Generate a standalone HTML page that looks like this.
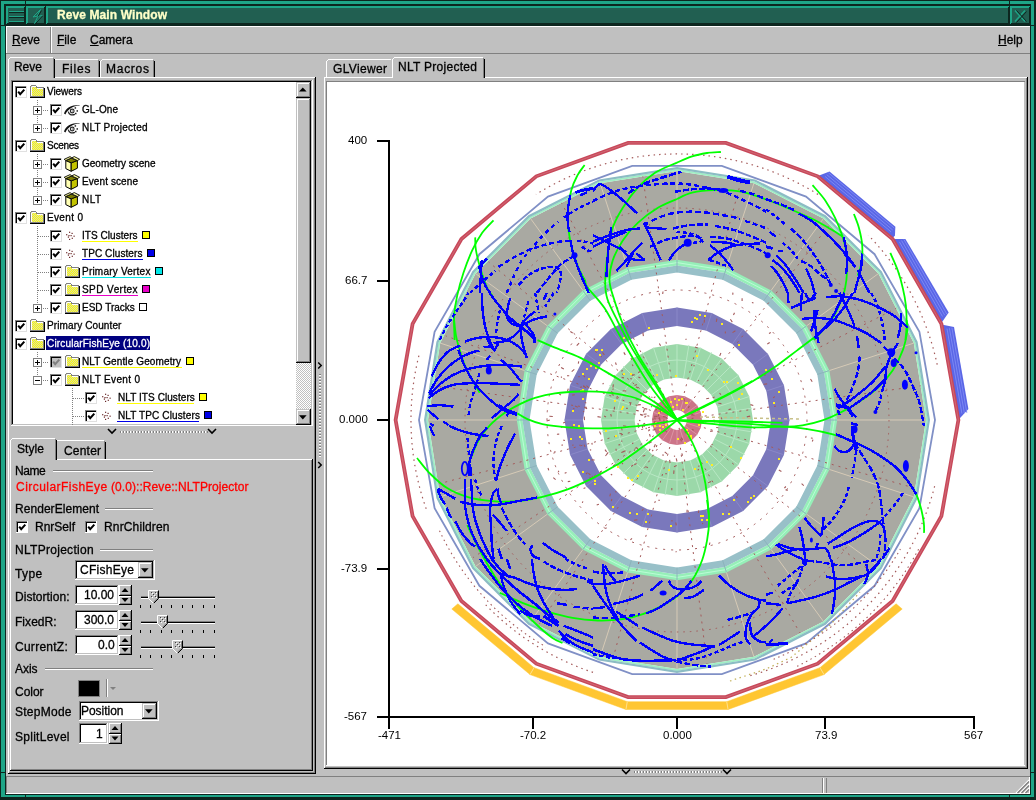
<!DOCTYPE html>
<html><head><meta charset="utf-8"><title>Reve Main Window</title>
<style>
html,body{margin:0;padding:0;background:#c0c0c0;}
#w{position:relative;width:1036px;height:800px;overflow:hidden;font-family:"Liberation Sans",sans-serif;}
#w div,#w span,#w svg{position:absolute;display:block;}
#w span{white-space:pre;will-change:transform;-webkit-text-stroke:0.3px currentColor;}
#w u{text-decoration:underline;text-underline-offset:1px;}
</style></head><body><div id="w">
<div style="left:0px;top:0px;width:1036px;height:800px;background:#0d261f;"></div>
<div style="left:1px;top:1px;width:1034px;height:798px;background:#1ea587;"></div>
<div style="left:4px;top:4px;width:1028px;height:792px;background:#0d261f;"></div>
<div style="left:1px;top:26px;width:4px;height:770px;background:#1ea587;"></div>
<div style="left:1031px;top:26px;width:4px;height:770px;background:#1ea587;"></div>
<div style="left:1px;top:795px;width:1034px;height:2px;background:#1ea587;"></div>
<div style="left:1035px;top:0px;width:1px;height:800px;background:#0d261f;"></div>
<div style="left:0px;top:797px;width:1036px;height:3px;background:#0d261f;"></div>
<div style="left:1034px;top:1px;width:2px;height:798px;background:#0d261f;"></div>
<div style="left:1px;top:1px;width:1033px;height:2px;background:#1ea587;"></div>
<div style="left:1px;top:1px;width:3px;height:24px;background:#1ea587;"></div>
<div style="left:1031px;top:1px;width:3px;height:24px;background:#1ea587;"></div>
<div style="left:0px;top:25px;width:6px;height:1px;background:#0d261f;"></div>
<div style="left:1030px;top:25px;width:6px;height:1px;background:#0d261f;"></div>
<div style="left:25px;top:0px;width:1px;height:6px;background:#0d261f;"></div>
<div style="left:1009px;top:0px;width:1px;height:6px;background:#0d261f;"></div>
<div style="left:0px;top:772px;width:6px;height:1px;background:#0d261f;"></div>
<div style="left:1030px;top:772px;width:6px;height:1px;background:#0d261f;"></div>
<div style="left:25px;top:794px;width:1px;height:6px;background:#0d261f;"></div>
<div style="left:1009px;top:794px;width:1px;height:6px;background:#0d261f;"></div>
<div style="left:6px;top:6px;width:1024px;height:20px;background:#0d261f;"></div>
<div style="left:6px;top:6px;width:19px;height:18px;background:#1ea587;"></div>
<div style="left:8px;top:8px;width:17px;height:16px;background:#215f51;"></div>
<div style="left:24px;top:7px;width:1px;height:17px;background:#0d261f;"></div>
<div style="left:7px;top:23px;width:18px;height:1px;background:#0d261f;"></div>
<div style="left:26px;top:6px;width:19px;height:18px;background:#1ea587;"></div>
<div style="left:28px;top:8px;width:17px;height:16px;background:#215f51;"></div>
<div style="left:44px;top:7px;width:1px;height:17px;background:#0d261f;"></div>
<div style="left:27px;top:23px;width:18px;height:1px;background:#0d261f;"></div>
<div style="left:46px;top:6px;width:963px;height:18px;background:#1ea587;"></div>
<div style="left:48px;top:8px;width:961px;height:16px;background:#215f51;"></div>
<div style="left:1008px;top:7px;width:1px;height:17px;background:#0d261f;"></div>
<div style="left:47px;top:23px;width:962px;height:1px;background:#0d261f;"></div>
<div style="left:1010px;top:6px;width:20px;height:18px;background:#1ea587;"></div>
<div style="left:1012px;top:8px;width:18px;height:16px;background:#215f51;"></div>
<div style="left:1029px;top:7px;width:1px;height:17px;background:#0d261f;"></div>
<div style="left:1011px;top:23px;width:19px;height:1px;background:#0d261f;"></div>
<div style="left:9px;top:11px;width:15px;height:1px;background:#1ea587;"></div>
<div style="left:9px;top:12px;width:15px;height:1px;background:#0d261f;"></div>
<div style="left:9px;top:16px;width:15px;height:1px;background:#1ea587;"></div>
<div style="left:9px;top:17px;width:15px;height:1px;background:#0d261f;"></div>
<div style="left:9px;top:21px;width:15px;height:1px;background:#1ea587;"></div>
<div style="left:9px;top:22px;width:15px;height:1px;background:#0d261f;"></div>
<svg style="left:26px;top:6px" width="20" height="19" viewBox="0 0 20 19" ><path d="M14.5,3.5 L7,11 L12,10 L8.5,17.5 L16,9.5 L11,10.5 Z" fill="none" stroke="#1ea587" stroke-width="1"/><path d="M15.5,4.5 L12,10.5 M16.5,10 L9.5,17.5" stroke="#0d261f" stroke-width="1" fill="none"/></svg>
<svg style="left:1010px;top:6px" width="20" height="19" viewBox="0 0 20 19" ><path d="M5,4.5 L15,15.5 M15,4.5 L5,15.5" stroke="#1ea587" stroke-width="1.6" fill="none"/><path d="M6.5,4.5 L16.5,15.5 M16.5,5.5 L6.5,16.5" stroke="#0d261f" stroke-width="1" fill="none"/></svg>
<span style="left:57.00px;top:8.84px;font-size:12px;line-height:12px;color:#ffffc8;font-weight:bold;letter-spacing:0.095px;">Reve Main Window</span>
<div style="left:6px;top:26px;width:1024px;height:768px;background:#c0c0c0;"></div>
<div style="left:6px;top:26px;width:1024px;height:1px;background:#ffffff;"></div>
<div style="left:6px;top:26px;width:1px;height:27px;background:#ffffff;"></div>
<div style="left:6px;top:53px;width:1024px;height:1px;background:#808080;"></div>
<div style="left:50px;top:27px;width:1px;height:26px;background:#808080;"></div>
<div style="left:51px;top:27px;width:1px;height:26px;background:#ffffff;"></div>
<span style="left:12.00px;top:33.84px;font-size:12px;line-height:12px;color:#000;"><u>R</u>eve</span>
<span style="left:57.00px;top:33.84px;font-size:12px;line-height:12px;color:#000;"><u>F</u>ile</span>
<span style="left:90.00px;top:33.84px;font-size:12px;line-height:12px;color:#000;"><u>C</u>amera</span>
<span style="left:998.00px;top:33.84px;font-size:12px;line-height:12px;color:#000;"><u>H</u>elp</span>
<div style="left:6px;top:776px;width:1024px;height:1px;background:#808080;"></div>
<div style="left:6px;top:777px;width:1024px;height:1px;background:#c0c0c0;"></div>
<div style="left:6px;top:793px;width:1024px;height:1px;background:#ffffff;"></div>
<div style="left:6px;top:777px;width:1px;height:16px;background:#808080;"></div>
<div style="left:822px;top:778px;width:1px;height:15px;background:#808080;"></div>
<div style="left:823px;top:778px;width:1px;height:15px;background:#ffffff;"></div>
<div style="left:826px;top:778px;width:1px;height:15px;background:#808080;"></div>
<div style="left:1029px;top:777px;width:1px;height:17px;background:#ffffff;"></div>
<svg style="left:1014px;top:778px" width="16" height="16" viewBox="0 0 16 16" ><path d="M2,15 L15,2 M6,15 L15,6 M10,15 L15,10" stroke="#fff" stroke-width="1.2"/><path d="M3.5,15 L15,3.5 M7.5,15 L15,7.5 M11.5,15 L15,11.5" stroke="#808080" stroke-width="1.4"/></svg>
<div style="left:8px;top:77px;width:307px;height:1px;background:#ffffff;"></div>
<div style="left:8px;top:77px;width:1px;height:696px;background:#ffffff;"></div>
<div style="left:9px;top:772px;width:306px;height:1px;background:#808080;"></div>
<div style="left:314px;top:78px;width:1px;height:695px;background:#808080;"></div>
<div style="left:8px;top:773px;width:308px;height:1px;background:#000000;"></div>
<div style="left:315px;top:77px;width:1px;height:697px;background:#000000;"></div>
<div style="left:9px;top:77px;width:46px;height:1px;background:#c0c0c0;"></div>
<div style="left:8px;top:59px;width:1px;height:19px;background:#ffffff;"></div>
<div style="left:9px;top:58px;width:1px;height:1px;background:#ffffff;"></div>
<div style="left:10px;top:57px;width:43px;height:1px;background:#ffffff;"></div>
<div style="left:53px;top:58px;width:1px;height:20px;background:#808080;"></div>
<div style="left:54px;top:59px;width:1px;height:19px;background:#000000;"></div>
<div style="left:55px;top:59px;width:43px;height:1px;background:#ffffff;"></div>
<div style="left:98px;top:60px;width:1px;height:17px;background:#808080;"></div>
<div style="left:99px;top:61px;width:1px;height:16px;background:#000000;"></div>
<div style="left:100px;top:61px;width:1px;height:16px;background:#ffffff;"></div>
<div style="left:101px;top:60px;width:1px;height:1px;background:#ffffff;"></div>
<div style="left:102px;top:59px;width:51px;height:1px;background:#ffffff;"></div>
<div style="left:153px;top:60px;width:1px;height:17px;background:#808080;"></div>
<div style="left:154px;top:61px;width:1px;height:16px;background:#000000;"></div>
<span style="left:14.40px;top:60.84px;font-size:12px;line-height:12px;color:#000;letter-spacing:-0.071px;">Reve</span>
<span style="left:61.50px;top:62.84px;font-size:12px;line-height:12px;color:#000;letter-spacing:0.791px;">Files</span>
<span style="left:105.50px;top:62.84px;font-size:12px;line-height:12px;color:#000;letter-spacing:0.732px;">Macros</span>
<div style="left:11px;top:80px;width:302px;height:346px;background:#ffffff;"></div>
<div style="left:11px;top:80px;width:301px;height:1px;background:#808080;"></div>
<div style="left:11px;top:80px;width:1px;height:345px;background:#808080;"></div>
<div style="left:12px;top:81px;width:299px;height:1px;background:#000000;"></div>
<div style="left:12px;top:81px;width:1px;height:343px;background:#000000;"></div>
<div style="left:12px;top:424px;width:300px;height:1px;background:#c0c0c0;"></div>
<div style="left:311px;top:81px;width:1px;height:344px;background:#c0c0c0;"></div>
<div style="left:11px;top:425px;width:302px;height:1px;background:#ffffff;"></div>
<div style="left:312px;top:80px;width:1px;height:346px;background:#ffffff;"></div>
<div style="left:37px;top:100px;width:1px;height:28px;background:repeating-linear-gradient(180deg,#808080 0 1px,transparent 1px 2px)"></div>
<div style="left:37px;top:154px;width:1px;height:46px;background:repeating-linear-gradient(180deg,#808080 0 1px,transparent 1px 2px)"></div>
<div style="left:37px;top:226px;width:1px;height:82px;background:repeating-linear-gradient(180deg,#808080 0 1px,transparent 1px 2px)"></div>
<div style="left:37px;top:352px;width:1px;height:28px;background:repeating-linear-gradient(180deg,#808080 0 1px,transparent 1px 2px)"></div>
<div style="left:72px;top:388px;width:1px;height:37px;background:repeating-linear-gradient(180deg,#808080 0 1px,transparent 1px 2px)"></div>
<div style="left:15px;top:86px;width:12px;height:12px;background:#ffffff;"></div>
<div style="left:15px;top:86px;width:12px;height:1px;background:#808080;"></div>
<div style="left:15px;top:86px;width:1px;height:12px;background:#808080;"></div>
<div style="left:16px;top:87px;width:10px;height:1px;background:#000000;"></div>
<div style="left:16px;top:87px;width:1px;height:10px;background:#000000;"></div>
<div style="left:26px;top:86px;width:1px;height:12px;background:#e0e0e0;"></div>
<div style="left:15px;top:97px;width:12px;height:1px;background:#e0e0e0;"></div>
<svg style="left:15px;top:86px" width="12" height="12" viewBox="0 0 12 12" ><path d="M3.2,5.6 L5.2,8.2 L9.3,3.6" stroke="#000" stroke-width="2" fill="none" stroke-linecap="butt"/></svg>
<svg style="left:30px;top:85px" width="16" height="14" viewBox="0 0 16 14" shape-rendering="crispEdges"><defs><pattern id="fd" width="2" height="2" patternUnits="userSpaceOnUse"><rect width="2" height="2" fill="#ffff00"/><rect width="1" height="1" fill="#d8d8b0"/><rect x="1" y="1" width="1" height="1" fill="#d8d8b0"/></pattern></defs><path d="M0.5,12.5 L0.5,1.5 L1.5,0.5 L5.5,0.5 L6.5,2.5 L13.5,2.5 L13.5,12.5 Z" fill="url(#fd)" stroke="#808080" stroke-width="1"/><path d="M0,12.5 L14.5,12.5 M14.5,13 L14.5,3" stroke="#000" stroke-width="1" fill="none"/><path d="M13.5,12 L13.5,3.5 M1,11.5 L13.5,11.5" stroke="#808080" stroke-width="1" fill="none"/><path d="M1.5,11 L1.5,2 M1.5,1.5 L5.5,1.5 M6.5,3.5 L13,3.5" stroke="#fff" stroke-width="1" fill="none"/></svg>
<span style="left:47.00px;top:86.53px;font-size:10px;line-height:10px;color:#000;letter-spacing:-0.065px;">Viewers</span>
<div style="left:33px;top:106px;width:9px;height:9px;background:#808080;"></div>
<div style="left:34px;top:107px;width:7px;height:7px;background:#ffffff;"></div>
<div style="left:35px;top:110px;width:5px;height:1px;background:#000000;"></div>
<div style="left:37px;top:108px;width:1px;height:5px;background:#000000;"></div>
<div style="left:43px;top:110px;width:6px;height:1px;background:repeating-linear-gradient(90deg,#808080 0 1px,transparent 1px 2px)"></div>
<div style="left:50px;top:104px;width:12px;height:12px;background:#ffffff;"></div>
<div style="left:50px;top:104px;width:12px;height:1px;background:#808080;"></div>
<div style="left:50px;top:104px;width:1px;height:12px;background:#808080;"></div>
<div style="left:51px;top:105px;width:10px;height:1px;background:#000000;"></div>
<div style="left:51px;top:105px;width:1px;height:10px;background:#000000;"></div>
<div style="left:61px;top:104px;width:1px;height:12px;background:#e0e0e0;"></div>
<div style="left:50px;top:115px;width:12px;height:1px;background:#e0e0e0;"></div>
<svg style="left:50px;top:104px" width="12" height="12" viewBox="0 0 12 12" ><path d="M3.2,5.6 L5.2,8.2 L9.3,3.6" stroke="#000" stroke-width="2" fill="none" stroke-linecap="butt"/></svg>
<svg style="left:64px;top:104px" width="18" height="14" viewBox="0 0 18 14" ><path d="M0,9.6 C1.6,4.2 6.5,0.9 15.6,0.9 L15.6,1.5 C9,2 4.5,4.6 1.4,10.4 Z" fill="#111"/><circle cx="8.2" cy="7" r="1.9" fill="none" stroke="#222" stroke-width="1.1"/><rect x="7.7" y="6.5" width="1" height="1" fill="#222"/><path d="M4.3,7.6 C4.8,10.6 7.6,11.6 10.9,10.4" stroke="#222" stroke-width="1.2" fill="none"/><rect x="10.6" y="3.2" width="1.5" height="1.5" fill="#222"/><rect x="12.5" y="6.2" width="1.5" height="1.5" fill="#222"/><rect x="11" y="8.8" width="1.5" height="1.5" fill="#222"/></svg>
<span style="left:82.00px;top:104.53px;font-size:10px;line-height:10px;color:#000;letter-spacing:0.085px;">GL-One</span>
<div style="left:33px;top:124px;width:9px;height:9px;background:#808080;"></div>
<div style="left:34px;top:125px;width:7px;height:7px;background:#ffffff;"></div>
<div style="left:35px;top:128px;width:5px;height:1px;background:#000000;"></div>
<div style="left:37px;top:126px;width:1px;height:5px;background:#000000;"></div>
<div style="left:43px;top:128px;width:6px;height:1px;background:repeating-linear-gradient(90deg,#808080 0 1px,transparent 1px 2px)"></div>
<div style="left:50px;top:122px;width:12px;height:12px;background:#ffffff;"></div>
<div style="left:50px;top:122px;width:12px;height:1px;background:#808080;"></div>
<div style="left:50px;top:122px;width:1px;height:12px;background:#808080;"></div>
<div style="left:51px;top:123px;width:10px;height:1px;background:#000000;"></div>
<div style="left:51px;top:123px;width:1px;height:10px;background:#000000;"></div>
<div style="left:61px;top:122px;width:1px;height:12px;background:#e0e0e0;"></div>
<div style="left:50px;top:133px;width:12px;height:1px;background:#e0e0e0;"></div>
<svg style="left:50px;top:122px" width="12" height="12" viewBox="0 0 12 12" ><path d="M3.2,5.6 L5.2,8.2 L9.3,3.6" stroke="#000" stroke-width="2" fill="none" stroke-linecap="butt"/></svg>
<svg style="left:64px;top:122px" width="18" height="14" viewBox="0 0 18 14" ><path d="M0,9.6 C1.6,4.2 6.5,0.9 15.6,0.9 L15.6,1.5 C9,2 4.5,4.6 1.4,10.4 Z" fill="#111"/><circle cx="8.2" cy="7" r="1.9" fill="none" stroke="#222" stroke-width="1.1"/><rect x="7.7" y="6.5" width="1" height="1" fill="#222"/><path d="M4.3,7.6 C4.8,10.6 7.6,11.6 10.9,10.4" stroke="#222" stroke-width="1.2" fill="none"/><rect x="10.6" y="3.2" width="1.5" height="1.5" fill="#222"/><rect x="12.5" y="6.2" width="1.5" height="1.5" fill="#222"/><rect x="11" y="8.8" width="1.5" height="1.5" fill="#222"/></svg>
<span style="left:82.00px;top:122.53px;font-size:10px;line-height:10px;color:#000;letter-spacing:0.208px;">NLT Projected</span>
<div style="left:15px;top:140px;width:12px;height:12px;background:#ffffff;"></div>
<div style="left:15px;top:140px;width:12px;height:1px;background:#808080;"></div>
<div style="left:15px;top:140px;width:1px;height:12px;background:#808080;"></div>
<div style="left:16px;top:141px;width:10px;height:1px;background:#000000;"></div>
<div style="left:16px;top:141px;width:1px;height:10px;background:#000000;"></div>
<div style="left:26px;top:140px;width:1px;height:12px;background:#e0e0e0;"></div>
<div style="left:15px;top:151px;width:12px;height:1px;background:#e0e0e0;"></div>
<svg style="left:15px;top:140px" width="12" height="12" viewBox="0 0 12 12" ><path d="M3.2,5.6 L5.2,8.2 L9.3,3.6" stroke="#000" stroke-width="2" fill="none" stroke-linecap="butt"/></svg>
<svg style="left:30px;top:139px" width="16" height="14" viewBox="0 0 16 14" shape-rendering="crispEdges"><path d="M0.5,12.5 L0.5,1.5 L1.5,0.5 L5.5,0.5 L6.5,2.5 L13.5,2.5 L13.5,12.5 Z" fill="url(#fd)" stroke="#808080" stroke-width="1"/><path d="M0,12.5 L14.5,12.5 M14.5,13 L14.5,3" stroke="#000" stroke-width="1" fill="none"/><path d="M13.5,12 L13.5,3.5 M1,11.5 L13.5,11.5" stroke="#808080" stroke-width="1" fill="none"/><path d="M1.5,11 L1.5,2 M1.5,1.5 L5.5,1.5 M6.5,3.5 L13,3.5" stroke="#fff" stroke-width="1" fill="none"/></svg>
<span style="left:47.00px;top:140.53px;font-size:10px;line-height:10px;color:#000;letter-spacing:-0.271px;">Scenes</span>
<div style="left:33px;top:160px;width:9px;height:9px;background:#808080;"></div>
<div style="left:34px;top:161px;width:7px;height:7px;background:#ffffff;"></div>
<div style="left:35px;top:164px;width:5px;height:1px;background:#000000;"></div>
<div style="left:37px;top:162px;width:1px;height:5px;background:#000000;"></div>
<div style="left:43px;top:164px;width:6px;height:1px;background:repeating-linear-gradient(90deg,#808080 0 1px,transparent 1px 2px)"></div>
<div style="left:50px;top:158px;width:12px;height:12px;background:#ffffff;"></div>
<div style="left:50px;top:158px;width:12px;height:1px;background:#808080;"></div>
<div style="left:50px;top:158px;width:1px;height:12px;background:#808080;"></div>
<div style="left:51px;top:159px;width:10px;height:1px;background:#000000;"></div>
<div style="left:51px;top:159px;width:1px;height:10px;background:#000000;"></div>
<div style="left:61px;top:158px;width:1px;height:12px;background:#e0e0e0;"></div>
<div style="left:50px;top:169px;width:12px;height:1px;background:#e0e0e0;"></div>
<svg style="left:50px;top:158px" width="12" height="12" viewBox="0 0 12 12" ><path d="M3.2,5.6 L5.2,8.2 L9.3,3.6" stroke="#000" stroke-width="2" fill="none" stroke-linecap="butt"/></svg>
<svg style="left:64px;top:156px" width="17" height="17" viewBox="0 0 17 17" ><path d="M1.8,4.5 L1.8,12.6 L7.2,15.3 L7.2,6.8 Z" fill="#ffffb4" stroke="#000" stroke-width="1"/><path d="M7.2,6.8 L7.2,15.3 L13.4,12.2 L13.4,4.5 Z" fill="#c4c400" stroke="#000" stroke-width="1"/><path d="M1.8,4.5 L7.2,2.2 L13.4,4.5 L7.2,6.8 Z" fill="#7c7c00" stroke="#000" stroke-width="0.8"/><path d="M1.8,4.5 L0.2,3.3 L6.1,0.6 L7.6,1.9 Z M13.4,4.5 L15.6,3.3 L10.3,0.6 L7.6,1.9 Z" fill="#ffffa0" stroke="#000" stroke-width="0.9"/></svg>
<span style="left:82.00px;top:158.53px;font-size:10px;line-height:10px;color:#000;letter-spacing:0.010px;">Geometry scene</span>
<div style="left:33px;top:178px;width:9px;height:9px;background:#808080;"></div>
<div style="left:34px;top:179px;width:7px;height:7px;background:#ffffff;"></div>
<div style="left:35px;top:182px;width:5px;height:1px;background:#000000;"></div>
<div style="left:37px;top:180px;width:1px;height:5px;background:#000000;"></div>
<div style="left:43px;top:182px;width:6px;height:1px;background:repeating-linear-gradient(90deg,#808080 0 1px,transparent 1px 2px)"></div>
<div style="left:50px;top:176px;width:12px;height:12px;background:#ffffff;"></div>
<div style="left:50px;top:176px;width:12px;height:1px;background:#808080;"></div>
<div style="left:50px;top:176px;width:1px;height:12px;background:#808080;"></div>
<div style="left:51px;top:177px;width:10px;height:1px;background:#000000;"></div>
<div style="left:51px;top:177px;width:1px;height:10px;background:#000000;"></div>
<div style="left:61px;top:176px;width:1px;height:12px;background:#e0e0e0;"></div>
<div style="left:50px;top:187px;width:12px;height:1px;background:#e0e0e0;"></div>
<svg style="left:50px;top:176px" width="12" height="12" viewBox="0 0 12 12" ><path d="M3.2,5.6 L5.2,8.2 L9.3,3.6" stroke="#000" stroke-width="2" fill="none" stroke-linecap="butt"/></svg>
<svg style="left:64px;top:174px" width="17" height="17" viewBox="0 0 17 17" ><path d="M1.8,4.5 L1.8,12.6 L7.2,15.3 L7.2,6.8 Z" fill="#ffffb4" stroke="#000" stroke-width="1"/><path d="M7.2,6.8 L7.2,15.3 L13.4,12.2 L13.4,4.5 Z" fill="#c4c400" stroke="#000" stroke-width="1"/><path d="M1.8,4.5 L7.2,2.2 L13.4,4.5 L7.2,6.8 Z" fill="#7c7c00" stroke="#000" stroke-width="0.8"/><path d="M1.8,4.5 L0.2,3.3 L6.1,0.6 L7.6,1.9 Z M13.4,4.5 L15.6,3.3 L10.3,0.6 L7.6,1.9 Z" fill="#ffffa0" stroke="#000" stroke-width="0.9"/></svg>
<span style="left:82.00px;top:176.53px;font-size:10px;line-height:10px;color:#000;letter-spacing:0.096px;">Event scene</span>
<div style="left:33px;top:196px;width:9px;height:9px;background:#808080;"></div>
<div style="left:34px;top:197px;width:7px;height:7px;background:#ffffff;"></div>
<div style="left:35px;top:200px;width:5px;height:1px;background:#000000;"></div>
<div style="left:37px;top:198px;width:1px;height:5px;background:#000000;"></div>
<div style="left:43px;top:200px;width:6px;height:1px;background:repeating-linear-gradient(90deg,#808080 0 1px,transparent 1px 2px)"></div>
<div style="left:50px;top:194px;width:12px;height:12px;background:#ffffff;"></div>
<div style="left:50px;top:194px;width:12px;height:1px;background:#808080;"></div>
<div style="left:50px;top:194px;width:1px;height:12px;background:#808080;"></div>
<div style="left:51px;top:195px;width:10px;height:1px;background:#000000;"></div>
<div style="left:51px;top:195px;width:1px;height:10px;background:#000000;"></div>
<div style="left:61px;top:194px;width:1px;height:12px;background:#e0e0e0;"></div>
<div style="left:50px;top:205px;width:12px;height:1px;background:#e0e0e0;"></div>
<svg style="left:50px;top:194px" width="12" height="12" viewBox="0 0 12 12" ><path d="M3.2,5.6 L5.2,8.2 L9.3,3.6" stroke="#000" stroke-width="2" fill="none" stroke-linecap="butt"/></svg>
<svg style="left:64px;top:192px" width="17" height="17" viewBox="0 0 17 17" ><path d="M1.8,4.5 L1.8,12.6 L7.2,15.3 L7.2,6.8 Z" fill="#ffffb4" stroke="#000" stroke-width="1"/><path d="M7.2,6.8 L7.2,15.3 L13.4,12.2 L13.4,4.5 Z" fill="#c4c400" stroke="#000" stroke-width="1"/><path d="M1.8,4.5 L7.2,2.2 L13.4,4.5 L7.2,6.8 Z" fill="#7c7c00" stroke="#000" stroke-width="0.8"/><path d="M1.8,4.5 L0.2,3.3 L6.1,0.6 L7.6,1.9 Z M13.4,4.5 L15.6,3.3 L10.3,0.6 L7.6,1.9 Z" fill="#ffffa0" stroke="#000" stroke-width="0.9"/></svg>
<span style="left:82.00px;top:194.53px;font-size:10px;line-height:10px;color:#000;letter-spacing:0.424px;">NLT</span>
<div style="left:15px;top:212px;width:12px;height:12px;background:#ffffff;"></div>
<div style="left:15px;top:212px;width:12px;height:1px;background:#808080;"></div>
<div style="left:15px;top:212px;width:1px;height:12px;background:#808080;"></div>
<div style="left:16px;top:213px;width:10px;height:1px;background:#000000;"></div>
<div style="left:16px;top:213px;width:1px;height:10px;background:#000000;"></div>
<div style="left:26px;top:212px;width:1px;height:12px;background:#e0e0e0;"></div>
<div style="left:15px;top:223px;width:12px;height:1px;background:#e0e0e0;"></div>
<svg style="left:15px;top:212px" width="12" height="12" viewBox="0 0 12 12" ><path d="M3.2,5.6 L5.2,8.2 L9.3,3.6" stroke="#000" stroke-width="2" fill="none" stroke-linecap="butt"/></svg>
<svg style="left:30px;top:211px" width="16" height="14" viewBox="0 0 16 14" shape-rendering="crispEdges"><path d="M0.5,12.5 L0.5,1.5 L1.5,0.5 L5.5,0.5 L6.5,2.5 L13.5,2.5 L13.5,12.5 Z" fill="url(#fd)" stroke="#808080" stroke-width="1"/><path d="M0,12.5 L14.5,12.5 M14.5,13 L14.5,3" stroke="#000" stroke-width="1" fill="none"/><path d="M13.5,12 L13.5,3.5 M1,11.5 L13.5,11.5" stroke="#808080" stroke-width="1" fill="none"/><path d="M1.5,11 L1.5,2 M1.5,1.5 L5.5,1.5 M6.5,3.5 L13,3.5" stroke="#fff" stroke-width="1" fill="none"/></svg>
<span style="left:47.00px;top:212.53px;font-size:10px;line-height:10px;color:#000;letter-spacing:0.347px;">Event 0</span>
<div style="left:38px;top:236px;width:11px;height:1px;background:repeating-linear-gradient(90deg,#808080 0 1px,transparent 1px 2px)"></div>
<div style="left:50px;top:230px;width:12px;height:12px;background:#ffffff;"></div>
<div style="left:50px;top:230px;width:12px;height:1px;background:#808080;"></div>
<div style="left:50px;top:230px;width:1px;height:12px;background:#808080;"></div>
<div style="left:51px;top:231px;width:10px;height:1px;background:#000000;"></div>
<div style="left:51px;top:231px;width:1px;height:10px;background:#000000;"></div>
<div style="left:61px;top:230px;width:1px;height:12px;background:#e0e0e0;"></div>
<div style="left:50px;top:241px;width:12px;height:1px;background:#e0e0e0;"></div>
<svg style="left:50px;top:230px" width="12" height="12" viewBox="0 0 12 12" ><path d="M3.2,5.6 L5.2,8.2 L9.3,3.6" stroke="#000" stroke-width="2" fill="none" stroke-linecap="butt"/></svg>
<svg style="left:64px;top:230px" width="13" height="12" viewBox="0 0 13 12" ><rect x="5.0" y="1.7" width="1.2" height="1.2" fill="#6a2828"/><rect x="7.5" y="2.8" width="1.2" height="1.2" fill="#6a2828"/><rect x="2.1" y="4.1" width="1.2" height="1.2" fill="#6a2828"/><rect x="4.4" y="5.0" width="1.2" height="1.2" fill="#6a2828"/><rect x="6.5" y="5.0" width="1.2" height="1.2" fill="#6a2828"/><rect x="9.5" y="5.6" width="1.2" height="1.2" fill="#6a2828"/><rect x="3.8" y="6.5" width="1.2" height="1.2" fill="#6a2828"/><rect x="7.7" y="7.7" width="1.2" height="1.2" fill="#6a2828"/><rect x="5.0" y="8.8" width="1.2" height="1.2" fill="#6a2828"/></svg>
<span style="left:82.00px;top:230.53px;font-size:10px;line-height:10px;color:#000;letter-spacing:0.053px;">ITS Clusters</span>
<div style="left:82px;top:241px;width:56px;height:1px;background:#ffff00;"></div>
<div style="left:142px;top:231px;width:8px;height:8px;background:#000000;"></div>
<div style="left:143px;top:232px;width:6px;height:6px;background:#ffff00;"></div>
<div style="left:38px;top:254px;width:11px;height:1px;background:repeating-linear-gradient(90deg,#808080 0 1px,transparent 1px 2px)"></div>
<div style="left:50px;top:248px;width:12px;height:12px;background:#ffffff;"></div>
<div style="left:50px;top:248px;width:12px;height:1px;background:#808080;"></div>
<div style="left:50px;top:248px;width:1px;height:12px;background:#808080;"></div>
<div style="left:51px;top:249px;width:10px;height:1px;background:#000000;"></div>
<div style="left:51px;top:249px;width:1px;height:10px;background:#000000;"></div>
<div style="left:61px;top:248px;width:1px;height:12px;background:#e0e0e0;"></div>
<div style="left:50px;top:259px;width:12px;height:1px;background:#e0e0e0;"></div>
<svg style="left:50px;top:248px" width="12" height="12" viewBox="0 0 12 12" ><path d="M3.2,5.6 L5.2,8.2 L9.3,3.6" stroke="#000" stroke-width="2" fill="none" stroke-linecap="butt"/></svg>
<svg style="left:64px;top:248px" width="13" height="12" viewBox="0 0 13 12" ><rect x="5.0" y="1.7" width="1.2" height="1.2" fill="#6a2828"/><rect x="7.5" y="2.8" width="1.2" height="1.2" fill="#6a2828"/><rect x="2.1" y="4.1" width="1.2" height="1.2" fill="#6a2828"/><rect x="4.4" y="5.0" width="1.2" height="1.2" fill="#6a2828"/><rect x="6.5" y="5.0" width="1.2" height="1.2" fill="#6a2828"/><rect x="9.5" y="5.6" width="1.2" height="1.2" fill="#6a2828"/><rect x="3.8" y="6.5" width="1.2" height="1.2" fill="#6a2828"/><rect x="7.7" y="7.7" width="1.2" height="1.2" fill="#6a2828"/><rect x="5.0" y="8.8" width="1.2" height="1.2" fill="#6a2828"/></svg>
<span style="left:82.00px;top:248.53px;font-size:10px;line-height:10px;color:#000;letter-spacing:0.085px;">TPC Clusters</span>
<div style="left:82px;top:259px;width:61px;height:1px;background:#0000e8;"></div>
<div style="left:147px;top:249px;width:8px;height:8px;background:#000000;"></div>
<div style="left:148px;top:250px;width:6px;height:6px;background:#0000e8;"></div>
<div style="left:38px;top:272px;width:11px;height:1px;background:repeating-linear-gradient(90deg,#808080 0 1px,transparent 1px 2px)"></div>
<div style="left:50px;top:266px;width:12px;height:12px;background:#ffffff;"></div>
<div style="left:50px;top:266px;width:12px;height:1px;background:#808080;"></div>
<div style="left:50px;top:266px;width:1px;height:12px;background:#808080;"></div>
<div style="left:51px;top:267px;width:10px;height:1px;background:#000000;"></div>
<div style="left:51px;top:267px;width:1px;height:10px;background:#000000;"></div>
<div style="left:61px;top:266px;width:1px;height:12px;background:#e0e0e0;"></div>
<div style="left:50px;top:277px;width:12px;height:1px;background:#e0e0e0;"></div>
<svg style="left:50px;top:266px" width="12" height="12" viewBox="0 0 12 12" ><path d="M3.2,5.6 L5.2,8.2 L9.3,3.6" stroke="#000" stroke-width="2" fill="none" stroke-linecap="butt"/></svg>
<svg style="left:65px;top:265px" width="16" height="14" viewBox="0 0 16 14" shape-rendering="crispEdges"><path d="M0.5,12.5 L0.5,1.5 L1.5,0.5 L5.5,0.5 L6.5,2.5 L13.5,2.5 L13.5,12.5 Z" fill="url(#fd)" stroke="#808080" stroke-width="1"/><path d="M0,12.5 L14.5,12.5 M14.5,13 L14.5,3" stroke="#000" stroke-width="1" fill="none"/><path d="M13.5,12 L13.5,3.5 M1,11.5 L13.5,11.5" stroke="#808080" stroke-width="1" fill="none"/><path d="M1.5,11 L1.5,2 M1.5,1.5 L5.5,1.5 M6.5,3.5 L13,3.5" stroke="#fff" stroke-width="1" fill="none"/></svg>
<span style="left:82.00px;top:266.54px;font-size:10px;line-height:10px;color:#000;letter-spacing:0.217px;">Primary Vertex</span>
<div style="left:82px;top:277px;width:69px;height:1px;background:#00e8e8;"></div>
<div style="left:155px;top:267px;width:8px;height:8px;background:#000000;"></div>
<div style="left:156px;top:268px;width:6px;height:6px;background:#00e8e8;"></div>
<div style="left:38px;top:290px;width:11px;height:1px;background:repeating-linear-gradient(90deg,#808080 0 1px,transparent 1px 2px)"></div>
<div style="left:50px;top:284px;width:12px;height:12px;background:#ffffff;"></div>
<div style="left:50px;top:284px;width:12px;height:1px;background:#808080;"></div>
<div style="left:50px;top:284px;width:1px;height:12px;background:#808080;"></div>
<div style="left:51px;top:285px;width:10px;height:1px;background:#000000;"></div>
<div style="left:51px;top:285px;width:1px;height:10px;background:#000000;"></div>
<div style="left:61px;top:284px;width:1px;height:12px;background:#e0e0e0;"></div>
<div style="left:50px;top:295px;width:12px;height:1px;background:#e0e0e0;"></div>
<svg style="left:50px;top:284px" width="12" height="12" viewBox="0 0 12 12" ><path d="M3.2,5.6 L5.2,8.2 L9.3,3.6" stroke="#000" stroke-width="2" fill="none" stroke-linecap="butt"/></svg>
<svg style="left:65px;top:283px" width="16" height="14" viewBox="0 0 16 14" shape-rendering="crispEdges"><path d="M0.5,12.5 L0.5,1.5 L1.5,0.5 L5.5,0.5 L6.5,2.5 L13.5,2.5 L13.5,12.5 Z" fill="url(#fd)" stroke="#808080" stroke-width="1"/><path d="M0,12.5 L14.5,12.5 M14.5,13 L14.5,3" stroke="#000" stroke-width="1" fill="none"/><path d="M13.5,12 L13.5,3.5 M1,11.5 L13.5,11.5" stroke="#808080" stroke-width="1" fill="none"/><path d="M1.5,11 L1.5,2 M1.5,1.5 L5.5,1.5 M6.5,3.5 L13,3.5" stroke="#fff" stroke-width="1" fill="none"/></svg>
<span style="left:82.00px;top:284.54px;font-size:10px;line-height:10px;color:#000;letter-spacing:0.434px;">SPD Vertex</span>
<div style="left:82px;top:295px;width:56px;height:1px;background:#e800c8;"></div>
<div style="left:142px;top:285px;width:8px;height:8px;background:#000000;"></div>
<div style="left:143px;top:286px;width:6px;height:6px;background:#e800c8;"></div>
<div style="left:33px;top:304px;width:9px;height:9px;background:#808080;"></div>
<div style="left:34px;top:305px;width:7px;height:7px;background:#ffffff;"></div>
<div style="left:35px;top:308px;width:5px;height:1px;background:#000000;"></div>
<div style="left:37px;top:306px;width:1px;height:5px;background:#000000;"></div>
<div style="left:43px;top:308px;width:6px;height:1px;background:repeating-linear-gradient(90deg,#808080 0 1px,transparent 1px 2px)"></div>
<div style="left:50px;top:302px;width:12px;height:12px;background:#ffffff;"></div>
<div style="left:50px;top:302px;width:12px;height:1px;background:#808080;"></div>
<div style="left:50px;top:302px;width:1px;height:12px;background:#808080;"></div>
<div style="left:51px;top:303px;width:10px;height:1px;background:#000000;"></div>
<div style="left:51px;top:303px;width:1px;height:10px;background:#000000;"></div>
<div style="left:61px;top:302px;width:1px;height:12px;background:#e0e0e0;"></div>
<div style="left:50px;top:313px;width:12px;height:1px;background:#e0e0e0;"></div>
<svg style="left:50px;top:302px" width="12" height="12" viewBox="0 0 12 12" ><path d="M3.2,5.6 L5.2,8.2 L9.3,3.6" stroke="#000" stroke-width="2" fill="none" stroke-linecap="butt"/></svg>
<svg style="left:65px;top:301px" width="16" height="14" viewBox="0 0 16 14" shape-rendering="crispEdges"><path d="M0.5,12.5 L0.5,1.5 L1.5,0.5 L5.5,0.5 L6.5,2.5 L13.5,2.5 L13.5,12.5 Z" fill="url(#fd)" stroke="#808080" stroke-width="1"/><path d="M0,12.5 L14.5,12.5 M14.5,13 L14.5,3" stroke="#000" stroke-width="1" fill="none"/><path d="M13.5,12 L13.5,3.5 M1,11.5 L13.5,11.5" stroke="#808080" stroke-width="1" fill="none"/><path d="M1.5,11 L1.5,2 M1.5,1.5 L5.5,1.5 M6.5,3.5 L13,3.5" stroke="#fff" stroke-width="1" fill="none"/></svg>
<span style="left:82.00px;top:302.54px;font-size:10px;line-height:10px;color:#000;letter-spacing:0.001px;">ESD Tracks</span>
<div style="left:139px;top:303px;width:8px;height:8px;background:#000000;"></div>
<div style="left:140px;top:304px;width:6px;height:6px;background:#ffffff;"></div>
<div style="left:15px;top:320px;width:12px;height:12px;background:#ffffff;"></div>
<div style="left:15px;top:320px;width:12px;height:1px;background:#808080;"></div>
<div style="left:15px;top:320px;width:1px;height:12px;background:#808080;"></div>
<div style="left:16px;top:321px;width:10px;height:1px;background:#000000;"></div>
<div style="left:16px;top:321px;width:1px;height:10px;background:#000000;"></div>
<div style="left:26px;top:320px;width:1px;height:12px;background:#e0e0e0;"></div>
<div style="left:15px;top:331px;width:12px;height:1px;background:#e0e0e0;"></div>
<svg style="left:15px;top:320px" width="12" height="12" viewBox="0 0 12 12" ><path d="M3.2,5.6 L5.2,8.2 L9.3,3.6" stroke="#000" stroke-width="2" fill="none" stroke-linecap="butt"/></svg>
<svg style="left:30px;top:319px" width="16" height="14" viewBox="0 0 16 14" shape-rendering="crispEdges"><path d="M0.5,12.5 L0.5,1.5 L1.5,0.5 L5.5,0.5 L6.5,2.5 L13.5,2.5 L13.5,12.5 Z" fill="url(#fd)" stroke="#808080" stroke-width="1"/><path d="M0,12.5 L14.5,12.5 M14.5,13 L14.5,3" stroke="#000" stroke-width="1" fill="none"/><path d="M13.5,12 L13.5,3.5 M1,11.5 L13.5,11.5" stroke="#808080" stroke-width="1" fill="none"/><path d="M1.5,11 L1.5,2 M1.5,1.5 L5.5,1.5 M6.5,3.5 L13,3.5" stroke="#fff" stroke-width="1" fill="none"/></svg>
<span style="left:47.00px;top:320.54px;font-size:10px;line-height:10px;color:#000;letter-spacing:0.114px;">Primary Counter</span>
<div style="left:15px;top:338px;width:12px;height:12px;background:#ffffff;"></div>
<div style="left:15px;top:338px;width:12px;height:1px;background:#808080;"></div>
<div style="left:15px;top:338px;width:1px;height:12px;background:#808080;"></div>
<div style="left:16px;top:339px;width:10px;height:1px;background:#000000;"></div>
<div style="left:16px;top:339px;width:1px;height:10px;background:#000000;"></div>
<div style="left:26px;top:338px;width:1px;height:12px;background:#e0e0e0;"></div>
<div style="left:15px;top:349px;width:12px;height:1px;background:#e0e0e0;"></div>
<svg style="left:15px;top:338px" width="12" height="12" viewBox="0 0 12 12" ><path d="M3.2,5.6 L5.2,8.2 L9.3,3.6" stroke="#000" stroke-width="2" fill="none" stroke-linecap="butt"/></svg>
<svg style="left:30px;top:337px" width="16" height="14" viewBox="0 0 16 14" shape-rendering="crispEdges"><path d="M0.5,12.5 L0.5,1.5 L1.5,0.5 L5.5,0.5 L6.5,2.5 L13.5,2.5 L13.5,12.5 Z" fill="url(#fd)" stroke="#808080" stroke-width="1"/><path d="M0,12.5 L14.5,12.5 M14.5,13 L14.5,3" stroke="#000" stroke-width="1" fill="none"/><path d="M13.5,12 L13.5,3.5 M1,11.5 L13.5,11.5" stroke="#808080" stroke-width="1" fill="none"/><path d="M1.5,11 L1.5,2 M1.5,1.5 L5.5,1.5 M6.5,3.5 L13,3.5" stroke="#fff" stroke-width="1" fill="none"/></svg>
<div style="left:46px;top:336px;width:104px;height:14px;background:#000080;"></div>
<span style="left:47.00px;top:338.54px;font-size:10px;line-height:10px;color:#fff;letter-spacing:0.167px;">CircularFishEye (10.0)</span>
<div style="left:33px;top:358px;width:9px;height:9px;background:#808080;"></div>
<div style="left:34px;top:359px;width:7px;height:7px;background:#ffffff;"></div>
<div style="left:35px;top:362px;width:5px;height:1px;background:#000000;"></div>
<div style="left:37px;top:360px;width:1px;height:5px;background:#000000;"></div>
<div style="left:43px;top:362px;width:6px;height:1px;background:repeating-linear-gradient(90deg,#808080 0 1px,transparent 1px 2px)"></div>
<div style="left:50px;top:356px;width:12px;height:12px;background:#c0c0c0;"></div>
<div style="left:50px;top:356px;width:12px;height:1px;background:#808080;"></div>
<div style="left:50px;top:356px;width:1px;height:12px;background:#808080;"></div>
<div style="left:51px;top:357px;width:10px;height:1px;background:#000000;"></div>
<div style="left:51px;top:357px;width:1px;height:10px;background:#000000;"></div>
<div style="left:61px;top:356px;width:1px;height:12px;background:#e0e0e0;"></div>
<div style="left:50px;top:367px;width:12px;height:1px;background:#e0e0e0;"></div>
<svg style="left:50px;top:356px" width="12" height="12" viewBox="0 0 12 12" ><path d="M3.2,5.6 L5.2,8.2 L9.3,3.6" stroke="#808080" stroke-width="2" fill="none" stroke-linecap="butt"/></svg>
<svg style="left:65px;top:355px" width="16" height="14" viewBox="0 0 16 14" shape-rendering="crispEdges"><path d="M0.5,12.5 L0.5,1.5 L1.5,0.5 L5.5,0.5 L6.5,2.5 L13.5,2.5 L13.5,12.5 Z" fill="url(#fd)" stroke="#808080" stroke-width="1"/><path d="M0,12.5 L14.5,12.5 M14.5,13 L14.5,3" stroke="#000" stroke-width="1" fill="none"/><path d="M13.5,12 L13.5,3.5 M1,11.5 L13.5,11.5" stroke="#808080" stroke-width="1" fill="none"/><path d="M1.5,11 L1.5,2 M1.5,1.5 L5.5,1.5 M6.5,3.5 L13,3.5" stroke="#fff" stroke-width="1" fill="none"/></svg>
<span style="left:82.00px;top:356.54px;font-size:10px;line-height:10px;color:#000;letter-spacing:0.116px;">NLT Gentle Geometry</span>
<div style="left:82px;top:367px;width:100px;height:1px;background:#ffff00;"></div>
<div style="left:186px;top:357px;width:8px;height:8px;background:#000000;"></div>
<div style="left:187px;top:358px;width:6px;height:6px;background:#ffff00;"></div>
<div style="left:33px;top:376px;width:9px;height:9px;background:#808080;"></div>
<div style="left:34px;top:377px;width:7px;height:7px;background:#ffffff;"></div>
<div style="left:35px;top:380px;width:5px;height:1px;background:#000000;"></div>
<div style="left:43px;top:380px;width:6px;height:1px;background:repeating-linear-gradient(90deg,#808080 0 1px,transparent 1px 2px)"></div>
<div style="left:50px;top:374px;width:12px;height:12px;background:#ffffff;"></div>
<div style="left:50px;top:374px;width:12px;height:1px;background:#808080;"></div>
<div style="left:50px;top:374px;width:1px;height:12px;background:#808080;"></div>
<div style="left:51px;top:375px;width:10px;height:1px;background:#000000;"></div>
<div style="left:51px;top:375px;width:1px;height:10px;background:#000000;"></div>
<div style="left:61px;top:374px;width:1px;height:12px;background:#e0e0e0;"></div>
<div style="left:50px;top:385px;width:12px;height:1px;background:#e0e0e0;"></div>
<svg style="left:50px;top:374px" width="12" height="12" viewBox="0 0 12 12" ><path d="M3.2,5.6 L5.2,8.2 L9.3,3.6" stroke="#000" stroke-width="2" fill="none" stroke-linecap="butt"/></svg>
<svg style="left:65px;top:373px" width="16" height="14" viewBox="0 0 16 14" shape-rendering="crispEdges"><path d="M0.5,12.5 L0.5,1.5 L1.5,0.5 L5.5,0.5 L6.5,2.5 L13.5,2.5 L13.5,12.5 Z" fill="url(#fd)" stroke="#808080" stroke-width="1"/><path d="M0,12.5 L14.5,12.5 M14.5,13 L14.5,3" stroke="#000" stroke-width="1" fill="none"/><path d="M13.5,12 L13.5,3.5 M1,11.5 L13.5,11.5" stroke="#808080" stroke-width="1" fill="none"/><path d="M1.5,11 L1.5,2 M1.5,1.5 L5.5,1.5 M6.5,3.5 L13,3.5" stroke="#fff" stroke-width="1" fill="none"/></svg>
<span style="left:82.00px;top:374.54px;font-size:10px;line-height:10px;color:#000;letter-spacing:0.333px;">NLT Event 0</span>
<div style="left:73px;top:398px;width:11px;height:1px;background:repeating-linear-gradient(90deg,#808080 0 1px,transparent 1px 2px)"></div>
<div style="left:85px;top:392px;width:12px;height:12px;background:#ffffff;"></div>
<div style="left:85px;top:392px;width:12px;height:1px;background:#808080;"></div>
<div style="left:85px;top:392px;width:1px;height:12px;background:#808080;"></div>
<div style="left:86px;top:393px;width:10px;height:1px;background:#000000;"></div>
<div style="left:86px;top:393px;width:1px;height:10px;background:#000000;"></div>
<div style="left:96px;top:392px;width:1px;height:12px;background:#e0e0e0;"></div>
<div style="left:85px;top:403px;width:12px;height:1px;background:#e0e0e0;"></div>
<svg style="left:85px;top:392px" width="12" height="12" viewBox="0 0 12 12" ><path d="M3.2,5.6 L5.2,8.2 L9.3,3.6" stroke="#000" stroke-width="2" fill="none" stroke-linecap="butt"/></svg>
<svg style="left:100px;top:392px" width="13" height="12" viewBox="0 0 13 12" ><rect x="5.0" y="1.7" width="1.2" height="1.2" fill="#6a2828"/><rect x="7.5" y="2.8" width="1.2" height="1.2" fill="#6a2828"/><rect x="2.1" y="4.1" width="1.2" height="1.2" fill="#6a2828"/><rect x="4.4" y="5.0" width="1.2" height="1.2" fill="#6a2828"/><rect x="6.5" y="5.0" width="1.2" height="1.2" fill="#6a2828"/><rect x="9.5" y="5.6" width="1.2" height="1.2" fill="#6a2828"/><rect x="3.8" y="6.5" width="1.2" height="1.2" fill="#6a2828"/><rect x="7.7" y="7.7" width="1.2" height="1.2" fill="#6a2828"/><rect x="5.0" y="8.8" width="1.2" height="1.2" fill="#6a2828"/></svg>
<span style="left:117.50px;top:392.54px;font-size:10px;line-height:10px;color:#000;letter-spacing:0.069px;">NLT ITS Clusters</span>
<div style="left:117px;top:403px;width:77px;height:1px;background:#ffff00;"></div>
<div style="left:199px;top:393px;width:8px;height:8px;background:#000000;"></div>
<div style="left:200px;top:394px;width:6px;height:6px;background:#ffff00;"></div>
<div style="left:73px;top:416px;width:11px;height:1px;background:repeating-linear-gradient(90deg,#808080 0 1px,transparent 1px 2px)"></div>
<div style="left:85px;top:410px;width:12px;height:12px;background:#ffffff;"></div>
<div style="left:85px;top:410px;width:12px;height:1px;background:#808080;"></div>
<div style="left:85px;top:410px;width:1px;height:12px;background:#808080;"></div>
<div style="left:86px;top:411px;width:10px;height:1px;background:#000000;"></div>
<div style="left:86px;top:411px;width:1px;height:10px;background:#000000;"></div>
<div style="left:96px;top:410px;width:1px;height:12px;background:#e0e0e0;"></div>
<div style="left:85px;top:421px;width:12px;height:1px;background:#e0e0e0;"></div>
<svg style="left:85px;top:410px" width="12" height="12" viewBox="0 0 12 12" ><path d="M3.2,5.6 L5.2,8.2 L9.3,3.6" stroke="#000" stroke-width="2" fill="none" stroke-linecap="butt"/></svg>
<svg style="left:100px;top:410px" width="13" height="12" viewBox="0 0 13 12" ><rect x="5.0" y="1.7" width="1.2" height="1.2" fill="#6a2828"/><rect x="7.5" y="2.8" width="1.2" height="1.2" fill="#6a2828"/><rect x="2.1" y="4.1" width="1.2" height="1.2" fill="#6a2828"/><rect x="4.4" y="5.0" width="1.2" height="1.2" fill="#6a2828"/><rect x="6.5" y="5.0" width="1.2" height="1.2" fill="#6a2828"/><rect x="9.5" y="5.6" width="1.2" height="1.2" fill="#6a2828"/><rect x="3.8" y="6.5" width="1.2" height="1.2" fill="#6a2828"/><rect x="7.7" y="7.7" width="1.2" height="1.2" fill="#6a2828"/><rect x="5.0" y="8.8" width="1.2" height="1.2" fill="#6a2828"/></svg>
<span style="left:117.50px;top:410.54px;font-size:10px;line-height:10px;color:#000;letter-spacing:0.124px;">NLT TPC Clusters</span>
<div style="left:117px;top:421px;width:82px;height:1px;background:#0000e8;"></div>
<div style="left:204px;top:411px;width:8px;height:8px;background:#000000;"></div>
<div style="left:205px;top:412px;width:6px;height:6px;background:#0000e8;"></div>
<div style="left:296px;top:82px;width:15px;height:342px;background:#c0c0c0;"></div>
<div style="left:296px;top:363px;width:15px;height:47px;background:repeating-conic-gradient(#c0c0c0 0 25%,#ffffff 0 50%) 0 0/2px 2px"></div>
<div style="left:296px;top:82px;width:15px;height:16px;background:#c0c0c0;"></div>
<div style="left:297px;top:83px;width:13px;height:1px;background:#ffffff;"></div>
<div style="left:297px;top:83px;width:1px;height:14px;background:#ffffff;"></div>
<div style="left:297px;top:96px;width:13px;height:1px;background:#808080;"></div>
<div style="left:309px;top:83px;width:1px;height:14px;background:#808080;"></div>
<div style="left:296px;top:97px;width:15px;height:1px;background:#000000;"></div>
<div style="left:310px;top:82px;width:1px;height:16px;background:#000000;"></div>
<svg style="left:296px;top:82px" width="15" height="16" viewBox="0 0 15 16" ><path d="M3.0,9.6 L6.8,5.4 L10.6,9.6 Z" fill="#000"/></svg>
<div style="left:296px;top:98px;width:15px;height:265px;background:#c0c0c0;"></div>
<div style="left:297px;top:99px;width:13px;height:1px;background:#ffffff;"></div>
<div style="left:297px;top:99px;width:1px;height:263px;background:#ffffff;"></div>
<div style="left:297px;top:361px;width:13px;height:1px;background:#808080;"></div>
<div style="left:309px;top:99px;width:1px;height:263px;background:#808080;"></div>
<div style="left:296px;top:362px;width:15px;height:1px;background:#000000;"></div>
<div style="left:310px;top:98px;width:1px;height:265px;background:#000000;"></div>
<div style="left:296px;top:409px;width:15px;height:16px;background:#c0c0c0;"></div>
<div style="left:297px;top:410px;width:13px;height:1px;background:#ffffff;"></div>
<div style="left:297px;top:410px;width:1px;height:14px;background:#ffffff;"></div>
<div style="left:297px;top:423px;width:13px;height:1px;background:#808080;"></div>
<div style="left:309px;top:410px;width:1px;height:14px;background:#808080;"></div>
<div style="left:296px;top:424px;width:15px;height:1px;background:#000000;"></div>
<div style="left:310px;top:409px;width:1px;height:16px;background:#000000;"></div>
<svg style="left:296px;top:409px" width="15" height="16" viewBox="0 0 15 16" ><path d="M3.0,6.2 L6.8,10.4 L10.6,6.2 Z" fill="#000"/></svg>
<svg style="left:100px;top:427px" width="130" height="10" viewBox="0 0 130 10" ><path d="M8,2 L12,6 L16,2" stroke="#000" stroke-width="1.6" fill="none"/><path d="M108,2 L112,6 L116,2" stroke="#000" stroke-width="1.6" fill="none"/></svg>
<div style="left:120px;top:431px;width:88px;height:2px;background:repeating-linear-gradient(90deg,#808080 0 1px,#fff 1px 2px,transparent 2px 3px)"></div>
<div style="left:10px;top:459px;width:302px;height:1px;background:#ffffff;"></div>
<div style="left:10px;top:459px;width:1px;height:311px;background:#ffffff;"></div>
<div style="left:11px;top:769px;width:301px;height:1px;background:#808080;"></div>
<div style="left:311px;top:460px;width:1px;height:310px;background:#808080;"></div>
<div style="left:10px;top:770px;width:303px;height:1px;background:#000000;"></div>
<div style="left:312px;top:459px;width:1px;height:312px;background:#000000;"></div>
<div style="left:11px;top:459px;width:45px;height:1px;background:#c0c0c0;"></div>
<div style="left:10px;top:440px;width:1px;height:20px;background:#ffffff;"></div>
<div style="left:11px;top:439px;width:1px;height:1px;background:#ffffff;"></div>
<div style="left:12px;top:438px;width:43px;height:1px;background:#ffffff;"></div>
<div style="left:55px;top:439px;width:1px;height:21px;background:#808080;"></div>
<div style="left:56px;top:440px;width:1px;height:20px;background:#000000;"></div>
<div style="left:57px;top:440px;width:47px;height:1px;background:#ffffff;"></div>
<div style="left:104px;top:441px;width:1px;height:18px;background:#808080;"></div>
<div style="left:105px;top:442px;width:1px;height:17px;background:#000000;"></div>
<span style="left:16.50px;top:442.84px;font-size:12px;line-height:12px;color:#000;letter-spacing:0.081px;">Style</span>
<span style="left:63.50px;top:444.84px;font-size:12px;line-height:12px;color:#000;letter-spacing:0.196px;">Center</span>
<span style="left:14.80px;top:464.84px;font-size:12px;line-height:12px;color:#000;letter-spacing:-0.470px;">Name</span>
<div style="left:53px;top:470px;width:100px;height:1px;background:#808080;"></div>
<div style="left:53px;top:471px;width:100px;height:1px;background:#ffffff;"></div>
<span style="left:16.00px;top:481.24px;font-size:12px;line-height:12px;color:#ff0000;letter-spacing:0.465px;">CircularFishEye </span>
<span style="left:111.00px;top:481.24px;font-size:12px;line-height:12px;color:#ff0000;letter-spacing:0.070px;">(0.0)::Reve::NLTProjector</span>
<span style="left:14.80px;top:502.84px;font-size:12px;line-height:12px;color:#000;letter-spacing:0.052px;">RenderElement</span>
<div style="left:105px;top:508px;width:48px;height:1px;background:#808080;"></div>
<div style="left:105px;top:509px;width:48px;height:1px;background:#ffffff;"></div>
<div style="left:16px;top:521px;width:12px;height:12px;background:#ffffff;"></div>
<div style="left:16px;top:521px;width:12px;height:1px;background:#808080;"></div>
<div style="left:16px;top:521px;width:1px;height:12px;background:#808080;"></div>
<div style="left:17px;top:522px;width:10px;height:1px;background:#000000;"></div>
<div style="left:17px;top:522px;width:1px;height:10px;background:#000000;"></div>
<div style="left:27px;top:521px;width:1px;height:12px;background:#fff;"></div>
<div style="left:16px;top:532px;width:12px;height:1px;background:#fff;"></div>
<svg style="left:16px;top:521px" width="12" height="12" viewBox="0 0 12 12" ><path d="M3.2,5.6 L5.2,8.2 L9.3,3.6" stroke="#000" stroke-width="2" fill="none" stroke-linecap="butt"/></svg>
<span style="left:35.00px;top:520.84px;font-size:12px;line-height:12px;color:#000;letter-spacing:-0.002px;">RnrSelf</span>
<div style="left:85px;top:521px;width:12px;height:12px;background:#ffffff;"></div>
<div style="left:85px;top:521px;width:12px;height:1px;background:#808080;"></div>
<div style="left:85px;top:521px;width:1px;height:12px;background:#808080;"></div>
<div style="left:86px;top:522px;width:10px;height:1px;background:#000000;"></div>
<div style="left:86px;top:522px;width:1px;height:10px;background:#000000;"></div>
<div style="left:96px;top:521px;width:1px;height:12px;background:#fff;"></div>
<div style="left:85px;top:532px;width:12px;height:1px;background:#fff;"></div>
<svg style="left:85px;top:521px" width="12" height="12" viewBox="0 0 12 12" ><path d="M3.2,5.6 L5.2,8.2 L9.3,3.6" stroke="#000" stroke-width="2" fill="none" stroke-linecap="butt"/></svg>
<span style="left:104.00px;top:520.84px;font-size:12px;line-height:12px;color:#000;letter-spacing:0.147px;">RnrChildren</span>
<span style="left:14.80px;top:543.84px;font-size:12px;line-height:12px;color:#000;letter-spacing:0.288px;">NLTProjection</span>
<div style="left:100px;top:549px;width:53px;height:1px;background:#808080;"></div>
<div style="left:100px;top:550px;width:53px;height:1px;background:#ffffff;"></div>
<span style="left:15.00px;top:567.84px;font-size:12px;line-height:12px;color:#000;letter-spacing:0.395px;">Type</span>
<div style="left:75px;top:560px;width:80px;height:20px;background:#ffffff;"></div>
<div style="left:75px;top:560px;width:79px;height:1px;background:#808080;"></div>
<div style="left:75px;top:560px;width:1px;height:19px;background:#808080;"></div>
<div style="left:76px;top:561px;width:77px;height:1px;background:#000000;"></div>
<div style="left:76px;top:561px;width:1px;height:17px;background:#000000;"></div>
<div style="left:76px;top:578px;width:78px;height:1px;background:#c0c0c0;"></div>
<div style="left:153px;top:561px;width:1px;height:18px;background:#c0c0c0;"></div>
<div style="left:75px;top:579px;width:80px;height:1px;background:#ffffff;"></div>
<div style="left:154px;top:560px;width:1px;height:20px;background:#ffffff;"></div>
<span style="left:80.00px;top:563.84px;font-size:12px;line-height:12px;color:#000;letter-spacing:0.284px;">CFishEye</span>
<div style="left:138px;top:562px;width:15px;height:16px;background:#c0c0c0;"></div>
<div style="left:139px;top:563px;width:13px;height:1px;background:#ffffff;"></div>
<div style="left:139px;top:563px;width:1px;height:14px;background:#ffffff;"></div>
<div style="left:139px;top:576px;width:13px;height:1px;background:#808080;"></div>
<div style="left:151px;top:563px;width:1px;height:14px;background:#808080;"></div>
<div style="left:138px;top:577px;width:15px;height:1px;background:#000000;"></div>
<div style="left:152px;top:562px;width:1px;height:16px;background:#000000;"></div>
<svg style="left:138px;top:562px" width="15" height="16" viewBox="0 0 15 16" ><path d="M3.0,6.2 L6.8,10.4 L10.6,6.2 Z" fill="#000"/></svg>
<span style="left:14.80px;top:590.84px;font-size:12px;line-height:12px;color:#000;letter-spacing:0.048px;">Distortion:</span>
<div style="left:75px;top:585px;width:44px;height:20px;background:#ffffff;"></div>
<div style="left:75px;top:585px;width:43px;height:1px;background:#808080;"></div>
<div style="left:75px;top:585px;width:1px;height:19px;background:#808080;"></div>
<div style="left:76px;top:586px;width:41px;height:1px;background:#000000;"></div>
<div style="left:76px;top:586px;width:1px;height:17px;background:#000000;"></div>
<div style="left:76px;top:603px;width:42px;height:1px;background:#c0c0c0;"></div>
<div style="left:117px;top:586px;width:1px;height:18px;background:#c0c0c0;"></div>
<div style="left:75px;top:604px;width:44px;height:1px;background:#ffffff;"></div>
<div style="left:118px;top:585px;width:1px;height:20px;background:#ffffff;"></div>
<span style="left:84.27px;top:588.84px;font-size:12px;line-height:12px;color:#000;">10.00</span>
<div style="left:119px;top:585px;width:13px;height:11px;background:#c0c0c0;"></div>
<div style="left:119px;top:585px;width:12px;height:1px;background:#ffffff;"></div>
<div style="left:119px;top:585px;width:1px;height:10px;background:#ffffff;"></div>
<div style="left:120px;top:594px;width:11px;height:1px;background:#808080;"></div>
<div style="left:130px;top:586px;width:1px;height:9px;background:#808080;"></div>
<div style="left:119px;top:595px;width:13px;height:1px;background:#000000;"></div>
<div style="left:131px;top:585px;width:1px;height:11px;background:#000000;"></div>
<svg style="left:119px;top:585px" width="13" height="11" viewBox="0 0 13 11" ><path d="M2.5,7.0 L6,3.0 L9.5,7.0 Z" fill="#000"/></svg>
<div style="left:119px;top:596px;width:13px;height:9px;background:#c0c0c0;"></div>
<div style="left:119px;top:596px;width:12px;height:1px;background:#ffffff;"></div>
<div style="left:119px;top:596px;width:1px;height:8px;background:#ffffff;"></div>
<div style="left:120px;top:603px;width:11px;height:1px;background:#808080;"></div>
<div style="left:130px;top:597px;width:1px;height:7px;background:#808080;"></div>
<div style="left:119px;top:604px;width:13px;height:1px;background:#000000;"></div>
<div style="left:131px;top:596px;width:1px;height:9px;background:#000000;"></div>
<svg style="left:119px;top:596px" width="13" height="9" viewBox="0 0 13 9" ><path d="M2.5,2.0 L6,6.0 L9.5,2.0 Z" fill="#000"/></svg>
<div style="left:141px;top:596px;width:74px;height:1px;background:#808080;"></div>
<div style="left:141px;top:597px;width:74px;height:1px;background:#000000;"></div>
<div style="left:141px;top:598px;width:74px;height:1px;background:#ffffff;"></div>
<div style="left:140px;top:605px;width:1px;height:3px;background:#000000;"></div>
<div style="left:150px;top:605px;width:1px;height:3px;background:#000000;"></div>
<div style="left:161px;top:605px;width:1px;height:3px;background:#000000;"></div>
<div style="left:171px;top:605px;width:1px;height:3px;background:#000000;"></div>
<div style="left:182px;top:605px;width:1px;height:3px;background:#000000;"></div>
<div style="left:192px;top:605px;width:1px;height:3px;background:#000000;"></div>
<div style="left:203px;top:605px;width:1px;height:3px;background:#000000;"></div>
<div style="left:214px;top:605px;width:1px;height:3px;background:#000000;"></div>
<svg style="left:148px;top:589px" width="12" height="16" viewBox="0 0 12 16" ><path d="M0.5,1.5 L10.5,1.5 L10.5,9.5 L5.5,14.5 L0.5,9.5 Z" fill="#c0c0c0" stroke="none"/><path d="M0.5,9.5 L0.5,1.5 L10.5,1.5" stroke="#fff" fill="none"/><path d="M10.5,1.5 L10.5,9.5 L5.5,14.5" stroke="#000" fill="none"/><path d="M9.5,2.5 L9.5,9.2 L5.5,13.2" stroke="#808080" fill="none"/><path d="M0.5,9.5 L5.5,14.5" stroke="#fff" fill="none"/><rect x="3" y="3" width="1" height="1" fill="#404040"/><rect x="7" y="3" width="1" height="1" fill="#404040"/><rect x="5" y="5" width="1" height="1" fill="#404040"/><rect x="3" y="7" width="1" height="1" fill="#404040"/><rect x="7" y="7" width="1" height="1" fill="#404040"/><rect x="4" y="4" width="1" height="1" fill="#fff"/><rect x="8" y="4" width="1" height="1" fill="#fff"/><rect x="6" y="6" width="1" height="1" fill="#fff"/><rect x="4" y="8" width="1" height="1" fill="#fff"/><rect x="8" y="8" width="1" height="1" fill="#fff"/></svg>
<span style="left:14.80px;top:615.84px;font-size:12px;line-height:12px;color:#000;letter-spacing:0.043px;">FixedR:</span>
<div style="left:75px;top:610px;width:44px;height:20px;background:#ffffff;"></div>
<div style="left:75px;top:610px;width:43px;height:1px;background:#808080;"></div>
<div style="left:75px;top:610px;width:1px;height:19px;background:#808080;"></div>
<div style="left:76px;top:611px;width:41px;height:1px;background:#000000;"></div>
<div style="left:76px;top:611px;width:1px;height:17px;background:#000000;"></div>
<div style="left:76px;top:628px;width:42px;height:1px;background:#c0c0c0;"></div>
<div style="left:117px;top:611px;width:1px;height:18px;background:#c0c0c0;"></div>
<div style="left:75px;top:629px;width:44px;height:1px;background:#ffffff;"></div>
<div style="left:118px;top:610px;width:1px;height:20px;background:#ffffff;"></div>
<span style="left:84.27px;top:613.84px;font-size:12px;line-height:12px;color:#000;">300.0</span>
<div style="left:119px;top:610px;width:13px;height:11px;background:#c0c0c0;"></div>
<div style="left:119px;top:610px;width:12px;height:1px;background:#ffffff;"></div>
<div style="left:119px;top:610px;width:1px;height:10px;background:#ffffff;"></div>
<div style="left:120px;top:619px;width:11px;height:1px;background:#808080;"></div>
<div style="left:130px;top:611px;width:1px;height:9px;background:#808080;"></div>
<div style="left:119px;top:620px;width:13px;height:1px;background:#000000;"></div>
<div style="left:131px;top:610px;width:1px;height:11px;background:#000000;"></div>
<svg style="left:119px;top:610px" width="13" height="11" viewBox="0 0 13 11" ><path d="M2.5,7.0 L6,3.0 L9.5,7.0 Z" fill="#000"/></svg>
<div style="left:119px;top:621px;width:13px;height:9px;background:#c0c0c0;"></div>
<div style="left:119px;top:621px;width:12px;height:1px;background:#ffffff;"></div>
<div style="left:119px;top:621px;width:1px;height:8px;background:#ffffff;"></div>
<div style="left:120px;top:628px;width:11px;height:1px;background:#808080;"></div>
<div style="left:130px;top:622px;width:1px;height:7px;background:#808080;"></div>
<div style="left:119px;top:629px;width:13px;height:1px;background:#000000;"></div>
<div style="left:131px;top:621px;width:1px;height:9px;background:#000000;"></div>
<svg style="left:119px;top:621px" width="13" height="9" viewBox="0 0 13 9" ><path d="M2.5,2.0 L6,6.0 L9.5,2.0 Z" fill="#000"/></svg>
<div style="left:141px;top:621px;width:74px;height:1px;background:#808080;"></div>
<div style="left:141px;top:622px;width:74px;height:1px;background:#000000;"></div>
<div style="left:141px;top:623px;width:74px;height:1px;background:#ffffff;"></div>
<div style="left:140px;top:630px;width:1px;height:3px;background:#000000;"></div>
<div style="left:150px;top:630px;width:1px;height:3px;background:#000000;"></div>
<div style="left:161px;top:630px;width:1px;height:3px;background:#000000;"></div>
<div style="left:171px;top:630px;width:1px;height:3px;background:#000000;"></div>
<div style="left:182px;top:630px;width:1px;height:3px;background:#000000;"></div>
<div style="left:192px;top:630px;width:1px;height:3px;background:#000000;"></div>
<div style="left:203px;top:630px;width:1px;height:3px;background:#000000;"></div>
<div style="left:214px;top:630px;width:1px;height:3px;background:#000000;"></div>
<svg style="left:157px;top:614px" width="12" height="16" viewBox="0 0 12 16" ><path d="M0.5,1.5 L10.5,1.5 L10.5,9.5 L5.5,14.5 L0.5,9.5 Z" fill="#c0c0c0" stroke="none"/><path d="M0.5,9.5 L0.5,1.5 L10.5,1.5" stroke="#fff" fill="none"/><path d="M10.5,1.5 L10.5,9.5 L5.5,14.5" stroke="#000" fill="none"/><path d="M9.5,2.5 L9.5,9.2 L5.5,13.2" stroke="#808080" fill="none"/><path d="M0.5,9.5 L5.5,14.5" stroke="#fff" fill="none"/><rect x="3" y="3" width="1" height="1" fill="#404040"/><rect x="7" y="3" width="1" height="1" fill="#404040"/><rect x="5" y="5" width="1" height="1" fill="#404040"/><rect x="3" y="7" width="1" height="1" fill="#404040"/><rect x="7" y="7" width="1" height="1" fill="#404040"/><rect x="4" y="4" width="1" height="1" fill="#fff"/><rect x="8" y="4" width="1" height="1" fill="#fff"/><rect x="6" y="6" width="1" height="1" fill="#fff"/><rect x="4" y="8" width="1" height="1" fill="#fff"/><rect x="8" y="8" width="1" height="1" fill="#fff"/></svg>
<span style="left:14.80px;top:640.84px;font-size:12px;line-height:12px;color:#000;letter-spacing:0.265px;">CurrentZ:</span>
<div style="left:75px;top:635px;width:44px;height:20px;background:#ffffff;"></div>
<div style="left:75px;top:635px;width:43px;height:1px;background:#808080;"></div>
<div style="left:75px;top:635px;width:1px;height:19px;background:#808080;"></div>
<div style="left:76px;top:636px;width:41px;height:1px;background:#000000;"></div>
<div style="left:76px;top:636px;width:1px;height:17px;background:#000000;"></div>
<div style="left:76px;top:653px;width:42px;height:1px;background:#c0c0c0;"></div>
<div style="left:117px;top:636px;width:1px;height:18px;background:#c0c0c0;"></div>
<div style="left:75px;top:654px;width:44px;height:1px;background:#ffffff;"></div>
<div style="left:118px;top:635px;width:1px;height:20px;background:#ffffff;"></div>
<span style="left:97.62px;top:638.84px;font-size:12px;line-height:12px;color:#000;">0.0</span>
<div style="left:119px;top:635px;width:13px;height:11px;background:#c0c0c0;"></div>
<div style="left:119px;top:635px;width:12px;height:1px;background:#ffffff;"></div>
<div style="left:119px;top:635px;width:1px;height:10px;background:#ffffff;"></div>
<div style="left:120px;top:644px;width:11px;height:1px;background:#808080;"></div>
<div style="left:130px;top:636px;width:1px;height:9px;background:#808080;"></div>
<div style="left:119px;top:645px;width:13px;height:1px;background:#000000;"></div>
<div style="left:131px;top:635px;width:1px;height:11px;background:#000000;"></div>
<svg style="left:119px;top:635px" width="13" height="11" viewBox="0 0 13 11" ><path d="M2.5,7.0 L6,3.0 L9.5,7.0 Z" fill="#000"/></svg>
<div style="left:119px;top:646px;width:13px;height:9px;background:#c0c0c0;"></div>
<div style="left:119px;top:646px;width:12px;height:1px;background:#ffffff;"></div>
<div style="left:119px;top:646px;width:1px;height:8px;background:#ffffff;"></div>
<div style="left:120px;top:653px;width:11px;height:1px;background:#808080;"></div>
<div style="left:130px;top:647px;width:1px;height:7px;background:#808080;"></div>
<div style="left:119px;top:654px;width:13px;height:1px;background:#000000;"></div>
<div style="left:131px;top:646px;width:1px;height:9px;background:#000000;"></div>
<svg style="left:119px;top:646px" width="13" height="9" viewBox="0 0 13 9" ><path d="M2.5,2.0 L6,6.0 L9.5,2.0 Z" fill="#000"/></svg>
<div style="left:141px;top:646px;width:74px;height:1px;background:#808080;"></div>
<div style="left:141px;top:647px;width:74px;height:1px;background:#000000;"></div>
<div style="left:141px;top:648px;width:74px;height:1px;background:#ffffff;"></div>
<div style="left:140px;top:655px;width:1px;height:3px;background:#000000;"></div>
<div style="left:150px;top:655px;width:1px;height:3px;background:#000000;"></div>
<div style="left:161px;top:655px;width:1px;height:3px;background:#000000;"></div>
<div style="left:171px;top:655px;width:1px;height:3px;background:#000000;"></div>
<div style="left:182px;top:655px;width:1px;height:3px;background:#000000;"></div>
<div style="left:192px;top:655px;width:1px;height:3px;background:#000000;"></div>
<div style="left:203px;top:655px;width:1px;height:3px;background:#000000;"></div>
<div style="left:214px;top:655px;width:1px;height:3px;background:#000000;"></div>
<svg style="left:172px;top:639px" width="12" height="16" viewBox="0 0 12 16" ><path d="M0.5,1.5 L10.5,1.5 L10.5,9.5 L5.5,14.5 L0.5,9.5 Z" fill="#c0c0c0" stroke="none"/><path d="M0.5,9.5 L0.5,1.5 L10.5,1.5" stroke="#fff" fill="none"/><path d="M10.5,1.5 L10.5,9.5 L5.5,14.5" stroke="#000" fill="none"/><path d="M9.5,2.5 L9.5,9.2 L5.5,13.2" stroke="#808080" fill="none"/><path d="M0.5,9.5 L5.5,14.5" stroke="#fff" fill="none"/><rect x="3" y="3" width="1" height="1" fill="#404040"/><rect x="7" y="3" width="1" height="1" fill="#404040"/><rect x="5" y="5" width="1" height="1" fill="#404040"/><rect x="3" y="7" width="1" height="1" fill="#404040"/><rect x="7" y="7" width="1" height="1" fill="#404040"/><rect x="4" y="4" width="1" height="1" fill="#fff"/><rect x="8" y="4" width="1" height="1" fill="#fff"/><rect x="6" y="6" width="1" height="1" fill="#fff"/><rect x="4" y="8" width="1" height="1" fill="#fff"/><rect x="8" y="8" width="1" height="1" fill="#fff"/></svg>
<span style="left:15.00px;top:662.84px;font-size:12px;line-height:12px;color:#000;letter-spacing:-0.057px;">Axis</span>
<div style="left:45px;top:668px;width:108px;height:1px;background:#808080;"></div>
<div style="left:45px;top:669px;width:108px;height:1px;background:#ffffff;"></div>
<span style="left:15.00px;top:685.84px;font-size:12px;line-height:12px;color:#000;letter-spacing:-0.019px;">Color</span>
<div style="left:77px;top:679px;width:24px;height:18px;background:#c0c0c0;"></div>
<div style="left:78px;top:680px;width:22px;height:17px;background:#808080;"></div>
<div style="left:79px;top:681px;width:20px;height:15px;background:#000000;"></div>
<div style="left:106px;top:679px;width:1px;height:18px;background:#808080;"></div>
<div style="left:107px;top:679px;width:1px;height:18px;background:#ffffff;"></div>
<svg style="left:109px;top:686px" width="8" height="5" viewBox="0 0 8 5" ><path d="M1,1 L7,1 L4,4 Z" fill="#808080"/></svg>
<span style="left:14.80px;top:705.84px;font-size:12px;line-height:12px;color:#000;letter-spacing:0.257px;">StepMode</span>
<div style="left:79px;top:701px;width:80px;height:20px;background:#ffffff;"></div>
<div style="left:79px;top:701px;width:79px;height:1px;background:#808080;"></div>
<div style="left:79px;top:701px;width:1px;height:19px;background:#808080;"></div>
<div style="left:80px;top:702px;width:77px;height:1px;background:#000000;"></div>
<div style="left:80px;top:702px;width:1px;height:17px;background:#000000;"></div>
<div style="left:80px;top:719px;width:78px;height:1px;background:#c0c0c0;"></div>
<div style="left:157px;top:702px;width:1px;height:18px;background:#c0c0c0;"></div>
<div style="left:79px;top:720px;width:80px;height:1px;background:#ffffff;"></div>
<div style="left:158px;top:701px;width:1px;height:20px;background:#ffffff;"></div>
<span style="left:81.00px;top:704.84px;font-size:12px;line-height:12px;color:#000;letter-spacing:-0.027px;">Position</span>
<div style="left:142px;top:703px;width:15px;height:16px;background:#c0c0c0;"></div>
<div style="left:143px;top:704px;width:13px;height:1px;background:#ffffff;"></div>
<div style="left:143px;top:704px;width:1px;height:14px;background:#ffffff;"></div>
<div style="left:143px;top:717px;width:13px;height:1px;background:#808080;"></div>
<div style="left:155px;top:704px;width:1px;height:14px;background:#808080;"></div>
<div style="left:142px;top:718px;width:15px;height:1px;background:#000000;"></div>
<div style="left:156px;top:703px;width:1px;height:16px;background:#000000;"></div>
<svg style="left:142px;top:703px" width="15" height="16" viewBox="0 0 15 16" ><path d="M3.0,6.2 L6.8,10.4 L10.6,6.2 Z" fill="#000"/></svg>
<span style="left:14.80px;top:730.84px;font-size:12px;line-height:12px;color:#000;letter-spacing:0.274px;">SplitLevel</span>
<div style="left:79px;top:723px;width:29px;height:21px;background:#ffffff;"></div>
<div style="left:79px;top:723px;width:28px;height:1px;background:#808080;"></div>
<div style="left:79px;top:723px;width:1px;height:20px;background:#808080;"></div>
<div style="left:80px;top:724px;width:26px;height:1px;background:#000000;"></div>
<div style="left:80px;top:724px;width:1px;height:18px;background:#000000;"></div>
<div style="left:80px;top:742px;width:27px;height:1px;background:#c0c0c0;"></div>
<div style="left:106px;top:724px;width:1px;height:19px;background:#c0c0c0;"></div>
<div style="left:79px;top:743px;width:29px;height:1px;background:#ffffff;"></div>
<div style="left:107px;top:723px;width:1px;height:21px;background:#ffffff;"></div>
<span style="left:95.83px;top:727.84px;font-size:12px;line-height:12px;color:#000;">1</span>
<div style="left:109px;top:723px;width:13px;height:11px;background:#c0c0c0;"></div>
<div style="left:109px;top:723px;width:12px;height:1px;background:#ffffff;"></div>
<div style="left:109px;top:723px;width:1px;height:10px;background:#ffffff;"></div>
<div style="left:110px;top:732px;width:11px;height:1px;background:#808080;"></div>
<div style="left:120px;top:724px;width:1px;height:9px;background:#808080;"></div>
<div style="left:109px;top:733px;width:13px;height:1px;background:#000000;"></div>
<div style="left:121px;top:723px;width:1px;height:11px;background:#000000;"></div>
<svg style="left:109px;top:723px" width="13" height="11" viewBox="0 0 13 11" ><path d="M2.5,7.0 L6,3.0 L9.5,7.0 Z" fill="#000"/></svg>
<div style="left:109px;top:734px;width:13px;height:10px;background:#c0c0c0;"></div>
<div style="left:109px;top:734px;width:12px;height:1px;background:#ffffff;"></div>
<div style="left:109px;top:734px;width:1px;height:9px;background:#ffffff;"></div>
<div style="left:110px;top:742px;width:11px;height:1px;background:#808080;"></div>
<div style="left:120px;top:735px;width:1px;height:8px;background:#808080;"></div>
<div style="left:109px;top:743px;width:13px;height:1px;background:#000000;"></div>
<div style="left:121px;top:734px;width:1px;height:10px;background:#000000;"></div>
<svg style="left:109px;top:734px" width="13" height="10" viewBox="0 0 13 10" ><path d="M2.5,2.5 L6,6.5 L9.5,2.5 Z" fill="#000"/></svg>
<div style="left:324px;top:77px;width:703px;height:1px;background:#ffffff;"></div>
<div style="left:324px;top:77px;width:1px;height:691px;background:#ffffff;"></div>
<div style="left:325px;top:767px;width:702px;height:1px;background:#808080;"></div>
<div style="left:1026px;top:78px;width:1px;height:690px;background:#808080;"></div>
<div style="left:324px;top:768px;width:704px;height:1px;background:#000000;"></div>
<div style="left:1027px;top:77px;width:1px;height:692px;background:#000000;"></div>
<div style="left:326px;top:61px;width:1px;height:16px;background:#ffffff;"></div>
<div style="left:327px;top:60px;width:1px;height:1px;background:#ffffff;"></div>
<div style="left:328px;top:59px;width:63px;height:1px;background:#ffffff;"></div>
<div style="left:393px;top:77px;width:91px;height:1px;background:#c0c0c0;"></div>
<div style="left:392px;top:59px;width:1px;height:19px;background:#ffffff;"></div>
<div style="left:393px;top:58px;width:1px;height:1px;background:#ffffff;"></div>
<div style="left:394px;top:57px;width:89px;height:1px;background:#ffffff;"></div>
<div style="left:483px;top:58px;width:1px;height:20px;background:#808080;"></div>
<div style="left:484px;top:59px;width:1px;height:19px;background:#000000;"></div>
<span style="left:332.70px;top:62.84px;font-size:12px;line-height:12px;color:#000;letter-spacing:0.346px;">GLViewer</span>
<span style="left:397.50px;top:60.84px;font-size:12px;line-height:12px;color:#000;letter-spacing:0.284px;">NLT Projected</span>
<div style="left:326px;top:81px;width:699px;height:1px;background:#808080;"></div>
<div style="left:326px;top:81px;width:1px;height:685px;background:#808080;"></div>
<div style="left:327px;top:82px;width:697px;height:683px;background:#ffffff;"></div>
<div style="left:1025px;top:81px;width:1px;height:685px;background:#c0c0c0;"></div>
<div style="left:326px;top:765px;width:699px;height:1px;background:#ffffff;"></div>
<div style="left:326px;top:766px;width:700px;height:1px;background:#c0c0c0;"></div>
<svg style="left:327px;top:82px" width="697" height="683" viewBox="327 82 697 683"><path d="M926.0,420.0 L913.8,343.1 L878.4,273.6 L823.4,218.6 L753.9,183.2 L677.0,171.0 L600.1,183.2 L530.6,218.6 L475.6,273.6 L440.2,343.1 L428.0,420.0 L440.2,496.9 L475.6,566.4 L530.6,621.4 L600.1,656.8 L677.0,669.0 L753.9,656.8 L823.4,621.4 L878.4,566.4 L913.8,496.9 Z M834.0,420.0 L826.3,371.5 L804.0,327.7 L769.3,293.0 L725.5,270.7 L677.0,263.0 L628.5,270.7 L584.7,293.0 L550.0,327.7 L527.7,371.5 L520.0,420.0 L527.7,468.5 L550.0,512.3 L584.7,547.0 L628.5,569.3 L677.0,577.0 L725.5,569.3 L769.3,547.0 L804.0,512.3 L826.3,468.5 Z" fill="#a9a9a2" fill-rule="evenodd" /><path d="M837.0,420.0 L926.0,420.0 M829.2,370.6 L913.8,343.1 M806.4,326.0 L878.4,273.6 M771.0,290.6 L823.4,218.6 M726.4,267.8 L753.9,183.2 M677.0,260.0 L677.0,171.0 M627.6,267.8 L600.1,183.2 M583.0,290.6 L530.6,218.6 M547.6,326.0 L475.6,273.6 M524.8,370.6 L440.2,343.1 M517.0,420.0 L428.0,420.0 M524.8,469.4 L440.2,496.9 M547.6,514.0 L475.6,566.4 M583.0,549.4 L530.6,621.4 M627.6,572.2 L600.1,656.8 M677.0,580.0 L677.0,669.0 M726.4,572.2 L753.9,656.8 M771.0,549.4 L823.4,621.4 M806.4,514.0 L878.4,566.4 M829.2,469.4 L913.8,496.9 " stroke="#d6cab6" stroke-width="1" fill="none"/><path d="M927.9,420.0 L915.6,342.5 L880.0,272.5 L824.5,217.0 L754.5,181.4 L677.0,169.1 L599.5,181.4 L529.5,217.0 L474.0,272.5 L438.4,342.5 L426.1,420.0 L438.4,497.5 L474.0,567.5 L529.5,623.0 L599.5,658.6 L677.0,670.9 L754.5,658.6 L824.5,623.0 L880.0,567.5 L915.6,497.5 Z M926.0,420.0 L913.8,343.1 L878.4,273.6 L823.4,218.6 L753.9,183.2 L677.0,171.0 L600.1,183.2 L530.6,218.6 L475.6,273.6 L440.2,343.1 L428.0,420.0 L440.2,496.9 L475.6,566.4 L530.6,621.4 L600.1,656.8 L677.0,669.0 L753.9,656.8 L823.4,621.4 L878.4,566.4 L913.8,496.9 Z" fill="#a0efc4" fill-rule="evenodd" /><path d="M930.0,420.0 L917.6,341.8 L881.7,271.3 L825.7,215.3 L755.2,179.4 L677.0,167.0 L598.8,179.4 L528.3,215.3 L472.3,271.3 L436.4,341.8 L424.0,420.0 L436.4,498.2 L472.3,568.7 L528.3,624.7 L598.8,660.6 L677.0,673.0 L755.2,660.6 L825.7,624.7 L881.7,568.7 L917.6,498.2 Z M927.7,420.0 L915.4,342.5 L879.8,272.6 L824.4,217.2 L754.5,181.6 L677.0,169.3 L599.5,181.6 L529.6,217.2 L474.2,272.6 L438.6,342.5 L426.3,420.0 L438.6,497.5 L474.2,567.4 L529.6,622.8 L599.5,658.4 L677.0,670.7 L754.5,658.4 L824.4,622.8 L879.8,567.4 L915.4,497.5 Z" fill="#8cbcc4" fill-rule="evenodd" /><path d="M837.2,420.0 L829.4,370.5 L806.6,325.8 L771.2,290.4 L726.5,267.6 L677.0,259.8 L627.5,267.6 L582.8,290.4 L547.4,325.8 L524.6,370.5 L516.8,420.0 L524.6,469.5 L547.4,514.2 L582.8,549.6 L627.5,572.4 L677.0,580.2 L726.5,572.4 L771.2,549.6 L806.6,514.2 L829.4,469.5 Z M831.5,420.0 L823.9,372.3 L802.0,329.2 L767.8,295.0 L724.7,273.1 L677.0,265.5 L629.3,273.1 L586.2,295.0 L552.0,329.2 L530.1,372.3 L522.5,420.0 L530.1,467.7 L552.0,510.8 L586.2,545.0 L629.3,566.9 L677.0,574.5 L724.7,566.9 L767.8,545.0 L802.0,510.8 L823.9,467.7 Z" fill="#96efb8" fill-rule="evenodd" /><path d="M831.6,420.0 L824.0,372.2 L802.1,329.1 L767.9,294.9 L724.8,273.0 L677.0,265.4 L629.2,273.0 L586.1,294.9 L551.9,329.1 L530.0,372.2 L522.4,420.0 L530.0,467.8 L551.9,510.9 L586.1,545.1 L629.2,567.0 L677.0,574.6 L724.8,567.0 L767.9,545.1 L802.1,510.9 L824.0,467.8 Z M824.5,420.0 L817.3,374.4 L796.3,333.3 L763.7,300.7 L722.6,279.7 L677.0,272.5 L631.4,279.7 L590.3,300.7 L557.7,333.3 L536.7,374.4 L529.5,420.0 L536.7,465.6 L557.7,506.7 L590.3,539.3 L631.4,560.3 L677.0,567.5 L722.6,560.3 L763.7,539.3 L796.3,506.7 L817.3,465.6 Z" fill="#98c0c8" fill-rule="evenodd" /><polygon points="834.4,420.0 826.7,371.4 804.3,327.5 769.5,292.7 725.6,270.3 677.0,262.6 628.4,270.3 584.5,292.7 549.7,327.5 527.3,371.4 519.6,420.0 527.3,468.6 549.7,512.5 584.5,547.3 628.4,569.7 677.0,577.4 725.6,569.7 769.5,547.3 804.3,512.5 826.7,468.6" fill="none" stroke="#c4ffdc" stroke-width="0.8"/><path d="M824.5,420.0 L837.0,420.0 M817.3,374.4 L829.2,370.6 M796.3,333.3 L806.4,326.0 M763.7,300.7 L771.0,290.6 M722.6,279.7 L726.4,267.8 M677.0,272.5 L677.0,260.0 M631.4,279.7 L627.6,267.8 M590.3,300.7 L583.0,290.6 M557.7,333.3 L547.6,326.0 M536.7,374.4 L524.8,370.6 M529.5,420.0 L517.0,420.0 M536.7,465.6 L524.8,469.4 M557.7,506.7 L547.6,514.0 M590.3,539.3 L583.0,549.4 M631.4,560.3 L627.6,572.2 M677.0,567.5 L677.0,580.0 M722.6,560.3 L726.4,572.2 M763.7,539.3 L771.0,549.4 M796.3,506.7 L806.4,514.0 M817.3,465.6 L829.2,469.4 " stroke="#8cb4bc" stroke-width="1" fill="none"/><polygon points="935.0,420.0 919.4,331.8 874.6,254.2 806.0,196.6 721.8,165.9 632.2,165.9 548.0,196.6 479.4,254.2 434.6,331.8 419.0,420.0 434.6,508.2 479.4,585.8 548.0,643.4 632.2,674.1 721.8,674.1 806.0,643.4 874.6,585.8 919.4,508.2" fill="none" stroke="#8090c6" stroke-width="1.8"/><path d="M789.5,420.0 L784.0,385.2 L768.0,353.9 L743.1,329.0 L711.8,313.0 L677.0,307.5 L642.2,313.0 L610.9,329.0 L586.0,353.9 L570.0,385.2 L564.5,420.0 L570.0,454.8 L586.0,486.1 L610.9,511.0 L642.2,527.0 L677.0,532.5 L711.8,527.0 L743.1,511.0 L768.0,486.1 L784.0,454.8 Z M771.0,420.0 L766.4,391.0 L753.0,364.7 L732.3,344.0 L706.0,330.6 L677.0,326.0 L648.0,330.6 L621.7,344.0 L601.0,364.7 L587.6,391.0 L583.0,420.0 L587.6,449.0 L601.0,475.3 L621.7,496.0 L648.0,509.4 L677.0,514.0 L706.0,509.4 L732.3,496.0 L753.0,475.3 L766.4,449.0 Z" fill="#7a78bc" fill-rule="evenodd" /><path d="M771.0,420.0 L789.5,420.0 M766.4,391.0 L784.0,385.2 M753.0,364.7 L768.0,353.9 M732.3,344.0 L743.1,329.0 M706.0,330.6 L711.8,313.0 M677.0,326.0 L677.0,307.5 M648.0,330.6 L642.2,313.0 M621.7,344.0 L610.9,329.0 M601.0,364.7 L586.0,353.9 M587.6,391.0 L570.0,385.2 M583.0,420.0 L564.5,420.0 M587.6,449.0 L570.0,454.8 M601.0,475.3 L586.0,486.1 M621.7,496.0 L610.9,511.0 M648.0,509.4 L642.2,527.0 M677.0,514.0 L677.0,532.5 M706.0,509.4 L711.8,527.0 M732.3,496.0 L743.1,511.0 M753.0,475.3 L768.0,486.1 M766.4,449.0 L784.0,454.8 " stroke="#8a88c8" stroke-width="1" fill="none"/><path d="M753.0,420.0 L749.3,396.5 L738.5,375.3 L721.7,358.5 L700.5,347.7 L677.0,344.0 L653.5,347.7 L632.3,358.5 L615.5,375.3 L604.7,396.5 L601.0,420.0 L604.7,443.5 L615.5,464.7 L632.3,481.5 L653.5,492.3 L677.0,496.0 L700.5,492.3 L721.7,481.5 L738.5,464.7 L749.3,443.5 Z M719.5,420.0 L717.4,406.9 L711.4,395.0 L702.0,385.6 L690.1,379.6 L677.0,377.5 L663.9,379.6 L652.0,385.6 L642.6,395.0 L636.6,406.9 L634.5,420.0 L636.6,433.1 L642.6,445.0 L652.0,454.4 L663.9,460.4 L677.0,462.5 L690.1,460.4 L702.0,454.4 L711.4,445.0 L717.4,433.1 Z" fill="#9bd8a9" fill-rule="evenodd" /><path d="M719.5,420.0 L753.0,420.0 M719.0,413.4 L752.1,408.1 M717.4,406.9 L749.3,396.5 M714.9,400.7 L744.7,385.5 M711.4,395.0 L738.5,375.3 M707.1,389.9 L730.7,366.3 M702.0,385.6 L721.7,358.5 M696.3,382.1 L711.5,352.3 M690.1,379.6 L700.5,347.7 M683.6,378.0 L688.9,344.9 M677.0,377.5 L677.0,344.0 M670.4,378.0 L665.1,344.9 M663.9,379.6 L653.5,347.7 M657.7,382.1 L642.5,352.3 M652.0,385.6 L632.3,358.5 M646.9,389.9 L623.3,366.3 M642.6,395.0 L615.5,375.3 M639.1,400.7 L609.3,385.5 M636.6,406.9 L604.7,396.5 M635.0,413.4 L601.9,408.1 M634.5,420.0 L601.0,420.0 M635.0,426.6 L601.9,431.9 M636.6,433.1 L604.7,443.5 M639.1,439.3 L609.3,454.5 M642.6,445.0 L615.5,464.7 M646.9,450.1 L623.3,473.7 M652.0,454.4 L632.3,481.5 M657.7,457.9 L642.5,487.7 M663.9,460.4 L653.5,492.3 M670.4,462.0 L665.1,495.1 M677.0,462.5 L677.0,496.0 M683.6,462.0 L688.9,495.1 M690.1,460.4 L700.5,492.3 M696.3,457.9 L711.5,487.7 M702.0,454.4 L721.7,481.5 M707.1,450.1 L730.7,473.7 M711.4,445.0 L738.5,464.7 M714.9,439.3 L744.7,454.5 M717.4,433.1 L749.3,443.5 M719.0,426.6 L752.1,431.9 " stroke="#b8e8c4" stroke-width="1" fill="none"/><polygon points="737.0,420.0 736.3,410.6 734.1,401.5 730.5,392.8 725.5,384.7 719.4,377.6 712.3,371.5 704.2,366.5 695.5,362.9 686.4,360.7 677.0,360.0 667.6,360.7 658.5,362.9 649.8,366.5 641.7,371.5 634.6,377.6 628.5,384.7 623.5,392.8 619.9,401.5 617.7,410.6 617.0,420.0 617.7,429.4 619.9,438.5 623.5,447.2 628.5,455.3 634.6,462.4 641.7,468.5 649.8,473.5 658.5,477.1 667.6,479.3 677.0,480.0 686.4,479.3 695.5,477.1 704.2,473.5 712.3,468.5 719.4,462.4 725.5,455.3 730.5,447.2 734.1,438.5 736.3,429.4" fill="none" stroke="#b8e8c4" stroke-width="1"/><path d="M702.0,420.0 L700.8,412.3 L697.2,405.3 L691.7,399.8 L684.7,396.2 L677.0,395.0 L669.3,396.2 L662.3,399.8 L656.8,405.3 L653.2,412.3 L652.0,420.0 L653.2,427.7 L656.8,434.7 L662.3,440.2 L669.3,443.8 L677.0,445.0 L684.7,443.8 L691.7,440.2 L697.2,434.7 L700.8,427.7 Z M687.0,420.0 L686.5,416.9 L685.1,414.1 L682.9,411.9 L680.1,410.5 L677.0,410.0 L673.9,410.5 L671.1,411.9 L668.9,414.1 L667.5,416.9 L667.0,420.0 L667.5,423.1 L668.9,425.9 L671.1,428.1 L673.9,429.5 L677.0,430.0 L680.1,429.5 L682.9,428.1 L685.1,425.9 L686.5,423.1 Z" fill="#cc7488" fill-rule="evenodd" /><path d="M687.0,420.0 L702.0,420.0 M686.5,416.9 L700.8,412.3 M685.1,414.1 L697.2,405.3 M682.9,411.9 L691.7,399.8 M680.1,410.5 L684.7,396.2 M677.0,410.0 L677.0,395.0 M673.9,410.5 L669.3,396.2 M671.1,411.9 L662.3,399.8 M668.9,414.1 L656.8,405.3 M667.5,416.9 L653.2,412.3 M667.0,420.0 L652.0,420.0 M667.5,423.1 L653.2,427.7 M668.9,425.9 L656.8,434.7 M671.1,428.1 L662.3,440.2 M673.9,429.5 L669.3,443.8 M677.0,430.0 L677.0,445.0 M680.1,429.5 L684.7,443.8 M682.9,428.1 L691.7,440.2 M685.1,425.9 L697.2,434.7 M686.5,423.1 L700.8,427.7 " stroke="#dc94a4" stroke-width="1" fill="none"/><polygon points="817.8,175.9 829.5,171.4 895.4,226.8 894.9,235.5 892.6,238.2" fill="#5a66e6"/><polygon points="893.1,238.9 905.4,238.9 948.7,312.4 941.4,322.9" fill="#5a66e6"/><polygon points="941.4,324.5 954.0,327.1 968.4,409.0 958.7,419.5" fill="#5a66e6"/><path d="M961.9,413.5 L947.0,328.6" stroke="#7c88f4" stroke-width="1"/><path d="M964.4,413.1 L949.4,328.2" stroke="#7c88f4" stroke-width="1"/><path d="M966.8,412.7 L951.9,327.8" stroke="#7c88f4" stroke-width="1"/><path d="M942.5,316.5 L899.4,241.8" stroke="#7c88f4" stroke-width="1"/><path d="M944.7,315.2 L901.6,240.6" stroke="#7c88f4" stroke-width="1"/><path d="M946.8,314.0 L903.8,239.3" stroke="#7c88f4" stroke-width="1"/><path d="M891.1,231.9 L825.1,176.5" stroke="#7c88f4" stroke-width="1"/><path d="M892.7,230.0 L826.7,174.6" stroke="#7c88f4" stroke-width="1"/><path d="M894.3,228.1 L828.3,172.7" stroke="#7c88f4" stroke-width="1"/><polygon points="958.4,420.0 941.4,323.8 892.6,239.1 817.7,176.3 725.9,142.9 628.1,142.9 536.3,176.3 461.4,239.1 412.6,323.8 395.6,420.0 412.6,516.2 461.4,600.9 536.3,663.7 628.1,697.1 725.9,697.1 817.7,663.7 892.6,600.9 941.4,516.2" fill="none" stroke="#c8485a" stroke-width="3.8" stroke-linejoin="miter"/><polygon points="958.4,420.0 941.4,323.8 892.6,239.1 817.7,176.3 725.9,142.9 628.1,142.9 536.3,176.3 461.4,239.1 412.6,323.8 395.6,420.0 412.6,516.2 461.4,600.9 536.3,663.7 628.1,697.1 725.9,697.1 817.7,663.7 892.6,600.9 941.4,516.2" fill="none" stroke="#d06874" stroke-width="1" stroke-linejoin="miter"/><polygon points="457.9,603.8 534.0,667.7 530.0,674.6 451.8,609.0" fill="#ffc632" stroke="#ffc632" stroke-width="0.5"/><polygon points="534.0,667.7 627.3,701.7 625.9,709.5 530.0,674.6" fill="#ffc632" stroke="#ffc632" stroke-width="0.5"/><polygon points="627.3,701.7 726.7,701.7 728.1,709.5 625.9,709.5" fill="#ffc632" stroke="#ffc632" stroke-width="0.5"/><polygon points="726.7,701.7 820.0,667.7 824.0,674.6 728.1,709.5" fill="#ffc632" stroke="#ffc632" stroke-width="0.5"/><polygon points="820.0,667.7 896.1,603.8 902.2,609.0 824.0,674.6" fill="#ffc632" stroke="#ffc632" stroke-width="0.5"/><path d="M534.0,667.7 L530.0,674.6" stroke="#ffe08a" stroke-width="1"/><path d="M627.3,701.7 L625.9,709.5" stroke="#ffe08a" stroke-width="1"/><path d="M726.7,701.7 L728.1,709.5" stroke="#ffe08a" stroke-width="1"/><path d="M820.0,667.7 L824.0,674.6" stroke="#ffe08a" stroke-width="1"/><g shape-rendering="crispEdges"><rect x="388" y="140" width="2" height="589" fill="#000"/><rect x="377" y="716" width="598" height="2" fill="#000"/><rect x="377" y="140" width="12" height="2" fill="#000"/><rect x="377" y="280" width="12" height="2" fill="#000"/><rect x="377" y="419" width="12" height="2" fill="#000"/><rect x="377" y="568" width="12" height="2" fill="#000"/><rect x="532" y="717" width="2" height="12" fill="#000"/><rect x="676" y="717" width="2" height="12" fill="#000"/><rect x="824" y="717" width="2" height="12" fill="#000"/><rect x="973" y="717" width="2" height="12" fill="#000"/></g><path d="M704.7,416.1 L920.6,385.8 M701.9,407.3 L896.2,308.3 M694.2,397.9 L828.5,226.1 M684.2,393.0 L740.7,182.4 M673.1,392.3 L642.8,176.4 M663.9,395.3 L561.5,202.8 M655.6,402.0 L488.6,261.9 M650.7,410.4 L445.8,335.9 M649.3,416.1 L433.4,385.8 M650.0,427.2 L439.4,483.7 M653.8,435.7 L473.1,557.6 M661.3,443.2 L539.4,623.9 M669.8,447.0 L613.3,657.6 M680.4,447.8 L707.0,664.2 M691.0,444.2 L800.0,633.0 M699.1,437.2 L870.9,571.5 M703.9,427.7 L913.5,487.8 " stroke="#a45a5a" stroke-width="1" stroke-dasharray="2 5" fill="none"/><circle cx="677" cy="420" r="130" stroke="#a45a5a" stroke-width="1" stroke-dasharray="2 6" fill="none"/><circle cx="677" cy="420" r="212" stroke="#a45a5a" stroke-width="1" stroke-dasharray="1.5 5" fill="none"/><path d="M818.0,194.4 A266,266 0 0 0 536.0,194.4 M937.2,364.7 A266,266 0 0 0 868.3,235.2 M750.3,675.7 A266,266 0 0 0 935.1,484.4 M485.7,604.8 A266,266 0 0 0 594.8,673.0 M418.9,355.6 A266,266 0 0 0 427.0,511.0 " stroke="#a45a5a" stroke-width="1.2" stroke-dasharray="1.5 4" fill="none"/><path d="M614.0,395.2 l-2.3,-0.8 M644.7,417.6 l0.6,-1.6 M684.3,401.4 l-0.3,-3.4 M616.4,492.3 l-1.1,-1.0 M716.2,427.5 l2.3,0.3 M584.5,420.1 l-0.2,-3.5 M751.9,302.4 l1.6,0.6 M663.0,409.9 l-2.7,-1.5 M679.0,427.8 l0.6,1.9 M664.9,407.2 l1.0,-1.5 M555.6,479.6 l-2.3,-2.0 M650.3,436.6 l-0.8,-2.5 M655.6,429.4 l-1.8,-0.1 M576.7,345.7 l2.4,-2.5 M675.1,456.1 l-1.2,0.1 M657.4,416.4 l-3.4,-0.2 M612.9,387.6 l0.5,-3.2 M571.7,371.6 l2.6,-2.2 M582.9,501.4 l-0.6,1.5 M672.6,520.9 l-1.4,-0.2 M574.5,409.0 l-1.5,-0.8 M558.9,472.1 l-0.7,-1.3 M622.1,433.9 l-2.6,-0.4 M610.5,493.7 l-0.7,2.7 M810.9,438.0 l1.8,0.2 M801.6,483.7 l2.2,1.9 M704.1,322.8 l0.4,-3.2 M570.3,481.2 l-2.5,0.4 M626.2,391.0 l-3.5,-0.3 M563.8,369.0 l-2.7,-1.5 M658.3,416.5 l0.4,-2.7 M621.6,371.5 l0.8,-1.6 M604.4,354.9 l-2.0,-2.5 M626.2,426.3 l-3.1,-0.6 M630.4,455.8 l-2.5,1.9 M592.7,477.2 l-0.9,-1.2 M632.9,375.5 l-2.8,-2.0 M624.0,377.9 l-2.4,-0.5 M638.3,449.7 l-2.0,-2.4 M638.7,410.9 l-2.6,-0.5 M787.7,390.4 l1.2,-0.8 M667.7,421.6 l-0.9,-1.6 M577.8,407.2 l-2.8,-1.1 M785.9,486.5 l-1.5,1.5 M587.1,408.8 l-2.9,-1.6 M613.2,393.1 l-2.1,-1.8 M706.2,398.7 l2.9,-0.4 M719.5,393.0 l1.4,1.6 M686.2,339.9 l-0.4,-1.1 M578.3,363.7 l0.4,-2.3 M732.5,332.6 l2.9,-1.8 M680.5,439.0 l1.0,2.4 M719.7,355.9 l1.2,-2.9 M709.9,542.5 l-0.5,2.4 M643.3,412.3 l1.1,-3.2 M615.3,464.5 l-2.3,1.5 M665.6,407.8 l2.1,-0.7 M654.4,430.0 l-1.8,0.0 M652.4,397.5 l-1.0,-0.4 M681.8,453.3 l0.8,2.4 M655.2,419.6 l-0.5,-2.3 M611.4,416.5 l-0.7,-2.5 M586.3,402.9 l-1.5,-0.5 M716.3,321.8 l0.6,-3.2 M713.8,419.6 l1.0,2.6 M711.6,444.2 l1.1,0.7 M624.5,451.4 l-3.2,1.2 M653.8,419.2 l-1.5,-0.1 M659.8,418.4 l-1.4,-0.1 M686.2,451.0 l-0.2,1.2 M692.4,415.1 l2.2,-0.1 M608.2,452.3 l-1.9,2.5 M646.4,429.1 l-0.5,-1.3 M752.3,427.3 l2.9,1.2 M601.8,471.4 l-2.5,1.7 M712.7,397.7 l1.9,-0.6 M769.0,333.4 l1.8,-0.9 M573.8,425.8 l-2.2,1.3 M687.1,509.8 l-0.1,2.6 M625.3,354.9 l-1.5,-2.5 M813.0,439.6 l-0.7,1.9 M666.0,429.7 l-1.3,2.0 M750.4,404.6 l2.9,0.9 M662.2,409.6 l-1.4,-0.2 M711.2,481.4 l-3.1,1.3 M614.4,409.4 l0.1,-2.6 M659.9,500.2 l-1.6,-0.0 M684.6,431.4 l1.8,2.2 M691.6,419.0 l1.8,-1.0 M606.0,417.0 l-1.9,-1.0 M732.8,294.7 l0.1,-2.1 M710.0,431.2 l2.7,-0.1 M671.8,487.9 l0.0,2.3 M810.5,379.0 l1.7,2.7 M574.8,464.6 l-2.4,0.6 M594.6,460.0 l-3.2,-0.1 M663.9,421.8 l-0.0,-2.4 M692.0,429.1 l1.6,1.1 M612.6,389.6 l0.9,-0.9 M595.2,339.5 l-1.5,-0.8 M598.9,504.3 l-2.2,0.8 M573.4,444.8 l-1.0,0.7 M659.6,412.6 l1.6,-2.4 M681.1,437.6 l1.7,2.2 M580.6,445.2 l-1.3,0.0 M584.9,377.2 l-1.3,-1.6 M564.9,440.5 l-1.6,-0.4 M622.2,430.4 l-0.7,-2.3 M567.4,391.5 l0.9,-2.8 M552.8,416.5 l-3.4,-0.2 M583.4,412.1 l0.4,-1.1 M574.8,394.8 l-2.6,0.3 M684.5,459.7 l0.3,2.0 M728.5,409.6 l2.7,-0.6 M592.5,363.8 l-2.2,-2.1 M767.3,344.0 l2.4,-1.5 M585.4,487.7 l-1.8,0.7 M649.0,431.0 l0.2,-1.8 M663.2,401.4 l1.2,-1.8 M612.2,475.1 l-1.4,-0.8 M590.4,475.1 l-2.0,-2.0 M630.1,405.3 l0.9,-3.1 M606.6,527.7 l-1.3,0.8 M690.8,415.3 l2.1,-1.0 M721.2,417.3 l0.7,2.1 M693.5,365.4 l1.3,0.5 M674.0,470.4 l-0.3,3.5 M638.8,399.8 l-3.1,0.0 M569.2,375.7 l-2.2,0.0 M562.3,350.5 l-1.9,-0.7 M785.5,489.8 l2.2,0.6 M649.9,429.6 l-1.6,1.5 M611.9,499.0 l-0.6,2.1 M742.1,301.0 l0.0,-2.8 M640.8,404.6 l-3.0,0.3 M642.6,427.8 l-0.3,-1.8 M625.7,450.7 l-3.2,1.0 M608.5,374.3 l0.2,-1.2 M581.0,437.1 l-1.2,-0.2 M639.6,426.3 l-1.7,1.2 M631.6,359.7 l-0.6,-1.7 M618.6,398.0 l-1.8,-2.0 M592.2,444.7 l-0.3,-1.9 M695.0,347.0 l2.7,1.0 M549.8,419.9 l-3.2,1.2 M660.6,345.7 l-1.3,-2.2 M643.2,415.3 l-3.1,-1.1 M640.4,378.1 l-2.1,-1.1 M616.3,364.9 l-0.8,-2.4 M658.7,404.1 l-2.8,-1.4 M655.4,444.2 l-1.3,3.1 M643.4,508.7 l-1.4,2.0 M563.1,426.6 l-2.2,1.0 M646.3,416.2 l-1.1,0.0 M736.3,496.2 l1.1,1.7 M643.4,336.1 l-0.5,-3.5 M559.2,434.1 l-2.3,0.1 M606.6,451.9 l-1.6,-2.3 M662.7,294.0 l0.3,-2.5 M659.8,419.9 l-0.3,-2.7 M600.9,434.5 l-1.4,-2.9 M608.5,303.0 l-0.9,-1.3 M579.7,376.6 l-1.3,-0.0 M606.3,455.1 l-0.9,0.7 M555.0,452.2 l-0.2,-1.1 M632.0,538.3 l-1.6,1.5 M667.1,453.8 l-2.4,-2.0 M634.5,385.4 l2.4,-1.0 M651.7,441.7 l-2.9,1.5 M561.8,377.6 l-0.8,-0.9 M663.8,455.1 l-1.6,-0.1 M585.3,392.5 l-1.2,-1.0 M719.8,398.8 l0.9,-0.8 M548.8,470.4 l-0.8,-2.4 M676.7,465.6 l-2.7,1.1 M669.6,459.8 l0.5,3.4 M664.9,423.0 l-2.1,0.8 M647.2,409.1 l-2.9,-0.6 M600.8,417.3 l-3.3,-0.7 M646.6,414.0 l-2.9,0.2 M565.2,422.2 l-2.1,0.7 M666.6,412.8 l-1.1,-0.9 M704.9,423.1 l1.7,0.1 M778.8,469.9 l2.6,1.5 M650.2,448.9 l-1.2,2.0 M641.0,396.6 l0.3,-1.4 M725.3,333.4 l0.1,-1.9 M640.4,420.7 l-1.3,-0.3 M616.2,450.7 l-0.2,-2.0 M645.3,455.2 l-2.7,1.0 M676.2,458.3 l0.8,3.2 M647.9,467.9 l-1.6,-1.2 M588.9,387.8 l-2.4,-2.1 M623.0,463.0 l-1.1,1.1 M698.8,469.2 l-1.1,1.1 M633.0,365.9 l-0.7,-1.3 M729.5,445.9 l-0.3,1.0 M653.8,397.9 l1.6,-1.1 M651.9,407.0 l-0.8,-0.7 M638.0,387.9 l-2.0,-1.1 M666.7,431.2 l-0.4,1.0 M633.3,442.6 l-1.1,1.2 M587.5,472.6 l-1.5,1.4 M622.1,441.6 l-0.6,-1.0 M669.3,411.8 l-0.7,-1.6 M586.0,387.8 l-2.8,-1.5 M638.4,425.1 l-0.5,-1.9 M635.1,449.6 l-1.1,0.9 M585.0,446.9 l-0.9,-2.3 M582.0,387.0 l-1.9,0.3 M660.7,420.1 l-1.8,-0.1 M645.4,393.1 l1.9,-1.9 M645.1,426.3 l-2.4,-0.6 M694.8,288.8 l0.5,-2.0 M698.3,381.0 l0.4,-1.0 M651.9,426.4 l0.3,-1.4 M653.2,449.9 l-1.0,1.2 M634.1,360.8 l-1.5,-2.7 M572.7,332.9 l-2.4,-1.3 M773.1,397.8 l1.9,-1.2 M602.7,384.3 l0.8,-1.4 M699.3,465.7 l-0.8,0.9 M655.6,421.9 l-1.4,-0.3 M566.5,472.4 l-1.8,0.8 M675.8,522.5 l0.5,2.9 M733.5,315.0 l1.0,-2.3 M562.2,445.9 l-0.1,-1.5 M668.6,415.0 l2.3,-1.5 M632.0,375.4 l2.7,-0.8 M655.4,410.4 l1.4,-1.1 M665.9,417.0 l-3.0,-0.4 M561.0,395.0 l-1.8,-0.9 M581.5,391.6 l-0.1,-1.3 M675.9,551.2 l0.4,1.0 M728.2,484.9 l-1.4,1.7 M637.1,459.8 l-1.1,0.5 M645.1,423.3 l-2.0,0.9 M633.1,464.8 l-1.9,1.7 M718.3,403.3 l3.1,0.3 M591.2,478.2 l-1.6,-1.1 M637.4,519.9 l-3.4,0.4 M667.7,418.4 l-1.8,-0.9 M730.4,319.3 l1.9,2.8 M631.8,378.9 l-1.5,-0.4 M636.6,463.4 l-2.3,1.3 M667.0,473.8 l-1.8,-0.0 M702.5,522.8 l0.3,1.4 M655.2,422.7 l-1.6,1.2 M627.9,408.3 l-1.8,0.1 M760.6,487.7 l1.3,0.9 M620.2,444.6 l-1.8,0.4 M656.9,445.2 l-0.6,1.8 M698.8,510.4 l-0.4,2.5 M615.7,377.4 l-1.9,-1.9 M614.7,408.6 l-1.0,-0.3 M591.2,449.8 l-1.3,0.3 M746.8,416.9 l3.4,-0.8 M638.2,372.8 l2.4,-2.0 M763.6,384.2 l3.5,-0.3 M688.3,407.9 l1.0,-1.9 " stroke="#a45a5a" stroke-width="1.1" fill="none"/><path d="M730,681 L766,669 L791,657.5 L830,625 L860,592" stroke="#c4b25c" stroke-width="1.3" stroke-dasharray="1.5 3.5" fill="none"/><path d="M773.6,659.2 A258,258 0 0 0 900.4,549.0 M797.1,666.3 A274,274 0 0 0 918.9,548.6 M439.5,530.7 A262,262 0 0 0 546.0,646.9 " stroke="#a45a5a" stroke-width="1.1" stroke-dasharray="1.5 3.5" fill="none"/><path d="M700,417 L745,418 L800,419" stroke="#c8c088" stroke-width="1.5" stroke-dasharray="3 3" fill="none"/><rect x="617" y="466" width="2" height="2" fill="#ffee22"/><rect x="582" y="398" width="2" height="2" fill="#ffee22"/><rect x="737" y="382" width="2" height="2" fill="#ffee22"/><rect x="588" y="459" width="2" height="2" fill="#ffee22"/><rect x="582" y="389" width="2" height="2" fill="#ffee22"/><rect x="753" y="495" width="2" height="2" fill="#ffee22"/><rect x="586" y="368" width="2" height="2" fill="#ffee22"/><rect x="594" y="483" width="2" height="2" fill="#ffee22"/><rect x="738" y="344" width="2" height="2" fill="#ffee22"/><rect x="622" y="406" width="2" height="2" fill="#ffee22"/><rect x="682" y="409" width="2" height="2" fill="#ffee22"/><rect x="588" y="378" width="2" height="2" fill="#ffee22"/><rect x="580" y="390" width="2" height="2" fill="#ffee22"/><rect x="601" y="349" width="2" height="2" fill="#ffee22"/><rect x="659" y="429" width="2" height="2" fill="#ffee22"/><rect x="739" y="388" width="2" height="2" fill="#ffee22"/><rect x="696" y="355" width="2" height="2" fill="#ffee22"/><rect x="647" y="513" width="2" height="2" fill="#ffee22"/><rect x="674" y="398" width="2" height="2" fill="#ffee22"/><rect x="730" y="446" width="2" height="2" fill="#ffee22"/><rect x="678" y="399" width="2" height="2" fill="#ffee22"/><rect x="582" y="471" width="2" height="2" fill="#ffee22"/><rect x="582" y="373" width="2" height="2" fill="#ffee22"/><rect x="637" y="475" width="2" height="2" fill="#ffee22"/><rect x="659" y="425" width="2" height="2" fill="#ffee22"/><rect x="570" y="438" width="2" height="2" fill="#ffee22"/><rect x="648" y="327" width="2" height="2" fill="#ffee22"/><rect x="686" y="402" width="2" height="2" fill="#ffee22"/><rect x="723" y="381" width="2" height="2" fill="#ffee22"/><rect x="615" y="435" width="2" height="2" fill="#ffee22"/><rect x="573" y="424" width="2" height="2" fill="#ffee22"/><rect x="750" y="497" width="2" height="2" fill="#ffee22"/><rect x="765" y="369" width="2" height="2" fill="#ffee22"/><rect x="665" y="424" width="2" height="2" fill="#ffee22"/><rect x="690" y="435" width="2" height="2" fill="#ffee22"/><rect x="668" y="469" width="2" height="2" fill="#ffee22"/><rect x="656" y="374" width="2" height="2" fill="#ffee22"/><rect x="706" y="461" width="2" height="2" fill="#ffee22"/><rect x="623" y="337" width="2" height="2" fill="#ffee22"/><rect x="590" y="365" width="2" height="2" fill="#ffee22"/><rect x="711" y="464" width="2" height="2" fill="#ffee22"/><rect x="658" y="412" width="2" height="2" fill="#ffee22"/><rect x="572" y="410" width="2" height="2" fill="#ffee22"/><rect x="676" y="404" width="2" height="2" fill="#ffee22"/><rect x="681" y="398" width="2" height="2" fill="#ffee22"/><rect x="660" y="432" width="2" height="2" fill="#ffee22"/><rect x="594" y="480" width="2" height="2" fill="#ffee22"/><rect x="702" y="515" width="2" height="2" fill="#ffee22"/><rect x="598" y="362" width="2" height="2" fill="#ffee22"/><rect x="733" y="499" width="2" height="2" fill="#ffee22"/><rect x="595" y="349" width="2" height="2" fill="#ffee22"/><rect x="596" y="349" width="2" height="2" fill="#ffee22"/><rect x="778" y="391" width="2" height="2" fill="#ffee22"/><rect x="686" y="429" width="2" height="2" fill="#ffee22"/><rect x="654" y="425" width="2" height="2" fill="#ffee22"/><rect x="687" y="432" width="2" height="2" fill="#ffee22"/><rect x="605" y="430" width="2" height="2" fill="#ffee22"/><rect x="706" y="519" width="2" height="2" fill="#ffee22"/><rect x="670" y="401" width="2" height="2" fill="#ffee22"/><rect x="645" y="521" width="2" height="2" fill="#ffee22"/><rect x="670" y="525" width="2" height="2" fill="#ffee22"/><rect x="631" y="479" width="2" height="2" fill="#ffee22"/><rect x="696" y="318" width="2" height="2" fill="#ffee22"/><rect x="623" y="373" width="2" height="2" fill="#ffee22"/><rect x="721" y="323" width="2" height="2" fill="#ffee22"/><rect x="578" y="425" width="2" height="2" fill="#ffee22"/><rect x="704" y="315" width="2" height="2" fill="#ffee22"/><rect x="672" y="406" width="2" height="2" fill="#ffee22"/><rect x="741" y="393" width="2" height="2" fill="#ffee22"/><rect x="627" y="477" width="2" height="2" fill="#ffee22"/><rect x="581" y="438" width="2" height="2" fill="#ffee22"/><rect x="630" y="373" width="2" height="2" fill="#ffee22"/><rect x="659" y="422" width="2" height="2" fill="#ffee22"/><rect x="740" y="457" width="2" height="2" fill="#ffee22"/><rect x="699" y="314" width="2" height="2" fill="#ffee22"/><rect x="722" y="513" width="2" height="2" fill="#ffee22"/><rect x="738" y="398" width="2" height="2" fill="#ffee22"/><rect x="675" y="375" width="2" height="2" fill="#ffee22"/><rect x="728" y="513" width="2" height="2" fill="#ffee22"/><rect x="595" y="367" width="2" height="2" fill="#ffee22"/><rect x="690" y="437" width="2" height="2" fill="#ffee22"/><rect x="666" y="403" width="2" height="2" fill="#ffee22"/><rect x="614" y="400" width="2" height="2" fill="#ffee22"/><rect x="773" y="402" width="2" height="2" fill="#ffee22"/><rect x="771" y="378" width="2" height="2" fill="#ffee22"/><rect x="694" y="468" width="2" height="2" fill="#ffee22"/><rect x="700" y="515" width="2" height="2" fill="#ffee22"/><rect x="661" y="410" width="2" height="2" fill="#ffee22"/><rect x="707" y="369" width="2" height="2" fill="#ffee22"/><rect x="612" y="506" width="2" height="2" fill="#ffee22"/><rect x="685" y="402" width="2" height="2" fill="#ffee22"/><rect x="695" y="410" width="2" height="2" fill="#ffee22"/><rect x="687" y="434" width="2" height="2" fill="#ffee22"/><rect x="662" y="426" width="2" height="2" fill="#ffee22"/><rect x="694" y="317" width="2" height="2" fill="#ffee22"/><rect x="579" y="436" width="2" height="2" fill="#ffee22"/><rect x="629" y="512" width="2" height="2" fill="#ffee22"/><rect x="655" y="422" width="2" height="2" fill="#ffee22"/><rect x="778" y="458" width="2" height="2" fill="#ffee22"/><rect x="691" y="321" width="2" height="2" fill="#ffee22"/><rect x="698" y="424" width="2" height="2" fill="#ffee22"/><rect x="599" y="354" width="2" height="2" fill="#ffee22"/><rect x="684" y="442" width="2" height="2" fill="#ffee22"/><rect x="621" y="408" width="2" height="2" fill="#ffee22"/><rect x="677" y="438" width="2" height="2" fill="#ffee22"/><rect x="702" y="411" width="2" height="2" fill="#ffee22"/><rect x="726" y="381" width="2" height="2" fill="#ffee22"/><rect x="747" y="501" width="2" height="2" fill="#ffee22"/><rect x="636" y="513" width="2" height="2" fill="#ffee22"/><rect x="701" y="519" width="2" height="2" fill="#ffee22"/><path d="M584.6,165.1 C583.4,166.8 579.8,170.9 577.6,175.1 C575.4,179.3 573.0,183.5 571.3,190.2 C569.6,196.9 567.8,206.9 567.6,215.3 C567.4,223.7 568.4,232.0 570.1,240.4 C571.8,248.8 575.2,258.9 577.6,265.5 C580.0,272.1 583.1,276.3 584.8,280.0 C586.5,283.7 584.3,282.8 587.6,287.5 C590.9,292.2 598.5,299.0 604.5,308.1 C610.5,317.2 615.8,329.1 623.3,341.9 C630.8,354.7 640.6,372.0 649.6,385.0 C658.6,398.0 672.4,414.2 677.0,420.0" stroke="#00ff00" stroke-width="1.8" fill="none"/><path d="M677.0,162.6 C673.4,164.3 661.9,168.4 655.4,172.6 C648.9,176.8 643.2,181.8 637.8,187.7 C632.4,193.6 627.0,201.1 622.8,207.8 C618.6,214.5 615.2,220.3 612.7,227.8 C610.2,235.3 609.0,244.1 607.7,252.9 C606.5,261.7 605.3,272.9 605.2,280.5 C605.1,288.1 605.2,292.0 607.3,298.8 C609.4,305.6 613.5,312.9 617.7,321.3 C621.9,329.7 626.5,338.8 632.7,349.4 C639.0,360.0 647.8,373.2 655.2,385.0 C662.6,396.8 673.4,414.2 677.0,420.0" stroke="#00ff00" stroke-width="1.8" fill="none"/><path d="M677.0,199.0 C673.8,200.5 664.4,203.8 657.9,207.8 C651.4,211.8 643.6,217.4 637.8,222.8 C631.9,228.2 627.0,234.1 622.8,240.4 C618.6,246.7 614.9,253.8 612.7,260.5 C610.5,267.2 609.3,274.1 609.5,280.5 C609.7,286.9 611.6,291.4 613.9,298.8 C616.2,306.2 619.2,315.6 623.3,325.0 C627.4,334.4 632.7,345.0 638.3,355.0 C643.9,365.0 650.5,374.2 657.0,385.0 C663.5,395.8 673.7,414.2 677.0,420.0" stroke="#00ff00" stroke-width="1.8" fill="none"/><path d="M493.5,220.3 C491.7,222.4 485.8,227.8 482.2,232.8 C478.7,237.9 475.3,243.7 472.2,250.4 C469.1,257.1 465.9,265.5 463.4,273.0 C460.9,280.5 458.7,288.5 457.2,295.6 C455.6,302.7 454.6,308.3 454.1,315.7 C453.7,323.1 454.6,335.9 454.6,340.0" stroke="#00ff00" stroke-width="1.8" fill="none"/><path d="M475.2,237.4 C475.3,239.5 475.0,244.9 476.0,250.4 C476.9,255.9 479.1,264.2 481.0,270.5 C482.9,276.8 485.4,283.9 487.3,288.1 C489.1,292.2 491.4,294.3 492.3,295.6" stroke="#00ff00" stroke-width="1.8" fill="none"/><path d="M677.0,162.6 C679.5,161.5 687.0,157.9 692.1,156.3 C697.1,154.7 702.3,153.8 707.1,153.0 C711.9,152.3 718.6,152.2 720.9,152.0" stroke="#00ff00" stroke-width="1.8" fill="none"/><path d="M677.0,199.0 C679.5,197.9 685.8,194.2 692.1,192.7 C698.3,191.2 706.7,190.4 714.6,190.2 C722.6,190.0 731.4,190.0 739.7,191.4 C748.1,192.9 756.5,196.0 764.8,199.0 C773.2,201.9 781.6,205.5 789.9,209.0 C798.3,212.6 807.9,216.7 815.0,220.3 C822.1,223.9 828.0,227.6 832.6,230.3 C837.2,233.1 840.9,235.6 842.6,236.6" stroke="#00ff00" stroke-width="1.8" fill="none"/><path d="M812.5,185.2 C814.6,187.7 821.3,194.8 825.1,200.2 C828.8,205.7 832.2,211.7 835.1,217.8 C838.0,223.9 840.7,230.8 842.6,236.6 C844.5,242.5 845.6,247.3 846.4,252.9 C847.1,258.6 847.3,264.6 847.1,270.5 C846.9,276.3 846.3,282.6 845.1,288.1 C844.0,293.5 842.2,298.1 840.1,303.1 C838.0,308.1 835.5,313.6 832.6,318.2 C829.7,322.8 825.7,327.1 822.5,330.7 C819.4,334.4 815.2,338.5 813.8,340.0" stroke="#00ff00" stroke-width="1.8" fill="none"/><path d="M853.9,214.0 C854.7,216.3 857.6,222.6 858.9,227.8 C860.3,233.1 861.8,239.5 862.2,245.4 C862.6,251.3 862.2,257.9 861.4,263.0 C860.7,268.0 858.3,273.4 857.7,275.5" stroke="#00ff00" stroke-width="1.8" fill="none"/><path d="M890.3,252.9 C891.6,255.9 895.7,264.6 897.8,270.5 C899.9,276.3 901.5,282.2 902.8,288.1 C904.2,293.9 905.2,299.3 905.9,305.6 C906.5,311.9 906.7,320.0 906.6,325.7 C906.5,331.4 905.6,337.6 905.4,340.0" stroke="#00ff00" stroke-width="1.8" fill="none"/><path d="M677.0,419.9 C673.4,417.0 663.2,408.4 655.4,402.8 C647.6,397.2 638.7,391.7 630.3,386.5 C621.9,381.3 613.6,376.3 605.2,371.4 C596.8,366.6 588.5,361.6 580.1,357.6 C571.7,353.7 562.1,350.5 555.0,347.6 C547.9,344.7 540.4,341.3 537.5,340.1" stroke="#00ff00" stroke-width="1.8" fill="none"/><path d="M677.0,419.9 C673.4,417.7 663.2,410.5 655.4,406.6 C647.6,402.7 638.7,398.9 630.3,396.5 C621.9,394.2 613.6,393.1 605.2,392.3 C596.8,391.4 588.5,391.4 580.1,391.5 C571.7,391.7 562.5,392.2 555.0,393.3 C547.5,394.3 540.8,396.0 534.9,397.8 C529.1,399.6 524.9,401.6 519.9,404.1 C514.9,406.6 509.8,409.3 504.8,412.8 C499.8,416.4 494.2,420.8 489.8,425.4 C485.4,430.0 481.6,435.0 478.5,440.5 C475.3,445.9 472.2,455.1 471.0,458.0" stroke="#00ff00" stroke-width="1.8" fill="none"/><path d="M677.0,420.4 C671.3,421.2 652.7,424.1 642.8,425.4 C633.0,426.6 626.1,427.4 617.8,427.9 C609.4,428.4 601.0,428.5 592.7,428.4 C584.3,428.3 575.9,428.1 567.6,427.4 C559.2,426.7 549.2,425.5 542.5,424.1 C535.8,422.8 531.6,420.9 527.4,419.1 C523.2,417.3 519.0,414.3 517.4,413.4" stroke="#00ff00" stroke-width="1.8" fill="none"/><path d="M677.0,420.4 C673.8,422.9 664.4,430.4 657.9,435.4 C651.4,440.5 644.5,445.7 637.8,450.5 C631.1,455.3 625.3,459.7 617.8,464.3 C610.2,468.9 601.0,473.9 592.7,478.1 C584.3,482.3 575.9,486.2 567.6,489.4 C559.2,492.5 550.8,494.9 542.5,496.9 C534.1,498.9 525.7,500.5 517.4,501.2 C509.0,501.9 500.6,501.9 492.3,501.2 C483.9,500.5 474.7,499.1 467.2,496.9 C459.7,494.7 453.4,492.1 447.1,488.1 C440.8,484.2 434.6,478.1 429.5,473.1 C424.5,468.1 419.1,460.5 417.0,458.0" stroke="#00ff00" stroke-width="1.8" fill="none"/><path d="M454.1,320.0 C454.4,322.5 455.0,330.0 455.9,335.1 C456.8,340.1 458.2,345.1 459.7,350.1 C461.1,355.1 462.8,360.6 464.7,365.2 C466.6,369.8 468.4,373.1 471.0,377.7 C473.5,382.3 478.3,390.3 479.7,392.8" stroke="#00ff00" stroke-width="1.8" fill="none"/><path d="M677.0,419.9 C681.2,417.9 693.7,411.9 702.1,407.8 C710.5,403.7 718.8,399.7 727.2,395.3 C735.6,390.9 743.9,386.5 752.3,381.5 C760.6,376.5 769.8,370.4 777.4,365.2 C784.9,359.9 791.6,354.5 797.5,350.1 C803.3,345.7 809.2,341.3 812.5,338.8 C815.9,336.3 816.7,335.7 817.5,335.1" stroke="#00ff00" stroke-width="1.8" fill="none"/><path d="M677.0,419.4 C681.2,417.3 693.7,411.2 702.1,407.1 C710.5,402.9 718.8,398.9 727.2,394.5 C735.6,390.2 748.1,383.2 752.3,381.0" stroke="#00ff00" stroke-width="1.8" fill="none"/><path d="M677.0,419.9 C683.3,420.2 702.1,420.9 714.6,421.6 C727.2,422.3 741.0,423.3 752.3,424.1 C763.6,425.0 774.0,426.4 782.4,426.6 C790.8,426.9 795.8,426.4 802.5,425.4 C809.2,424.3 816.3,422.5 822.5,420.4 C828.8,418.3 834.3,415.8 840.1,412.8 C846.0,409.9 851.4,407.0 857.7,402.8 C864.0,398.6 871.9,393.2 877.8,387.8 C883.6,382.3 888.6,376.5 892.8,370.2 C897.0,363.9 900.4,356.8 902.8,350.1 C905.3,343.4 906.7,335.1 907.4,330.0 C908.0,325.0 906.7,321.7 906.6,320.0" stroke="#00ff00" stroke-width="1.8" fill="none"/><path d="M677.0,420.4 C683.3,421.0 702.1,422.9 714.6,424.1 C727.1,425.3 741.0,427.0 752.3,427.4 C763.6,427.8 773.2,426.3 782.4,426.6 C791.6,426.9 799.1,427.9 807.5,429.2 C815.9,430.5 825.8,432.5 832.8,434.3 C839.8,436.1 843.9,438.0 849.5,440.2 C855.1,442.4 860.6,444.8 866.2,447.7 C871.8,450.6 877.9,454.4 882.9,457.7 C887.9,461.0 892.1,463.8 896.3,467.7 C900.5,471.6 904.6,476.6 907.9,481.1 C911.2,485.6 914.1,489.8 916.3,494.5 C918.5,499.2 920.0,504.8 921.3,509.5 C922.5,514.2 923.3,519.0 923.8,522.9 C924.3,526.8 924.0,531.2 924.1,532.9" stroke="#00ff00" stroke-width="1.8" fill="none"/><path d="M677.0,419.9 C678.7,422.0 683.7,427.4 687.0,432.9 C690.4,438.4 694.4,446.3 697.1,453.0 C699.8,459.7 701.7,466.0 703.3,473.1 C705.0,480.2 706.2,487.8 707.1,495.7 C708.1,503.5 708.8,515.9 709.1,520.0" stroke="#00ff00" stroke-width="1.8" fill="none"/><path d="M677.0,420.4 C685.4,420.5 709.6,420.7 727.2,421.1 C744.8,421.5 773.2,422.6 782.4,422.9" stroke="#00ff00" stroke-width="1.8" fill="none"/><path d="M467.2,525.1 C469.3,529.3 474.7,541.0 479.7,550.2 C484.8,559.4 491.0,571.1 497.3,580.3 C503.6,589.5 510.7,597.9 517.4,605.4 C524.1,612.9 531.6,620.0 537.5,625.5 C543.3,630.9 548.3,635.1 552.5,638.0 C556.7,640.9 560.9,642.2 562.5,643.0" stroke="#00ff00" stroke-width="1.8" fill="none"/><path d="M499.8,592.8 C503.6,594.5 514.4,599.7 522.4,602.9 C530.3,606.0 539.1,609.2 547.5,611.7 C555.9,614.2 564.2,616.5 572.6,617.9 C580.9,619.4 589.3,620.2 597.7,620.5 C606.0,620.7 615.2,620.2 622.8,619.2 C630.3,618.2 636.2,616.5 642.8,614.2 C649.5,611.9 657.2,608.3 662.9,605.4 C668.6,602.5 674.6,598.1 677.0,596.6" stroke="#00ff00" stroke-width="1.8" fill="none"/><path d="M707.1,500.0 C707.4,503.3 709.1,513.4 709.1,520.1 C709.1,526.8 708.3,533.5 707.1,540.2 C705.9,546.8 704.6,553.5 702.1,560.2 C699.6,566.9 696.2,574.2 692.1,580.3 C687.9,586.4 679.5,593.9 677.0,596.6" stroke="#00ff00" stroke-width="1.8" fill="none"/><g shape-rendering="crispEdges"><path d="M498.5,266.9 C501.0,265.3 508.5,260.5 513.5,257.7 C518.5,254.9 523.5,252.3 528.5,250.2 C533.6,248.1 538.6,246.6 543.6,245.2 C548.6,243.8 554.1,242.6 558.6,241.8 C563.1,241.1 568.3,240.9 570.3,240.7" stroke="#0000ff" stroke-width="2.4" fill="none" stroke-dasharray="5 3"/><path d="M577.0,241.0 C578.4,241.1 582.6,241.4 585.3,241.8 C588.0,242.2 591.7,243.2 593.0,243.5" stroke="#0000ff" stroke-width="2.4" fill="none" stroke-dasharray="4 2.5"/><path d="M470.1,292.9 C471.8,291.4 476.8,286.5 480.1,283.6 C483.5,280.6 487.6,277.3 490.1,275.2 C492.6,273.1 494.3,271.7 495.1,271.0" stroke="#0000ff" stroke-width="2.4" fill="none" stroke-dasharray="4 2.5"/><path d="M506.8,292.9 C507.9,290.3 511.0,282.3 513.5,276.9 C516.0,271.4 519.1,264.6 521.9,260.2 C524.6,255.7 527.2,253.8 530.2,250.2 C533.3,246.6 536.9,242.1 540.2,238.5 C543.6,234.9 547.2,231.2 550.3,228.5 C553.3,225.7 557.2,222.9 558.6,221.8" stroke="#0000ff" stroke-width="2.4" fill="none" stroke-dasharray="4 4"/><path d="M563.6,217.6 C565.6,216.4 571.4,212.3 575.3,210.1 C579.2,207.9 584.0,205.6 587.0,204.3 C589.9,202.9 592.0,202.2 593.0,201.7" stroke="#0000ff" stroke-width="2.4" fill="none" stroke-dasharray="4 2.5"/><path d="M575.3,192.6 C576.7,192.1 580.7,190.8 583.6,190.1 C586.6,189.4 591.4,188.7 593.0,188.4" stroke="#0000ff" stroke-width="3" fill="none"/><path d="M580.3,195.1 L587.0,192.6" stroke="#0000ff" stroke-width="2.4" fill="none"/><path d="M518.5,285.2 C520.2,283.6 524.6,278.0 528.5,275.2 C532.4,272.4 537.7,269.9 541.9,268.5 C546.1,267.2 550.5,266.5 553.6,266.9 C556.7,267.3 559.2,268.8 560.3,271.0 C561.4,273.3 560.8,276.6 560.3,280.2 C559.7,283.9 557.5,290.8 556.9,292.9" stroke="#0000ff" stroke-width="2.4" fill="none" stroke-dasharray="5 2"/><path d="M536.9,292.9 C538.6,290.8 543.8,284.0 546.9,280.2 C550.0,276.4 552.8,273.0 555.3,270.2 C557.8,267.4 558.9,265.9 561.9,263.5 C565.0,261.2 571.7,257.3 573.6,256.0" stroke="#0000ff" stroke-width="2.4" fill="none" stroke-dasharray="6 2"/><path d="M570.3,195.1 C569.9,197.6 568.2,205.4 567.8,210.1 C567.4,214.8 567.5,219.8 567.8,223.5 C568.1,227.1 569.2,230.4 569.5,231.8" stroke="#0000ff" stroke-width="2.4" fill="none"/><path d="M570.3,240.2 C570.8,242.7 572.0,249.6 573.6,255.2 C575.3,260.7 577.8,267.3 580.3,273.6 C582.8,279.8 587.3,289.7 588.7,292.9" stroke="#0000ff" stroke-width="2.4" fill="none"/><path d="M479.3,266.9 C479.7,268.5 480.7,273.6 481.8,276.9 C482.9,280.2 484.6,284.2 486.0,286.9 C487.4,289.6 489.4,291.9 490.1,292.9" stroke="#0000ff" stroke-width="2.4" fill="none"/><path d="M481.8,260.2 C481.6,262.4 481.2,269.1 481.0,273.6 C480.7,278.0 480.3,283.7 480.1,286.9 C479.9,290.1 479.8,291.9 479.8,292.9" stroke="#0000ff" stroke-width="2.4" fill="none"/><path d="M478.4,268.5 L486.8,258.5" stroke="#0000ff" stroke-width="2.4" fill="none"/><path d="M582.0,246.8 C582.8,247.4 585.2,249.3 587.0,250.2 C588.8,251.0 592.0,251.6 593.0,251.8" stroke="#0000ff" stroke-width="2.4" fill="none" stroke-dasharray="4 2.5"/><path d="M628.1,193.4 C630.3,192.0 636.1,187.6 641.4,185.0 C646.7,182.5 653.1,180.6 659.8,178.4 C666.5,176.1 677.9,172.8 681.5,171.7" stroke="#0000ff" stroke-width="2.6" fill="none" stroke-dasharray="7 2"/><path d="M593.0,190.9 C594.3,189.8 596.9,183.8 600.5,184.2 C604.1,184.6 610.4,190.2 614.7,193.4 C619.0,196.6 622.6,200.1 626.4,203.4 C630.2,206.8 635.4,211.8 637.3,213.4" stroke="#0000ff" stroke-width="2.4" fill="none"/><path d="M593.0,200.9 C595.8,199.7 604.1,195.5 609.7,193.4 C615.3,191.3 620.0,189.8 626.4,188.4 C632.8,187.0 640.3,185.9 648.1,185.0 C655.9,184.2 665.6,183.4 673.2,183.4 C680.7,183.4 686.5,184.1 693.2,185.0 C699.9,186.0 707.7,188.1 713.2,189.2 C718.8,190.3 724.4,191.3 726.6,191.7" stroke="#0000ff" stroke-width="2.4" fill="none" stroke-dasharray="5 3"/><path d="M674.8,191.7 C677.9,191.3 687.3,189.7 693.2,189.2 C699.0,188.7 704.9,188.6 709.9,188.7 C714.9,188.9 721.0,189.8 723.3,190.1" stroke="#0000ff" stroke-width="2.4" fill="none" stroke-dasharray="6 2"/><path d="M726.6,192.6 C729.4,193.8 737.7,197.4 743.3,200.1 C748.9,202.7 756.2,206.5 760.0,208.4 C763.8,210.4 765.0,211.2 766.0,211.8" stroke="#0000ff" stroke-width="2.4" fill="none" stroke-dasharray="5 3"/><path d="M727.4,176.7 C729.2,177.3 734.5,179.1 738.3,180.0 C742.0,181.0 748.0,182.1 750.0,182.5" stroke="#0000ff" stroke-width="4" fill="none"/><path d="M739.9,190.9 C742.2,191.4 749.0,192.8 753.3,194.2 C757.7,195.6 763.9,198.4 766.0,199.2" stroke="#0000ff" stroke-width="2.4" fill="none" stroke-dasharray="6 3"/><path d="M651.4,221.0 C654.2,219.8 662.3,215.8 668.1,214.3 C674.0,212.7 680.1,212.0 686.5,211.8 C692.9,211.5 699.9,211.9 706.6,212.6 C713.2,213.3 721.0,215.0 726.6,215.9 C732.2,216.9 737.7,218.0 739.9,218.4" stroke="#0000ff" stroke-width="2.4" fill="none" stroke-dasharray="6 3"/><path d="M745.0,221.0 C747.5,221.8 756.5,224.7 760.0,226.0 C763.5,227.2 765.0,228.0 766.0,228.5" stroke="#0000ff" stroke-width="2.4" fill="none" stroke-dasharray="5 3"/><path d="M673.2,228.5 C675.9,227.9 684.0,225.8 689.9,225.1 C695.7,224.4 705.2,224.4 708.2,224.3" stroke="#0000ff" stroke-width="2.4" fill="none" stroke-dasharray="6 2"/><path d="M714.9,226.0 C717.7,226.5 726.0,227.8 731.6,229.3 C737.2,230.8 742.6,232.9 748.3,235.1 C754.0,237.4 763.0,241.4 766.0,242.7" stroke="#0000ff" stroke-width="2.4" fill="none" stroke-dasharray="6 2"/><path d="M593.0,241.8 C595.8,240.7 604.1,237.1 609.7,235.1 C615.3,233.2 621.4,231.2 626.4,230.1 C631.4,229.0 637.5,228.7 639.8,228.5" stroke="#0000ff" stroke-width="2.4" fill="none"/><path d="M593.0,246.8 C595.8,245.4 604.1,241.0 609.7,238.5 C615.3,236.0 623.6,232.9 626.4,231.8" stroke="#0000ff" stroke-width="2.4" fill="none"/><path d="M643.9,222.6 C644.9,224.7 647.8,230.8 649.8,235.1 C651.7,239.5 653.8,244.3 655.6,248.5 C657.4,252.7 659.8,258.2 660.6,260.2" stroke="#0000ff" stroke-width="2.4" fill="none"/><path d="M644.8,223.1 L648.1,223.5" stroke="#0000ff" stroke-width="2.4" fill="none"/><path d="M647.3,227.6 C649.4,227.8 656.6,228.2 659.8,228.5 C663.0,228.7 665.4,229.2 666.5,229.3" stroke="#0000ff" stroke-width="2.4" fill="none"/><path d="M649.8,246.8 C652.3,245.7 659.5,241.8 664.8,240.2 C670.1,238.5 676.8,237.5 681.5,236.8 C686.2,236.1 689.9,235.7 693.2,236.0 C696.5,236.3 700.2,238.1 701.5,238.5" stroke="#0000ff" stroke-width="2.4" fill="none" stroke-dasharray="6 2"/><path d="M669.0,260.2 C670.2,258.5 673.6,253.0 676.5,250.2 C679.4,247.4 684.8,244.6 686.5,243.5" stroke="#0000ff" stroke-width="2.4" fill="none"/><path d="M686.5,243.5 C688.7,243.2 697.1,242.7 699.9,241.8 C702.7,241.0 702.7,239.0 703.2,238.5" stroke="#0000ff" stroke-width="2.4" fill="none" stroke-dasharray="4 2.5"/><path d="M676.5,231.8 C678.7,232.1 686.0,232.5 689.9,233.5 C693.7,234.4 697.6,236.0 699.9,237.6 C702.1,239.3 702.7,242.5 703.2,243.5" stroke="#0000ff" stroke-width="2.4" fill="none" stroke-dasharray="4 2.5"/><path d="M616.4,271.0 C618.0,269.2 623.1,264.0 626.4,260.2 C629.7,256.4 633.8,251.4 636.4,248.5 C639.1,245.6 641.3,243.6 642.3,242.7" stroke="#0000ff" stroke-width="2.4" fill="none"/><path d="M619.7,246.8 C621.7,248.8 627.5,256.3 631.4,258.5 C635.3,260.7 641.1,259.9 643.1,260.2" stroke="#0000ff" stroke-width="2.4" fill="none"/><path d="M626.4,266.9 L633.1,253.5" stroke="#0000ff" stroke-width="2.4" fill="none"/><path d="M636.4,253.5 L644.8,260.2" stroke="#0000ff" stroke-width="2.4" fill="none"/><path d="M709.9,245.2 C711.6,246.6 716.8,250.5 719.9,253.5 C723.0,256.6 726.0,260.7 728.3,263.5 C730.5,266.3 732.4,269.1 733.3,270.2" stroke="#0000ff" stroke-width="2.4" fill="none"/><path d="M708.2,260.2 C709.6,259.1 713.0,255.7 716.6,253.5 C720.2,251.3 725.5,248.4 729.9,246.8 C734.4,245.3 738.3,244.9 743.3,244.3 C748.3,243.8 757.2,243.6 760.0,243.5" stroke="#0000ff" stroke-width="2.4" fill="none"/><path d="M709.9,260.2 C711.6,260.7 717.1,262.6 719.9,263.5 C722.7,264.5 725.5,265.6 726.6,266.0" stroke="#0000ff" stroke-width="2.4" fill="none" stroke-dasharray="4 2.5"/><path d="M709.9,236.8 C712.7,237.1 721.0,237.4 726.6,238.5 C732.2,239.6 737.7,241.5 743.3,243.5 C748.9,245.4 756.2,248.5 760.0,250.2 C763.8,251.8 765.0,253.0 766.0,253.5" stroke="#0000ff" stroke-width="2.4" fill="none" stroke-dasharray="6 2"/><path d="M710.7,241.8 C713.4,242.0 722.3,242.1 726.6,242.7 C730.9,243.2 734.9,244.7 736.6,245.2" stroke="#0000ff" stroke-width="2.4" fill="none"/><path d="M606.4,276.9 C606.6,273.0 607.5,259.9 608.0,253.5 C608.6,247.1 609.1,242.9 609.7,238.5 C610.3,234.0 611.1,228.7 611.4,226.8" stroke="#0000ff" stroke-width="2.4" fill="none"/><path d="M593.0,235.1 C594.7,236.0 599.7,238.5 603.0,240.2 C606.4,241.8 609.1,243.2 613.0,245.2 C616.9,247.1 624.2,250.7 626.4,251.8" stroke="#0000ff" stroke-width="2.4" fill="none"/><path d="M766.0,199.2 C767.7,199.8 773.0,201.5 776.0,202.6 C779.1,203.7 781.3,204.7 784.4,205.9 C787.4,207.2 792.7,209.4 794.4,210.1" stroke="#0000ff" stroke-width="2.4" fill="none" stroke-dasharray="6 2"/><path d="M798.6,213.4 C800.9,214.8 808.2,218.4 812.8,221.8 C817.3,225.1 821.9,229.6 826.1,233.5 C830.3,237.4 834.2,241.3 837.8,245.2 C841.4,249.1 844.9,253.2 847.8,256.9 C850.7,260.5 854.1,265.2 855.3,266.9" stroke="#0000ff" stroke-width="2.4" fill="none"/><path d="M766.0,209.3 C767.7,210.5 772.7,214.1 776.0,216.8 C779.4,219.4 784.4,223.7 786.0,225.1" stroke="#0000ff" stroke-width="2.4" fill="none" stroke-dasharray="4 2.5"/><path d="M791.0,228.5 C793.0,230.4 798.8,235.7 802.7,240.2 C806.6,244.6 811.1,250.5 814.4,255.2 C817.8,259.9 820.0,263.5 822.8,268.5 C825.6,273.6 829.7,282.5 831.1,285.2" stroke="#0000ff" stroke-width="2.4" fill="none" stroke-dasharray="6 2"/><path d="M769.3,231.8 L776.0,236.8" stroke="#0000ff" stroke-width="2.4" fill="none"/><path d="M782.7,242.7 C784.1,243.9 788.5,247.5 791.0,250.2 C793.6,252.8 796.6,257.1 797.7,258.5" stroke="#0000ff" stroke-width="2.4" fill="none" stroke-dasharray="4 2.5"/><path d="M766.0,246.8 L772.7,248.5" stroke="#0000ff" stroke-width="3" fill="none"/><path d="M777.7,251.0 L782.7,251.0" stroke="#0000ff" stroke-width="2.4" fill="none"/><path d="M776.0,255.2 C777.4,256.6 781.6,260.2 784.4,263.5 C787.2,266.9 789.9,271.0 792.7,275.2 C795.5,279.4 799.3,285.6 801.1,288.6 C802.9,291.5 803.2,292.2 803.6,292.9" stroke="#0000ff" stroke-width="2.4" fill="none"/><path d="M772.7,260.2 C774.1,261.3 778.2,264.1 781.0,266.9 C783.8,269.7 786.9,273.6 789.4,276.9 C791.9,280.2 794.4,284.2 796.1,286.9 C797.7,289.6 798.8,291.9 799.4,292.9" stroke="#0000ff" stroke-width="2.4" fill="none"/><path d="M771.0,266.0 C772.1,267.3 775.5,270.4 777.7,273.6 C779.9,276.8 782.7,282.0 784.4,285.2 C786.0,288.5 787.2,291.6 787.7,292.9" stroke="#0000ff" stroke-width="2.4" fill="none"/><path d="M801.1,261.0 C802.5,261.7 806.4,263.1 809.4,265.2 C812.5,267.3 816.4,271.0 819.4,273.6 C822.5,276.1 826.4,279.1 827.8,280.2" stroke="#0000ff" stroke-width="2.4" fill="none" stroke-dasharray="6 2"/><path d="M806.1,268.5 C806.9,270.5 809.7,276.2 811.1,280.2 C812.5,284.3 813.9,290.8 814.4,292.9" stroke="#0000ff" stroke-width="2.4" fill="none"/><path d="M843.6,236.8 C844.1,239.0 845.6,245.7 846.2,250.2 C846.7,254.6 847.0,259.6 847.0,263.5 C847.0,267.4 846.3,271.9 846.2,273.6" stroke="#0000ff" stroke-width="2.4" fill="none"/><path d="M844.5,253.5 C845.3,254.6 847.7,258.0 849.5,260.2 C851.3,262.4 854.4,265.8 855.3,266.9" stroke="#0000ff" stroke-width="2.4" fill="none"/><path d="M862.0,253.5 C861.9,255.7 861.7,263.0 861.2,266.9 C860.6,270.8 859.8,272.6 858.7,276.9 C857.6,281.2 855.2,290.3 854.5,292.9" stroke="#0000ff" stroke-width="2.4" fill="none"/><path d="M857.8,270.2 C858.7,271.9 860.9,276.4 862.9,280.2 C864.8,284.0 868.4,290.8 869.5,292.9" stroke="#0000ff" stroke-width="2.4" fill="none"/><path d="M440.0,339.8 C441.2,337.5 444.2,330.9 446.7,326.4 C449.2,321.9 452.3,317.2 455.1,313.0 C457.9,308.9 461.2,304.7 463.4,301.3 C465.6,298.0 467.6,294.4 468.4,293.0" stroke="#0000ff" stroke-width="2.4" fill="none" stroke-dasharray="4 2.5"/><path d="M431.7,376.5 C432.8,374.3 435.6,367.3 438.4,363.1 C441.2,359.0 444.8,354.4 448.4,351.4 C452.0,348.5 458.1,346.6 460.1,345.6" stroke="#0000ff" stroke-width="2.4" fill="none"/><path d="M429.2,393.2 C430.4,391.0 433.8,384.0 436.7,379.8 C439.6,375.7 443.1,371.6 446.7,368.1 C450.3,364.7 454.5,361.5 458.4,359.0 C462.3,356.5 466.6,354.5 470.1,353.1 C473.6,351.7 477.8,351.0 479.3,350.6" stroke="#0000ff" stroke-width="2.4" fill="none"/><path d="M465.1,341.4 C467.0,340.9 472.6,338.9 476.8,338.1 C481.0,337.3 485.7,336.6 490.1,336.8 C494.6,336.9 499.6,337.9 503.5,338.9 C507.4,340.0 510.2,341.0 513.5,343.1 C516.9,345.2 521.3,348.9 523.5,351.4 C525.8,354.0 526.3,357.0 526.9,358.1" stroke="#0000ff" stroke-width="2.4" fill="none"/><path d="M429.2,394.9 C431.0,393.1 436.0,387.3 440.0,384.0 C444.1,380.7 448.7,377.3 453.4,374.8 C458.1,372.3 462.9,370.5 468.4,369.0 C474.0,367.4 481.0,366.3 486.8,365.6 C492.6,365.0 497.6,365.0 503.5,365.1 C509.3,365.3 518.8,366.3 521.9,366.5" stroke="#0000ff" stroke-width="2.4" fill="none"/><path d="M428.3,398.2 C430.3,396.8 435.9,392.1 440.0,389.9 C444.2,387.6 448.4,386.0 453.4,384.8 C458.4,383.7 464.5,383.5 470.1,383.2 C475.7,382.9 481.2,383.0 486.8,383.2 C492.4,383.3 497.9,383.7 503.5,384.0 C509.1,384.3 517.4,384.7 520.2,384.8" stroke="#0000ff" stroke-width="2.4" fill="none"/><path d="M427.5,406.2 C429.6,406.1 435.7,405.2 440.0,405.2 C444.4,405.3 451.2,406.3 453.4,406.6" stroke="#0000ff" stroke-width="2.4" fill="none"/><path d="M427.5,409.9 C428.5,410.7 431.6,413.4 433.4,414.9 C435.2,416.4 437.5,418.4 438.4,419.1" stroke="#0000ff" stroke-width="2.4" fill="none"/><path d="M430.0,423.3 L433.4,425.9" stroke="#0000ff" stroke-width="2.4" fill="none"/><path d="M443.4,421.6 L448.4,424.9" stroke="#0000ff" stroke-width="2.4" fill="none"/><path d="M481.8,293.0 C481.9,295.8 482.1,304.1 482.6,309.7 C483.2,315.3 483.9,321.1 485.1,326.4 C486.4,331.7 488.5,337.3 490.1,341.4 C491.8,345.6 494.3,349.8 495.1,351.4" stroke="#0000ff" stroke-width="2.4" fill="none"/><path d="M500.2,309.7 C499.7,311.6 498.3,317.5 497.6,321.4 C497.0,325.3 496.3,331.1 496.0,333.1" stroke="#0000ff" stroke-width="2.4" fill="none" stroke-dasharray="4 2.5"/><path d="M489.3,293.0 C490.8,294.9 495.3,300.8 498.5,304.7 C501.7,308.6 504.9,312.8 508.5,316.4 C512.1,320.0 518.2,324.7 520.2,326.4" stroke="#0000ff" stroke-width="2.4" fill="none"/><path d="M510.2,298.0 C509.8,299.7 508.2,305.0 507.7,308.0 C507.1,311.1 506.3,313.9 506.8,316.4 C507.4,318.9 508.8,321.4 511.0,323.1 C513.2,324.7 518.7,325.8 520.2,326.4" stroke="#0000ff" stroke-width="2.4" fill="none"/><path d="M520.2,326.4 C522.4,325.3 529.1,321.4 533.6,319.7 C538.0,318.0 544.7,316.9 546.9,316.4" stroke="#0000ff" stroke-width="2.4" fill="none"/><path d="M520.2,326.4 C521.3,325.0 524.4,320.6 526.9,318.0 C529.4,315.5 533.8,312.5 535.2,311.4" stroke="#0000ff" stroke-width="2.4" fill="none"/><path d="M520.2,326.4 C520.5,328.6 521.0,335.3 521.9,339.8 C522.7,344.2 524.4,350.1 525.2,353.1 C526.0,356.2 526.6,357.3 526.9,358.1" stroke="#0000ff" stroke-width="2.4" fill="none"/><path d="M508.5,318.0 C510.5,319.4 516.0,323.1 520.2,326.4 C524.4,329.7 531.3,336.1 533.6,338.1" stroke="#0000ff" stroke-width="2.4" fill="none"/><path d="M523.5,321.4 C525.2,323.6 531.7,331.1 533.6,334.7 C535.4,338.4 534.2,341.7 534.4,343.1" stroke="#0000ff" stroke-width="2.4" fill="none"/><path d="M528.5,301.3 C528.0,303.3 526.3,309.1 525.2,313.0 C524.1,316.9 522.4,322.8 521.9,324.7" stroke="#0000ff" stroke-width="2.4" fill="none" stroke-dasharray="4 2.5"/><path d="M535.2,293.0 C535.5,294.7 536.2,299.7 536.9,303.0 C537.6,306.4 539.0,311.4 539.4,313.0" stroke="#0000ff" stroke-width="2.4" fill="none" stroke-dasharray="4 2.5"/><path d="M546.9,293.0 L543.6,299.7" stroke="#0000ff" stroke-width="2.4" fill="none"/><path d="M553.6,293.0 C552.8,294.4 550.0,299.1 548.6,301.3 C547.2,303.6 545.8,305.5 545.2,306.4" stroke="#0000ff" stroke-width="2.4" fill="none" stroke-dasharray="4 2.5"/><path d="M483.5,347.3 L490.1,346.4" stroke="#0000ff" stroke-width="2.4" fill="none"/><path d="M486.8,338.1 C487.9,340.0 491.5,348.9 493.5,349.8 C495.4,350.6 497.6,344.2 498.5,343.1" stroke="#0000ff" stroke-width="2.4" fill="none"/><path d="M493.5,343.1 C495.1,342.8 500.2,342.5 503.5,341.4 C506.8,340.3 510.5,338.6 513.5,336.4 C516.6,334.2 520.5,329.5 521.9,328.1" stroke="#0000ff" stroke-width="2.4" fill="none"/><path d="M486.8,359.8 L490.1,355.6" stroke="#0000ff" stroke-width="2.4" fill="none"/><path d="M501.0,359.8 C502.5,361.2 507.3,365.1 510.2,368.1 C513.1,371.2 516.6,375.9 518.5,378.2 C520.5,380.4 521.3,380.9 521.9,381.5" stroke="#0000ff" stroke-width="2.4" fill="none"/><path d="M479.3,373.2 C478.9,374.8 477.8,379.8 476.8,383.2 C475.8,386.5 474.5,389.6 473.4,393.2 C472.3,396.8 470.9,401.0 470.1,404.9 C469.3,408.8 468.7,414.6 468.4,416.6" stroke="#0000ff" stroke-width="2.4" fill="none" stroke-dasharray="4 2.5"/><path d="M491.8,418.2 C493.8,416.6 499.9,411.3 503.5,408.2 C507.1,405.2 511.0,402.2 513.5,399.9 C516.0,397.5 517.7,395.0 518.5,394.0" stroke="#0000ff" stroke-width="2.4" fill="none"/><path d="M498.5,404.9 C499.9,405.7 503.8,408.5 506.8,409.9 C509.9,411.3 515.2,412.7 516.9,413.2" stroke="#0000ff" stroke-width="2.4" fill="none"/><path d="M506.8,416.6 L508.5,411.6" stroke="#0000ff" stroke-width="2.4" fill="none"/><path d="M458.4,349.8 C459.2,352.0 461.5,358.7 463.4,363.1 C465.4,367.6 467.6,372.3 470.1,376.5 C472.6,380.7 475.1,384.3 478.4,388.2 C481.8,392.1 486.0,396.3 490.1,399.9 C494.3,403.5 499.0,407.4 503.5,409.9 C507.9,412.4 514.6,414.1 516.9,414.9" stroke="#0000ff" stroke-width="2.4" fill="none"/><path d="M533.6,337.3 C532.4,336.3 529.1,333.2 526.9,331.4 C524.6,329.6 521.3,327.2 520.2,326.4" stroke="#0000ff" stroke-width="2.4" fill="none"/><path d="M787.7,293.0 L788.5,303.0" stroke="#0000ff" stroke-width="2.4" fill="none"/><path d="M801.9,293.0 C801.8,294.7 801.2,300.0 801.1,303.0 C800.9,306.1 801.1,310.0 801.1,311.4" stroke="#0000ff" stroke-width="2.4" fill="none"/><path d="M791.0,308.0 C793.0,307.2 798.6,304.7 802.7,303.0 C806.9,301.3 813.9,298.8 816.1,298.0" stroke="#0000ff" stroke-width="2.4" fill="none"/><path d="M805.2,293.0 C805.9,294.1 807.6,299.7 809.4,299.7 C811.2,299.7 815.0,294.1 816.1,293.0" stroke="#0000ff" stroke-width="2.4" fill="none"/><path d="M801.9,318.9 C804.3,318.7 810.9,317.9 816.1,318.0 C821.2,318.2 827.2,318.5 832.8,319.7 C838.4,321.0 843.9,323.3 849.5,325.6 C855.1,327.8 860.9,330.2 866.2,333.1 C871.5,336.0 878.7,341.4 881.2,343.1" stroke="#0000ff" stroke-width="2.4" fill="none"/><path d="M814.4,309.7 C814.6,312.5 814.6,320.8 815.3,326.4 C816.0,332.0 818.0,340.3 818.6,343.1" stroke="#0000ff" stroke-width="2.4" fill="none"/><path d="M811.1,331.4 L817.8,309.7" stroke="#0000ff" stroke-width="2.4" fill="none"/><path d="M814.4,338.1 C816.1,336.4 821.4,331.7 824.4,328.1 C827.5,324.4 830.3,320.6 832.8,316.4 C835.3,312.2 837.5,306.9 839.5,303.0 C841.4,299.1 843.6,294.7 844.5,293.0" stroke="#0000ff" stroke-width="2.4" fill="none"/><path d="M816.1,334.7 C818.3,333.1 825.3,328.6 829.5,324.7 C833.6,320.8 837.8,315.8 841.1,311.4 C844.5,306.9 847.5,301.1 849.5,298.0 C851.4,294.9 852.3,293.8 852.8,293.0" stroke="#0000ff" stroke-width="2.4" fill="none"/><path d="M826.1,297.2 C828.3,297.0 834.5,296.1 839.5,296.3 C844.5,296.6 850.6,297.5 856.2,298.8 C861.7,300.2 867.3,302.3 872.9,304.7 C878.4,307.1 884.8,310.3 889.6,313.0 C894.3,315.8 898.2,318.9 901.3,321.4 C904.3,323.9 906.8,327.0 907.9,328.1" stroke="#0000ff" stroke-width="2.4" fill="none"/><path d="M839.5,293.0 C840.6,295.2 843.9,301.6 846.2,306.4 C848.4,311.1 851.4,318.0 852.8,321.4 C854.2,324.7 854.2,325.6 854.5,326.4" stroke="#0000ff" stroke-width="2.4" fill="none"/><path d="M871.2,293.0 C872.3,295.2 875.9,300.8 877.9,306.4 C879.8,311.9 881.7,320.6 882.9,326.4 C884.1,332.2 884.6,338.9 884.9,341.4" stroke="#0000ff" stroke-width="2.4" fill="none" stroke-dasharray="4 2.5"/><path d="M901.3,313.0 C901.1,315.3 901.0,322.2 900.4,326.4 C899.9,330.6 898.3,336.1 897.9,338.1" stroke="#0000ff" stroke-width="2.4" fill="none"/><path d="M883.7,346.4 C885.3,348.1 889.4,352.6 892.9,356.5 C896.4,360.4 901.3,364.8 904.6,369.8 C907.9,374.8 910.4,380.9 912.9,386.5 C915.5,392.1 917.8,396.6 919.6,403.2 C921.4,409.8 923.1,422.1 923.8,425.9" stroke="#0000ff" stroke-width="2.4" fill="none" stroke-dasharray="6 2"/><path d="M897.9,343.1 C896.8,345.0 893.2,350.6 891.2,354.8 C889.3,359.0 887.2,364.0 886.2,368.1 C885.3,372.3 886.0,376.5 885.4,379.8 C884.8,383.2 883.3,386.8 882.9,388.2" stroke="#0000ff" stroke-width="2.4" fill="none"/><path d="M857.0,335.6 L858.7,348.1" stroke="#0000ff" stroke-width="2.4" fill="none"/><path d="M859.8,356.5 C859.5,359.0 859.0,366.5 857.8,371.5 C856.7,376.5 854.5,382.1 852.8,386.5 C851.2,391.0 849.5,394.9 847.8,398.2 C846.2,401.5 843.6,405.2 842.8,406.6" stroke="#0000ff" stroke-width="2.4" fill="none" stroke-dasharray="6 2"/><path d="M885.4,366.5 C883.3,369.0 877.2,377.1 872.9,381.5 C868.6,386.0 864.0,389.6 859.5,393.2 C855.1,396.8 849.8,400.7 846.2,403.2 C842.5,405.7 839.2,407.4 837.8,408.2" stroke="#0000ff" stroke-width="2.4" fill="none"/><path d="M886.2,378.2 C884.3,380.1 878.7,386.2 874.5,389.9 C870.4,393.5 865.4,396.8 861.2,399.9 C857.0,402.9 851.4,406.8 849.5,408.2" stroke="#0000ff" stroke-width="2.4" fill="none"/><path d="M834.5,389.0 C835.6,390.8 838.6,396.4 841.1,399.9 C843.6,403.4 847.0,407.0 849.5,409.9 C852.0,412.8 855.1,416.2 856.2,417.4" stroke="#0000ff" stroke-width="2.4" fill="none"/><path d="M836.1,404.9 L849.5,408.2" stroke="#0000ff" stroke-width="3" fill="none"/><path d="M837.8,409.9 L839.5,414.9" stroke="#0000ff" stroke-width="2.4" fill="none"/><path d="M846.2,406.6 L852.8,416.6" stroke="#0000ff" stroke-width="2.4" fill="none"/><path d="M882.9,388.2 C882.3,390.4 880.8,397.6 879.6,401.5 C878.3,405.4 876.1,409.9 875.4,411.6" stroke="#0000ff" stroke-width="2.4" fill="none" stroke-dasharray="4 2.5"/><path d="M851.2,423.3 L857.8,424.9" stroke="#0000ff" stroke-width="2.4" fill="none"/><path d="M430.0,426.0 C430.3,426.8 431.0,429.3 431.7,431.0 C432.4,432.7 433.8,435.2 434.2,436.0" stroke="#0000ff" stroke-width="2.4" fill="none"/><path d="M449.2,426.0 C451.3,426.8 457.4,429.6 461.7,431.0 C466.1,432.4 470.7,433.5 475.1,434.3 C479.6,435.2 486.2,435.7 488.5,436.0" stroke="#0000ff" stroke-width="2.4" fill="none"/><path d="M501.8,426.0 C501.1,427.7 498.8,432.7 497.6,436.0 C496.5,439.4 495.8,442.1 495.1,446.0 C494.4,449.9 493.6,454.9 493.5,459.4 C493.3,463.9 493.9,469.1 494.3,472.8 C494.7,476.4 495.7,479.7 496.0,481.1" stroke="#0000ff" stroke-width="2.4" fill="none" stroke-dasharray="4 2.5"/><path d="M515.2,433.5 C514.1,435.6 510.6,441.7 508.5,446.0 C506.4,450.4 504.3,455.2 502.7,459.4 C501.0,463.6 499.6,467.5 498.5,471.1 C497.4,474.7 496.4,479.4 496.0,481.1" stroke="#0000ff" stroke-width="2.4" fill="none"/><path d="M486.8,427.7 C485.7,429.1 482.2,432.7 480.1,436.0 C478.0,439.4 475.9,443.8 474.3,447.7 C472.6,451.6 471.1,455.8 470.1,459.4 C469.1,463.0 468.7,467.7 468.4,469.4" stroke="#0000ff" stroke-width="2.4" fill="none"/><path d="M469.3,464.4 L470.1,476.1" stroke="#0000ff" stroke-width="4" fill="none"/><path d="M467.6,437.7 C467.7,439.6 468.0,445.8 468.4,449.4 C468.8,453.0 469.8,457.7 470.1,459.4" stroke="#0000ff" stroke-width="2.4" fill="none" stroke-dasharray="4 2.5"/><path d="M465.1,479.4 C465.0,481.7 464.8,488.3 464.8,492.8 C464.8,497.2 464.6,501.7 465.1,506.2 C465.6,510.6 466.5,515.1 467.6,519.5 C468.7,524.0 470.0,528.4 471.8,532.9 C473.6,537.3 475.9,541.9 478.4,546.2 C481.0,550.6 485.4,556.8 486.8,558.9" stroke="#0000ff" stroke-width="2.4" fill="none"/><path d="M470.9,479.4 C471.1,481.7 471.5,488.3 471.8,492.8 C472.0,497.2 472.0,501.7 472.6,506.2 C473.2,510.6 473.9,514.8 475.1,519.5 C476.4,524.2 478.2,529.5 480.1,534.5 C482.1,539.6 484.8,545.5 486.8,549.6 C488.7,553.6 491.0,557.4 491.8,558.9" stroke="#0000ff" stroke-width="2.4" fill="none"/><path d="M475.1,479.4 C475.5,480.8 476.5,485.0 477.6,487.8 C478.7,490.6 481.1,494.7 481.8,496.1" stroke="#0000ff" stroke-width="2.4" fill="none" stroke-dasharray="4 2.5"/><path d="M437.5,488.6 C438.8,489.3 442.1,491.1 445.0,492.8 C448.0,494.5 453.4,497.7 455.1,498.6" stroke="#0000ff" stroke-width="2.4" fill="none"/><path d="M437.5,489.5 C438.1,490.8 439.6,495.3 440.9,497.8 C442.1,500.3 444.4,503.4 445.0,504.5" stroke="#0000ff" stroke-width="2.4" fill="none"/><path d="M446.7,507.8 C447.3,509.2 449.2,514.5 450.1,516.2 C450.9,517.8 451.4,517.6 451.7,517.8" stroke="#0000ff" stroke-width="2.4" fill="none"/><path d="M455.1,521.2 C456.2,523.1 459.2,529.3 461.7,532.9 C464.3,536.5 467.9,540.7 470.1,542.9 C472.3,545.1 474.3,545.7 475.1,546.2" stroke="#0000ff" stroke-width="2.4" fill="none"/><path d="M460.1,502.0 C462.3,502.4 469.0,503.9 473.4,504.5 C477.9,505.0 482.3,505.3 486.8,505.3 C491.2,505.3 495.7,505.0 500.2,504.5 C504.6,503.9 509.1,502.8 513.5,502.0 C518.0,501.1 523.0,500.2 526.9,499.5 C530.8,498.7 535.2,497.8 536.9,497.5" stroke="#0000ff" stroke-width="2.4" fill="none"/><path d="M497.6,488.6 C497.0,489.3 494.6,490.7 493.5,492.8 C492.4,494.9 491.5,497.8 491.0,501.1 C490.4,504.5 490.1,508.7 490.1,512.8 C490.1,517.0 490.7,521.2 491.0,526.2 C491.2,531.2 491.4,537.4 491.8,542.9 C492.2,548.3 493.2,556.3 493.5,558.9" stroke="#0000ff" stroke-width="2.4" fill="none"/><path d="M497.6,488.6 C497.8,489.9 497.8,493.5 498.5,496.1 C499.2,498.8 501.3,503.1 501.8,504.5" stroke="#0000ff" stroke-width="2.4" fill="none"/><path d="M492.6,514.5 C493.9,515.9 497.8,520.1 500.2,522.9 C502.5,525.6 505.7,529.8 506.8,531.2" stroke="#0000ff" stroke-width="2.4" fill="none"/><path d="M501.8,507.8 C502.9,510.1 506.0,516.7 508.5,521.2 C511.0,525.6 514.1,530.6 516.9,534.5 C519.6,538.4 523.8,542.9 525.2,544.6" stroke="#0000ff" stroke-width="2.4" fill="none" stroke-dasharray="6 2"/><path d="M532.7,545.4 C532.3,546.1 530.1,547.8 530.2,549.6 C530.4,551.4 531.9,554.7 533.6,556.3 C535.2,557.8 539.1,558.5 540.2,558.9" stroke="#0000ff" stroke-width="2.4" fill="none"/><path d="M542.7,542.9 C544.3,544.0 548.4,547.3 551.9,549.6 C555.4,551.8 561.1,554.7 563.6,556.3 C566.1,557.8 566.4,558.5 566.9,558.9" stroke="#0000ff" stroke-width="2.4" fill="none"/><path d="M498.5,548.7 L501.8,558.9" stroke="#0000ff" stroke-width="2.4" fill="none"/><path d="M836.1,434.3 C838.4,435.3 844.5,438.0 849.5,440.2 C854.5,442.4 860.6,444.8 866.2,447.7 C871.8,450.6 877.9,454.4 882.9,457.7 C887.9,461.1 892.1,463.9 896.3,467.7 C900.4,471.6 904.6,476.7 907.9,481.1 C911.3,485.6 914.9,492.2 916.3,494.5" stroke="#0000ff" stroke-width="2.4" fill="none"/><path d="M834.5,446.0 C835.3,446.9 837.5,450.1 839.5,451.0 C841.4,452.0 844.1,452.4 846.2,451.9 C848.2,451.3 850.5,449.5 852.0,447.7 C853.5,445.9 854.8,442.1 855.3,441.0" stroke="#0000ff" stroke-width="2.4" fill="none"/><path d="M852.0,426.0 C852.1,427.4 852.4,431.6 852.8,434.3 C853.3,437.1 853.9,439.9 854.5,442.7 C855.1,445.5 855.9,449.7 856.2,451.0" stroke="#0000ff" stroke-width="3" fill="none"/><path d="M856.2,451.0 C855.9,453.0 855.2,458.3 854.5,462.7 C853.8,467.2 852.4,475.3 852.0,477.8" stroke="#0000ff" stroke-width="2.4" fill="none" stroke-dasharray="4 2.5"/><path d="M848.7,487.0 C848.2,488.5 847.7,492.4 846.2,496.1 C844.6,499.9 842.0,505.3 839.5,509.5 C837.0,513.7 833.9,517.8 831.1,521.2 C828.3,524.5 824.2,528.1 822.8,529.5" stroke="#0000ff" stroke-width="2.4" fill="none" stroke-dasharray="4 2.5"/><path d="M854.5,442.7 C855.9,444.9 860.1,451.6 862.9,456.1 C865.6,460.5 868.7,464.7 871.2,469.4 C873.7,474.1 876.4,479.7 877.9,484.4 C879.4,489.2 879.7,493.1 880.4,497.8 C881.1,502.5 881.5,508.1 882.1,512.8 C882.6,517.6 883.2,521.7 883.7,526.2 C884.3,530.6 885.3,535.1 885.4,539.6 C885.5,544.0 885.0,549.7 884.6,552.9 C884.1,556.1 883.2,557.9 882.9,558.9" stroke="#0000ff" stroke-width="2.4" fill="none" stroke-dasharray="7 2"/><path d="M902.9,492.8 C901.8,494.5 898.8,499.5 896.3,502.8 C893.7,506.2 890.4,509.8 887.9,512.8 C885.4,515.9 882.3,519.8 881.2,521.2" stroke="#0000ff" stroke-width="2.4" fill="none" stroke-dasharray="4 2.5"/><path d="M881.2,521.2 C879.3,522.6 873.7,526.7 869.5,529.5 C865.4,532.3 860.3,535.5 856.2,537.9 C852.0,540.2 848.4,542.1 844.5,543.7 C840.6,545.4 834.7,547.2 832.8,547.9" stroke="#0000ff" stroke-width="2.4" fill="none"/><path d="M827.8,543.7 C829.7,542.5 835.3,538.9 839.5,536.2 C843.6,533.6 848.4,530.2 852.8,527.9 C857.3,525.5 862.3,523.1 866.2,522.0 C870.1,520.9 873.4,520.5 876.2,521.2 C879.0,521.9 881.4,523.7 882.9,526.2 C884.4,528.7 885.0,534.5 885.4,536.2" stroke="#0000ff" stroke-width="2.4" fill="none"/><path d="M823.6,517.0 C823.5,518.5 823.2,523.0 822.8,526.2 C822.4,529.4 821.4,534.5 821.1,536.2" stroke="#0000ff" stroke-width="2.4" fill="none"/><path d="M804.4,517.8 C805.8,519.5 810.0,524.8 812.8,527.9 C815.5,530.9 819.7,534.8 821.1,536.2" stroke="#0000ff" stroke-width="2.4" fill="none"/><path d="M799.4,527.0 C799.8,528.6 801.2,533.0 801.9,536.2 C802.6,539.4 803.0,542.4 803.6,546.2 C804.1,550.0 805.0,556.8 805.2,558.9" stroke="#0000ff" stroke-width="2.4" fill="none"/><path d="M777.7,543.7 C779.6,544.4 785.2,546.9 789.4,547.9 C793.6,548.9 798.3,549.4 802.7,549.6 C807.2,549.7 812.5,549.0 816.1,548.7 C819.7,548.5 822.4,547.2 824.4,547.9 C826.5,548.6 827.6,551.1 828.6,552.9 C829.6,554.7 830.0,557.9 830.3,558.9" stroke="#0000ff" stroke-width="2.4" fill="none"/><path d="M776.0,544.6 C777.7,545.7 782.7,549.3 786.0,551.2 C789.4,553.2 793.3,555.0 796.1,556.3 C798.8,557.5 801.6,558.5 802.7,558.9" stroke="#0000ff" stroke-width="2.4" fill="none"/><path d="M766.0,556.3 C767.7,556.0 772.4,555.4 776.0,554.6 C779.6,553.7 783.8,552.2 787.7,551.2 C791.6,550.3 797.4,549.2 799.4,548.7" stroke="#0000ff" stroke-width="2.4" fill="none"/><path d="M889.6,547.9 C889.0,548.7 887.3,551.1 886.2,552.9 C885.1,554.7 883.4,557.9 882.9,558.9" stroke="#0000ff" stroke-width="2.4" fill="none"/><path d="M880.4,534.5 C880.2,536.5 880.2,542.2 879.6,546.2 C878.9,550.3 876.8,556.8 876.2,558.9" stroke="#0000ff" stroke-width="2.4" fill="none" stroke-dasharray="4 2.5"/><path d="M817.8,542.9 L816.1,547.9" stroke="#0000ff" stroke-width="2.4" fill="none"/><path d="M480.1,559.0 C481.2,560.7 484.0,565.1 486.8,569.0 C489.6,572.9 493.2,577.9 496.8,582.4 C500.4,586.8 504.1,591.3 508.5,595.7 C513.0,600.2 518.5,605.2 523.5,609.1 C528.5,613.0 533.8,616.3 538.6,619.1 C543.3,621.9 549.7,624.7 551.9,625.8" stroke="#0000ff" stroke-width="2.4" fill="none"/><path d="M486.8,559.0 C488.2,560.7 491.8,565.4 495.1,569.0 C498.5,572.6 502.7,576.8 506.8,580.7 C511.0,584.6 515.5,588.5 520.2,592.4 C524.9,596.3 530.8,600.5 535.2,604.1 C539.7,607.7 543.0,611.0 546.9,614.1 C550.8,617.2 556.7,621.1 558.6,622.5" stroke="#0000ff" stroke-width="2.6" fill="none"/><path d="M491.8,559.0 C493.2,560.7 497.1,566.0 500.2,569.0 C503.2,572.1 508.5,576.0 510.2,577.4" stroke="#0000ff" stroke-width="2.4" fill="none"/><path d="M500.2,572.4 C500.7,574.6 501.8,581.0 503.5,585.7 C505.2,590.4 507.4,596.0 510.2,600.7 C513.0,605.5 518.5,611.9 520.2,614.1" stroke="#0000ff" stroke-width="2.4" fill="none"/><path d="M500.2,574.0 C502.4,574.6 508.5,575.7 513.5,577.4 C518.5,579.0 524.6,582.2 530.2,584.0 C535.8,585.9 541.3,587.2 546.9,588.2 C552.5,589.2 558.6,589.8 563.6,589.9 C568.6,590.0 574.7,589.2 577.0,589.1" stroke="#0000ff" stroke-width="2.4" fill="none"/><path d="M531.9,559.0 C532.2,561.2 532.7,567.6 533.6,572.4 C534.4,577.1 535.2,582.4 536.9,587.4 C538.6,592.4 541.1,597.7 543.6,602.4 C546.1,607.1 550.0,612.4 551.9,615.8 C553.9,619.1 554.7,621.3 555.3,622.5" stroke="#0000ff" stroke-width="2.4" fill="none"/><path d="M506.8,559.0 L510.2,569.0" stroke="#0000ff" stroke-width="2.4" fill="none"/><path d="M543.6,561.5 C545.2,562.5 549.7,565.4 553.6,567.3 C557.5,569.3 562.5,571.5 566.9,573.2 C571.4,574.9 576.0,576.1 580.3,577.4 C584.7,578.6 590.9,580.2 593.0,580.7" stroke="#0000ff" stroke-width="2.4" fill="none" stroke-dasharray="6 2"/><path d="M565.3,559.0 C567.2,560.0 573.1,563.2 577.0,564.8 C580.9,566.5 586.7,568.3 588.7,569.0" stroke="#0000ff" stroke-width="2.4" fill="none" stroke-dasharray="4 2.5"/><path d="M587.0,580.7 L593.0,584.0" stroke="#0000ff" stroke-width="3" fill="none"/><path d="M556.9,603.3 L566.9,604.9" stroke="#0000ff" stroke-width="2.4" fill="none"/><path d="M573.6,606.6 L593.0,609.1" stroke="#0000ff" stroke-width="2.4" fill="none" stroke-dasharray="6 3"/><path d="M563.6,625.8 C565.8,626.6 572.1,628.9 577.0,630.8 C581.9,632.8 590.3,636.4 593.0,637.5" stroke="#0000ff" stroke-width="2.4" fill="none"/><path d="M558.6,630.8 C560.0,632.2 563.9,636.6 566.9,639.2 C570.0,641.7 572.6,643.6 577.0,645.8 C581.3,648.1 590.3,651.4 593.0,652.5" stroke="#0000ff" stroke-width="2.4" fill="none"/><path d="M565.3,634.1 C567.5,635.3 574.0,638.9 578.6,640.8 C583.3,642.8 590.6,645.0 593.0,645.8" stroke="#0000ff" stroke-width="2.4" fill="none"/><path d="M561.9,637.5 L570.3,642.5" stroke="#0000ff" stroke-width="4" fill="none"/><path d="M520.2,610.8 C521.9,611.6 526.9,614.8 530.2,615.8 C533.6,616.8 538.6,616.5 540.2,616.6" stroke="#0000ff" stroke-width="2.4" fill="none"/><path d="M543.6,615.8 C545.2,616.9 551.1,620.8 553.6,622.5 C556.1,624.1 557.8,625.2 558.6,625.8" stroke="#0000ff" stroke-width="3" fill="none"/><path d="M603.0,564.0 C603.2,566.0 603.3,571.0 603.9,575.7 C604.4,580.4 605.1,587.1 606.4,592.4 C607.6,597.7 609.4,603.0 611.4,607.4 C613.3,611.9 616.9,617.2 618.0,619.1" stroke="#0000ff" stroke-width="2.4" fill="none"/><path d="M593.0,571.5 C594.7,571.8 599.4,572.9 603.0,573.2 C606.6,573.5 611.4,573.3 614.7,573.2 C618.0,573.1 621.7,572.5 623.1,572.4" stroke="#0000ff" stroke-width="2.4" fill="none" stroke-dasharray="6 2"/><path d="M593.0,584.0 C595.2,584.0 601.9,584.5 606.4,584.0 C610.8,583.6 615.5,582.5 619.7,581.5 C623.9,580.6 628.1,579.2 631.4,578.2 C634.7,577.2 638.4,576.1 639.8,575.7" stroke="#0000ff" stroke-width="2.4" fill="none"/><path d="M604.7,565.7 C605.5,567.1 607.8,571.2 609.7,574.0 C611.6,576.8 615.3,581.0 616.4,582.4" stroke="#0000ff" stroke-width="2.4" fill="none"/><path d="M593.0,585.7 C594.1,587.4 597.2,592.1 599.7,595.7 C602.2,599.4 605.0,603.3 608.0,607.4 C611.1,611.6 614.7,616.6 618.0,620.8 C621.4,625.0 625.0,629.1 628.1,632.5 C631.1,635.8 635.0,639.4 636.4,640.8" stroke="#0000ff" stroke-width="2.4" fill="none"/><path d="M613.0,604.1 C615.3,603.5 622.5,601.9 626.4,600.7 C630.3,599.6 633.6,598.5 636.4,597.4 C639.2,596.3 642.0,594.6 643.1,594.1" stroke="#0000ff" stroke-width="2.4" fill="none"/><path d="M616.4,611.6 C618.0,612.7 622.8,615.9 626.4,618.3 C630.0,620.6 636.1,624.5 638.1,625.8" stroke="#0000ff" stroke-width="2.4" fill="none"/><path d="M593.0,608.3 C594.1,608.2 597.7,608.0 599.7,607.8 C601.6,607.6 603.9,607.2 604.7,607.1" stroke="#0000ff" stroke-width="2.4" fill="none"/><path d="M593.0,617.4 C594.9,617.6 600.5,618.3 604.7,618.3 C608.9,618.3 613.9,617.9 618.0,617.4 C622.2,617.0 626.1,616.3 629.7,615.8 C633.4,615.2 638.1,614.4 639.8,614.1" stroke="#0000ff" stroke-width="2.4" fill="none" stroke-dasharray="6 3"/><path d="M650.6,590.7 C651.6,589.9 654.5,587.4 656.5,585.7 C658.4,584.0 661.3,581.5 662.3,580.7" stroke="#0000ff" stroke-width="2.4" fill="none"/><path d="M669.0,580.7 C669.4,581.5 670.0,584.3 671.5,585.7 C673.0,587.1 675.7,588.5 678.2,589.1 C680.7,589.6 683.5,589.6 686.5,589.1 C689.6,588.5 694.0,587.1 696.5,585.7 C699.0,584.3 700.7,581.5 701.5,580.7" stroke="#0000ff" stroke-width="2.4" fill="none"/><path d="M684.0,598.2 C685.5,598.0 690.3,597.7 693.2,596.6 C696.1,595.5 699.7,592.8 701.5,591.6 C703.4,590.3 703.6,589.5 704.0,589.1" stroke="#0000ff" stroke-width="2.4" fill="none"/><path d="M691.5,580.7 C690.1,582.4 686.8,587.4 683.2,590.7 C679.6,594.1 674.3,597.7 669.8,600.7 C665.4,603.8 660.4,607.0 656.5,609.1 C652.6,611.2 648.1,612.6 646.4,613.3" stroke="#0000ff" stroke-width="2.4" fill="none"/><path d="M642.3,627.5 C644.6,628.6 651.3,631.9 656.5,634.1 C661.6,636.4 667.6,639.2 673.2,640.8 C678.7,642.5 684.3,643.3 689.9,644.2 C695.4,645.0 702.4,645.4 706.6,645.8 C710.7,646.3 713.5,646.5 714.9,646.7" stroke="#0000ff" stroke-width="2.4" fill="none"/><path d="M639.8,642.5 C641.7,643.7 647.3,647.5 651.4,650.0 C655.6,652.5 660.6,655.7 664.8,657.5 C669.0,659.3 674.5,660.3 676.5,660.9" stroke="#0000ff" stroke-width="2.4" fill="none"/><path d="M676.5,660.9 C678.7,660.0 685.4,657.5 689.9,655.9 C694.3,654.2 699.3,652.5 703.2,650.8 C707.1,649.2 711.6,646.7 713.2,645.8" stroke="#0000ff" stroke-width="2.4" fill="none"/><path d="M676.5,659.2 C679.3,659.2 688.2,659.7 693.2,659.2 C698.2,658.6 702.1,657.2 706.6,655.9 C711.0,654.5 715.7,652.5 719.9,650.8 C724.1,649.2 727.7,647.4 731.6,645.8 C735.5,644.3 741.3,642.4 743.3,641.7" stroke="#0000ff" stroke-width="2.4" fill="none" stroke-dasharray="4 2.5"/><path d="M719.1,645.0 C720.6,644.0 724.8,641.4 728.3,639.2 C731.7,636.9 738.0,632.9 739.9,631.6" stroke="#0000ff" stroke-width="2.4" fill="none"/><path d="M593.0,649.2 C595.2,650.0 601.3,652.5 606.4,654.2 C611.4,655.9 616.9,658.1 623.1,659.2 C629.2,660.3 636.4,660.6 643.1,660.9 C649.8,661.1 657.6,660.7 663.1,660.5 C668.7,660.4 674.3,660.1 676.5,660.0" stroke="#0000ff" stroke-width="2.6" fill="none"/><path d="M593.0,654.2 C595.8,654.7 604.1,656.7 609.7,657.5 C615.3,658.4 623.6,658.9 626.4,659.2" stroke="#0000ff" stroke-width="2.4" fill="none" stroke-dasharray="4 2.5"/><path d="M676.5,661.7 C678.7,662.1 685.7,663.5 689.9,664.2 C694.0,664.9 698.1,665.5 701.5,665.9 C705.0,666.3 709.2,666.6 710.7,666.7" stroke="#0000ff" stroke-width="2.4" fill="none" stroke-dasharray="6 2"/><path d="M719.1,575.7 C720.9,577.4 725.9,582.7 729.9,585.7 C734.0,588.8 738.8,591.8 743.3,594.1 C747.7,596.3 752.9,598.0 756.6,599.1 C760.4,600.2 764.4,600.5 766.0,600.7" stroke="#0000ff" stroke-width="2.4" fill="none"/><path d="M760.0,599.1 C759.7,600.5 759.7,604.9 758.3,607.4 C756.9,609.9 753.6,611.0 751.6,614.1 C749.7,617.2 747.6,621.9 746.6,625.8 C745.7,629.7 745.2,634.4 745.8,637.5 C746.4,640.5 749.3,643.1 750.0,644.2" stroke="#0000ff" stroke-width="2.4" fill="none"/><path d="M727.4,620.0 C729.5,619.4 735.6,617.9 739.9,616.6 C744.3,615.4 751.1,613.1 753.3,612.4" stroke="#0000ff" stroke-width="2.4" fill="none" stroke-dasharray="6 2"/><path d="M750.0,622.5 C750.2,624.4 750.2,631.1 751.6,634.1 C753.0,637.2 755.9,639.4 758.3,640.8 C760.7,642.2 764.7,642.2 766.0,642.5" stroke="#0000ff" stroke-width="2.4" fill="none"/><path d="M766.0,625.8 C764.7,626.9 760.7,630.5 758.3,632.5 C755.9,634.4 752.8,636.6 751.6,637.5" stroke="#0000ff" stroke-width="2.4" fill="none"/><path d="M803.6,559.0 C803.3,560.7 802.9,565.4 801.9,569.0 C800.9,572.6 799.5,576.8 797.7,580.7 C795.9,584.6 792.9,588.6 791.0,592.4 C789.2,596.2 787.6,601.4 786.9,603.3" stroke="#0000ff" stroke-width="2.4" fill="none" stroke-dasharray="5 2"/><path d="M806.1,559.0 L804.4,565.7" stroke="#0000ff" stroke-width="4" fill="none"/><path d="M807.7,560.7 C810.0,560.9 816.4,561.6 821.1,562.3 C825.8,563.0 831.4,564.4 836.1,564.8 C840.9,565.3 845.0,565.3 849.5,564.8 C853.9,564.4 858.4,563.2 862.9,562.3 C867.3,561.5 874.0,560.3 876.2,559.8" stroke="#0000ff" stroke-width="2.4" fill="none" stroke-dasharray="6 2"/><path d="M831.1,559.0 C831.5,561.2 832.9,567.9 833.6,572.4 C834.3,576.8 835.2,581.3 835.3,585.7 C835.4,590.2 835.0,594.3 834.5,599.1 C833.9,603.8 832.4,611.6 832.0,614.1" stroke="#0000ff" stroke-width="2.4" fill="none"/><path d="M826.1,576.5 C828.3,577.0 835.0,578.8 839.5,579.0 C843.9,579.3 848.9,578.8 852.8,578.2 C856.7,577.6 861.2,576.1 862.9,575.7" stroke="#0000ff" stroke-width="2.4" fill="none"/><path d="M856.2,577.4 C858.1,576.8 864.0,576.5 867.9,574.0 C871.8,571.5 877.6,564.3 879.6,562.3" stroke="#0000ff" stroke-width="2.4" fill="none"/><path d="M866.2,564.0 C866.5,565.7 868.1,570.7 867.9,574.0 C867.6,577.4 865.1,582.4 864.5,584.0" stroke="#0000ff" stroke-width="2.4" fill="none"/><path d="M881.2,559.0 L869.5,572.4" stroke="#0000ff" stroke-width="2.4" fill="none"/><path d="M786.9,603.3 C789.0,602.8 794.5,601.9 799.4,600.7 C804.3,599.6 810.5,598.2 816.1,596.6 C821.7,594.9 827.8,592.8 832.8,590.7 C837.8,588.6 841.7,586.3 846.2,584.0 C850.6,581.8 857.3,578.5 859.5,577.4" stroke="#0000ff" stroke-width="2.4" fill="none"/><path d="M777.7,585.7 C779.4,584.3 784.4,580.2 787.7,577.4 C791.0,574.6 795.1,571.2 797.7,569.0 C800.4,566.8 802.6,564.8 803.6,564.0" stroke="#0000ff" stroke-width="2.4" fill="none" stroke-dasharray="4 2.5"/><path d="M781.9,593.2 C783.1,592.4 786.9,589.8 789.4,588.2 C791.9,586.7 795.6,584.7 796.9,584.0" stroke="#0000ff" stroke-width="2.4" fill="none" stroke-dasharray="4 2.5"/><path d="M766.0,594.9 L772.7,592.4" stroke="#0000ff" stroke-width="2.4" fill="none"/><path d="M766.0,603.3 C767.4,603.4 771.8,603.8 774.3,604.1 C776.9,604.4 779.9,604.8 781.0,604.9" stroke="#0000ff" stroke-width="2.4" fill="none"/><path d="M782.7,608.3 C781.6,609.5 778.8,612.9 776.0,615.8 C773.2,618.7 767.7,624.1 766.0,625.8" stroke="#0000ff" stroke-width="2.4" fill="none"/><path d="M766.0,645.0 C767.7,644.9 772.4,644.4 776.0,644.2 C779.6,643.9 785.8,643.5 787.7,643.3" stroke="#0000ff" stroke-width="3" fill="none"/><path d="M772.7,639.2 L769.3,642.5" stroke="#0000ff" stroke-width="2.4" fill="none"/></g><ellipse cx="574.5" cy="255.2" rx="3" ry="3" fill="#0000ff"/><ellipse cx="687.7" cy="242.7" rx="4" ry="4" fill="#0000ff"/><ellipse cx="723.3" cy="190.4" rx="5" ry="2.5" fill="#0000ff"/><ellipse cx="767.7" cy="255.2" rx="3" ry="3" fill="#0000ff"/><ellipse cx="830.8" cy="284.9" rx="2" ry="2" fill="#0000ff"/><ellipse cx="836.1" cy="291.1" rx="2" ry="2" fill="#0000ff"/><ellipse cx="488.8" cy="370.6" rx="3" ry="4" fill="#0000ff"/><ellipse cx="554.9" cy="313.9" rx="1.5" ry="1.5" fill="#0000ff"/><ellipse cx="891.2" cy="352.3" rx="4" ry="4" fill="#0000ff"/><ellipse cx="893.7" cy="363.1" rx="3" ry="4" fill="#0000ff"/><ellipse cx="904.9" cy="384.8" rx="3" ry="5" fill="#0000ff"/><ellipse cx="916.0" cy="352.8" rx="1.5" ry="1.5" fill="#0000ff"/><ellipse cx="875.4" cy="411.9" rx="2" ry="2" fill="#0000ff"/><ellipse cx="854.5" cy="429.3" rx="3" ry="4" fill="#0000ff"/><ellipse cx="905.9" cy="466.1" rx="3" ry="6" fill="#0000ff"/><ellipse cx="663.1" cy="592.9" rx="3.5" ry="2.5" fill="#0000ff"/><ellipse cx="811.4" cy="539.9" rx="1.5" ry="2.5" fill="#0000ff"/><ellipse cx="464.8" cy="468.6" rx="3" ry="6.7" fill="none" stroke="#0000ff" stroke-width="1.8"/></svg>
<span style="left:348.11px;top:135.27px;font-size:11.5px;line-height:11.5px;color:#000;-webkit-text-stroke:0;">400</span>
<span style="left:344.92px;top:275.27px;font-size:11.5px;line-height:11.5px;color:#000;-webkit-text-stroke:0;">66.7</span>
<span style="left:338.52px;top:414.27px;font-size:11.5px;line-height:11.5px;color:#000;-webkit-text-stroke:0;">0.000</span>
<span style="left:341.09px;top:563.27px;font-size:11.5px;line-height:11.5px;color:#000;-webkit-text-stroke:0;">-73.9</span>
<span style="left:344.28px;top:711.27px;font-size:11.5px;line-height:11.5px;color:#000;-webkit-text-stroke:0;">-567</span>
<span style="left:378.29px;top:730.27px;font-size:11.5px;line-height:11.5px;color:#000;-webkit-text-stroke:0;">-471</span>
<span style="left:519.89px;top:730.27px;font-size:11.5px;line-height:11.5px;color:#000;-webkit-text-stroke:0;">-70.2</span>
<span style="left:662.61px;top:730.27px;font-size:11.5px;line-height:11.5px;color:#000;-webkit-text-stroke:0;">0.000</span>
<span style="left:814.81px;top:730.27px;font-size:11.5px;line-height:11.5px;color:#000;-webkit-text-stroke:0;">73.9</span>
<span style="left:964.41px;top:730.27px;font-size:11.5px;line-height:11.5px;color:#000;-webkit-text-stroke:0;">567</span>
<svg style="left:616px;top:768px" width="120" height="8" viewBox="0 0 120 8" ><path d="M6,1.5 L10,5.5 L14,1.5" stroke="#000" stroke-width="1.6" fill="none"/><path d="M107,1.5 L111,5.5 L115,1.5" stroke="#000" stroke-width="1.6" fill="none"/></svg>
<div style="left:634px;top:771px;width:88px;height:2px;background:repeating-linear-gradient(90deg,#808080 0 1px,#fff 1px 2px,transparent 2px 3px)"></div>
<svg style="left:316px;top:360px" width="8" height="112" viewBox="0 0 8 112" ><path d="M2.2,2.5 L5.2,5.5 L2.2,8.5" stroke="#000" stroke-width="1.5" fill="none"/><path d="M2.2,102 L5.2,105 L2.2,108" stroke="#000" stroke-width="1.5" fill="none"/></svg>
<div style="left:319px;top:374px;width:2px;height:84px;background:repeating-linear-gradient(180deg,#808080 0 1px,#fff 1px 2px,transparent 2px 3px)"></div>
</div></body></html>
